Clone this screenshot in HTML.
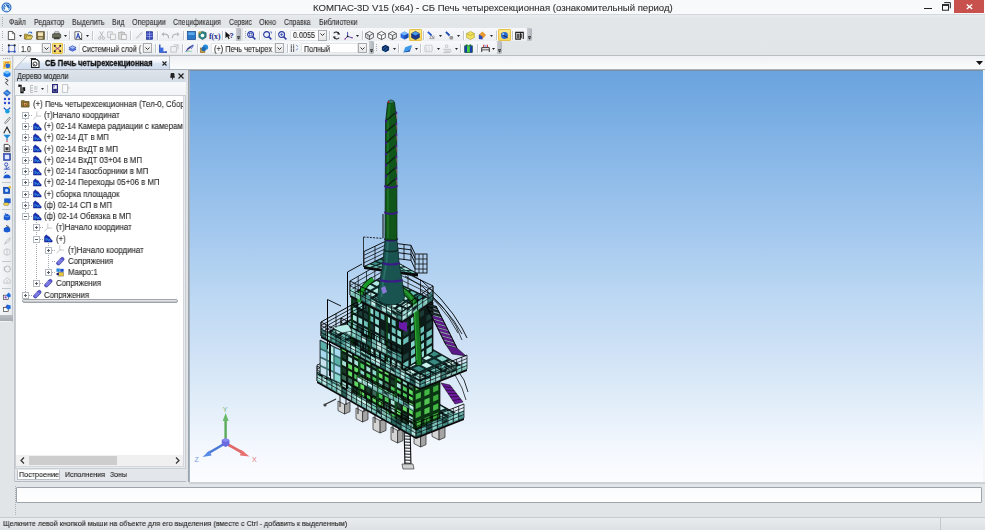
<!DOCTYPE html><html><head><meta charset="utf-8"><style>
*{margin:0;padding:0;box-sizing:border-box}
html,body{width:985px;height:530px;overflow:hidden;background:#e1e5e8;font-family:"Liberation Sans",sans-serif;position:relative}
.a{position:absolute}
.t{position:absolute;white-space:pre;line-height:1;transform-origin:0 0;will-change:transform;-webkit-text-stroke:0.12px currentColor}
svg{position:absolute;overflow:visible}
</style></head><body><div class="a" style="left:0px;top:0px;width:985px;height:15px;background:#f8f9fa"></div><svg style="left:1px;top:2px;" width="11" height="11" viewBox="0 0 11 11"><circle cx="5.5" cy="5.5" r="5" fill="#2d6bc0"/><circle cx="5.5" cy="5.5" r="3.6" fill="none" stroke="#bfe0ff" stroke-width="0.8"/><path d="M3 8.5 L5.5 4 L8 8.5 Z" fill="#fff"/><path d="M4 2.5 L7.5 9" stroke="#fff" stroke-width="1"/><path d="M3.2 5 L7.8 6.5" stroke="#dff" stroke-width="0.9"/></svg><div class="t" style="left:312.7px;top:3.83px;font-size:9.3px;font-weight:normal;color:#333;transform:scaleX(1.029);">КОМПАС-3D V15 (x64) - СБ Печь четырехсекционная (ознакомительный период)</div><div class="a" style="left:924px;top:8px;width:8px;height:1.3px;background:#222"></div><svg style="left:941.5px;top:1.5px;" width="9" height="9" viewBox="0 0 9 9"><rect x="0.5" y="2.6" width="6" height="5.6" fill="none" stroke="#222" stroke-width="1"/><rect x="0.5" y="2.6" width="6" height="1.3" fill="#222"/><path d="M2.2 0.6 H8.3 V6.3" fill="none" stroke="#222" stroke-width="1"/></svg><div class="a" style="left:954px;top:0px;width:30px;height:13px;background:#c8504d"></div><svg style="left:965.5px;top:3.5px;" width="7" height="5.5" viewBox="0 0 7 5.5"><path d="M0.8 0.5 L6.2 5 M6.2 0.5 L0.8 5" stroke="#fff" stroke-width="1.4"/></svg><div class="a" style="left:0px;top:14px;width:985px;height:1px;background:#d3d7db"></div><div class="a" style="left:0px;top:15px;width:985px;height:41px;background:linear-gradient(#e9ecef 0,#e3e6e9 4px,#e1e5e8 100%)"></div><div class="t" style="left:8.8px;top:18.10px;font-size:8.5px;font-weight:normal;color:#333;transform:scaleX(0.804);">Файл</div><div class="t" style="left:33.5px;top:18.10px;font-size:8.5px;font-weight:normal;color:#333;transform:scaleX(0.833);">Редактор</div><div class="t" style="left:71.7px;top:18.10px;font-size:8.5px;font-weight:normal;color:#333;transform:scaleX(0.829);">Выделить</div><div class="t" style="left:111.9px;top:18.10px;font-size:8.5px;font-weight:normal;color:#333;transform:scaleX(0.806);">Вид</div><div class="t" style="left:131.6px;top:18.10px;font-size:8.5px;font-weight:normal;color:#333;transform:scaleX(0.850);">Операции</div><div class="t" style="left:172.8px;top:18.10px;font-size:8.5px;font-weight:normal;color:#333;transform:scaleX(0.804);">Спецификация</div><div class="t" style="left:228.7px;top:18.10px;font-size:8.5px;font-weight:normal;color:#333;transform:scaleX(0.790);">Сервис</div><div class="t" style="left:259.1px;top:18.10px;font-size:8.5px;font-weight:normal;color:#333;transform:scaleX(0.865);">Окно</div><div class="t" style="left:283.7px;top:18.10px;font-size:8.5px;font-weight:normal;color:#333;transform:scaleX(0.797);">Справка</div><div class="t" style="left:318.8px;top:18.10px;font-size:8.5px;font-weight:normal;color:#333;transform:scaleX(0.834);">Библиотеки</div><svg style="left:2px;top:17px;" width="2" height="9" viewBox="0 0 2 9"><rect x="0" y="0" width="1" height="1" fill="#a9adb2"/><rect x="0" y="2" width="1" height="1" fill="#a9adb2"/><rect x="0" y="4" width="1" height="1" fill="#a9adb2"/><rect x="0" y="6" width="1" height="1" fill="#a9adb2"/><rect x="0" y="8" width="1" height="1" fill="#a9adb2"/></svg><div class="a" style="left:0px;top:28px;width:236px;height:13px;background:linear-gradient(#f7f8fa,#eceff2);border-radius:0 2px 2px 0"></div><svg style="left:1.5px;top:31px;" width="2" height="7" viewBox="0 0 2 7"><rect x="0" y="0" width="1" height="1" fill="#a6aab0"/><rect x="0" y="2" width="1" height="1" fill="#a6aab0"/><rect x="0" y="4" width="1" height="1" fill="#a6aab0"/><rect x="0" y="6" width="1" height="1" fill="#a6aab0"/></svg><div class="a" style="left:236px;top:28px;width:5px;height:13px;background:linear-gradient(90deg,#c9cdd2,#aeb3b9);border-radius:0 2px 2px 0"></div><svg style="left:236px;top:36px;" width="5" height="4" viewBox="0 0 5 4"><rect x="1" y="0" width="3" height="0.8" fill="#333"/><path d="M0.8 1.6 H4.2 L2.5 3.4Z" fill="#222"/></svg><div class="a" style="left:243px;top:28px;width:284px;height:13px;background:linear-gradient(#f7f8fa,#eceff2);border-radius:0 2px 2px 0"></div><svg style="left:244.5px;top:31px;" width="2" height="7" viewBox="0 0 2 7"><rect x="0" y="0" width="1" height="1" fill="#a6aab0"/><rect x="0" y="2" width="1" height="1" fill="#a6aab0"/><rect x="0" y="4" width="1" height="1" fill="#a6aab0"/><rect x="0" y="6" width="1" height="1" fill="#a6aab0"/></svg><div class="a" style="left:527px;top:28px;width:5px;height:13px;background:linear-gradient(90deg,#c9cdd2,#aeb3b9);border-radius:0 2px 2px 0"></div><svg style="left:527px;top:36px;" width="5" height="4" viewBox="0 0 5 4"><rect x="1" y="0" width="3" height="0.8" fill="#333"/><path d="M0.8 1.6 H4.2 L2.5 3.4Z" fill="#222"/></svg><div class="a" style="left:0px;top:41px;width:369px;height:13px;background:linear-gradient(#f7f8fa,#eceff2);border-radius:0 2px 2px 0"></div><svg style="left:1.5px;top:44px;" width="2" height="7" viewBox="0 0 2 7"><rect x="0" y="0" width="1" height="1" fill="#a6aab0"/><rect x="0" y="2" width="1" height="1" fill="#a6aab0"/><rect x="0" y="4" width="1" height="1" fill="#a6aab0"/><rect x="0" y="6" width="1" height="1" fill="#a6aab0"/></svg><div class="a" style="left:369px;top:41px;width:5px;height:13px;background:linear-gradient(90deg,#c9cdd2,#aeb3b9);border-radius:0 2px 2px 0"></div><svg style="left:369px;top:49px;" width="5" height="4" viewBox="0 0 5 4"><rect x="1" y="0" width="3" height="0.8" fill="#333"/><path d="M0.8 1.6 H4.2 L2.5 3.4Z" fill="#222"/></svg><div class="a" style="left:374px;top:41px;width:123px;height:13px;background:linear-gradient(#f7f8fa,#eceff2);border-radius:0 2px 2px 0"></div><svg style="left:375.5px;top:44px;" width="2" height="7" viewBox="0 0 2 7"><rect x="0" y="0" width="1" height="1" fill="#a6aab0"/><rect x="0" y="2" width="1" height="1" fill="#a6aab0"/><rect x="0" y="4" width="1" height="1" fill="#a6aab0"/><rect x="0" y="6" width="1" height="1" fill="#a6aab0"/></svg><div class="a" style="left:497px;top:41px;width:5px;height:13px;background:linear-gradient(90deg,#c9cdd2,#aeb3b9);border-radius:0 2px 2px 0"></div><svg style="left:497px;top:49px;" width="5" height="4" viewBox="0 0 5 4"><rect x="1" y="0" width="3" height="0.8" fill="#333"/><path d="M0.8 1.6 H4.2 L2.5 3.4Z" fill="#222"/></svg><div class="a" style="left:0px;top:55px;width:985px;height:1px;background:#b9bdc2"></div><svg style="left:7px;top:31px" width="9" height="9" viewBox="0 0 10 10"><path d="M1.5 0.5 H6 L8.5 3 V9.5 H1.5Z" fill="#fff" stroke="#333" stroke-width="0.9"/><path d="M6 0.5 V3 H8.5" fill="none" stroke="#333" stroke-width="0.7"/></svg><svg style="left:19px;top:35px" width="3" height="2" viewBox="0 0 3 2"><path d="M0 0 H3 L1.5 2Z" fill="#222"/></svg><svg style="left:23.5px;top:31px" width="9" height="9" viewBox="0 0 10 10"><path d="M0.5 3.5 H3.5 L4.5 4.5 H8 V9 H0.5Z" fill="#c9a83a" stroke="#6b5a18" stroke-width="0.7"/><path d="M1.5 9 L3 5.5 H9.8 L8 9Z" fill="#e8d46a" stroke="#6b5a18" stroke-width="0.6"/><path d="M4.5 2.5 Q6.5 0 8.5 1.8" fill="none" stroke="#1f5fd0" stroke-width="1.1"/><path d="M8.8 0.6 L9.2 2.8 L7.2 2.6Z" fill="#1f5fd0"/></svg><svg style="left:35.5px;top:31px" width="9" height="9" viewBox="0 0 10 10"><rect x="0.8" y="0.8" width="8.4" height="8.4" fill="#7a6a3a" stroke="#4a3f20" stroke-width="0.8"/><rect x="2.2" y="1.5" width="5.6" height="4" fill="#f2e2b8"/><rect x="2.5" y="6.5" width="5" height="2.5" fill="#c8b78a"/></svg><div class="a" style="left:47px;top:30.5px;width:1px;height:9px;background:#c2c7cc;box-shadow:1px 0 0 #fff"></div><svg style="left:51.5px;top:31px" width="9" height="9" viewBox="0 0 10 10"><path d="M2.5 3 L3.2 0.8 H7.5 L8 3Z" fill="#ddd" stroke="#555" stroke-width="0.6"/><path d="M0.5 4 Q0.5 3 2 3 H8.5 Q9.7 3 9.7 4.5 V7.5 H0.5Z" fill="#6a6d58" stroke="#333" stroke-width="0.7"/><rect x="2" y="7" width="6.5" height="2.2" fill="#3d3f30"/></svg><svg style="left:63.5px;top:35px" width="3" height="2" viewBox="0 0 3 2"><path d="M0 0 H3 L1.5 2Z" fill="#222"/></svg><div class="a" style="left:69px;top:30.5px;width:1px;height:9px;background:#c2c7cc;box-shadow:1px 0 0 #fff"></div><svg style="left:73.5px;top:31px" width="9" height="9" viewBox="0 0 10 10"><path d="M1 0.8 H6.5 L8.5 2.8 V9.2 H1Z" fill="#fff" stroke="#333" stroke-width="0.8"/><path d="M2.5 8.5 L4.6 2.5 L6.5 8.5 M3.3 6.5 H5.9" fill="none" stroke="#2040b0" stroke-width="1.1"/><path d="M6.2 7.8 L9 9.5" stroke="#222" stroke-width="1"/></svg><svg style="left:86px;top:35px" width="3" height="2" viewBox="0 0 3 2"><path d="M0 0 H3 L1.5 2Z" fill="#222"/></svg><div class="a" style="left:91.5px;top:30.5px;width:1px;height:9px;background:#c2c7cc;box-shadow:1px 0 0 #fff"></div><svg style="left:96.5px;top:31px" width="9" height="9" viewBox="0 0 10 10"><path d="M3 0.5 L6.5 6.5 M7 0.5 L3.5 6.5" stroke="#a8acb0" stroke-width="0.9"/><circle cx="3" cy="8" r="1.4" fill="none" stroke="#a8acb0" stroke-width="0.8"/><circle cx="7" cy="8" r="1.4" fill="none" stroke="#a8acb0" stroke-width="0.8"/></svg><svg style="left:106.5px;top:31px" width="9" height="9" viewBox="0 0 10 10"><rect x="0.8" y="1" width="5" height="6" fill="#f0f0f0" stroke="#b0b4b8" stroke-width="0.8"/><rect x="4" y="3.5" width="5.2" height="6" fill="#f4f4f4" stroke="#b0b4b8" stroke-width="0.8"/></svg><svg style="left:117.5px;top:31px" width="9" height="9" viewBox="0 0 10 10"><rect x="0.8" y="1.5" width="6.5" height="7.5" fill="#ddd" stroke="#aaa" stroke-width="0.8"/><rect x="4" y="4" width="5.2" height="5.5" fill="#f4f4f4" stroke="#aaa" stroke-width="0.8"/><rect x="2.5" y="0.5" width="3" height="2" fill="#bbb"/></svg><div class="a" style="left:129.5px;top:30.5px;width:1px;height:9px;background:#c2c7cc;box-shadow:1px 0 0 #fff"></div><svg style="left:133.5px;top:31px" width="9" height="9" viewBox="0 0 10 10"><path d="M1.5 8.5 L4.5 5 L6 6.5 L2.5 9Z" fill="#c8ccd0"/><path d="M5 5 L9 0.8 M6 6 L9.5 2" stroke="#b8bcc0" stroke-width="0.9"/></svg><svg style="left:145px;top:31px" width="9" height="9" viewBox="0 0 10 10"><rect x="1.5" y="0.8" width="7" height="8.4" fill="#3a4ab8" stroke="#1a2a80" stroke-width="0.7"/><path d="M1.5 3.5 H8.5 M1.5 6.2 H8.5 M5 0.8 V9.2" stroke="#aab8ff" stroke-width="0.7"/></svg><div class="a" style="left:156.5px;top:30.5px;width:1px;height:9px;background:#c2c7cc;box-shadow:1px 0 0 #fff"></div><svg style="left:160.5px;top:31px" width="9" height="9" viewBox="0 0 10 10"><path d="M8.5 8 Q8.5 3.5 4 3.5 H2" fill="none" stroke="#b0b4b8" stroke-width="1.3"/><path d="M0.5 3.5 L3.2 1 V6Z" fill="#b0b4b8"/></svg><svg style="left:171px;top:31px" width="9" height="9" viewBox="0 0 10 10"><path d="M1.5 8 Q1.5 3.5 6 3.5 H8" fill="none" stroke="#b8bcc0" stroke-width="1.3"/><path d="M9.5 3.5 L6.8 1 V6Z" fill="#b8bcc0"/></svg><div class="a" style="left:183px;top:30.5px;width:1px;height:9px;background:#c2c7cc;box-shadow:1px 0 0 #fff"></div><svg style="left:186.5px;top:31px" width="9" height="9" viewBox="0 0 10 10"><rect x="0.5" y="0.5" width="9" height="9" fill="#2a78c8" stroke="#164a90" stroke-width="0.8"/><rect x="1.5" y="1.5" width="7" height="3" fill="#5aa8e8"/></svg><svg style="left:197.5px;top:31px" width="9" height="9" viewBox="0 0 10 10"><path d="M1 2 L5 0.5 L9 2 V7 L5 9.5 L1 7Z" fill="#2a8a8a" stroke="#1a4a4a" stroke-width="0.7"/><circle cx="5" cy="5" r="2" fill="#fff"/><circle cx="2" cy="1.5" r="1.3" fill="#c8a030"/></svg><svg style="left:208.5px;top:31px" width="9" height="9" viewBox="0 0 10 10"><text x="0" y="8.5" font-family="Liberation Serif" font-size="8.5" font-weight="bold" fill="#1a2a8a">f(x)</text></svg><div class="a" style="left:222px;top:30.5px;width:1px;height:9px;background:#c2c7cc;box-shadow:1px 0 0 #fff"></div><svg style="left:224.5px;top:31px" width="9" height="9" viewBox="0 0 10 10"><path d="M0.5 0.5 L0.5 8 L2.5 6.2 L4 9.3 L5.2 8.7 L3.8 5.7 L6.2 5.7Z" fill="#111"/><text x="4.6" y="7.5" font-family="Liberation Sans" font-size="8" font-weight="bold" fill="#1a2a8a">?</text></svg><svg style="left:247px;top:31px" width="9" height="9" viewBox="0 0 10 10"><circle cx="4" cy="4" r="3.3" fill="#e8f0ff" stroke="#2a3aa0" stroke-width="1.2"/><path d="M6.3 6.3 L9.3 9.3" stroke="#2a3aa0" stroke-width="1.6"/><rect x="2.5" y="2.5" width="3" height="3" fill="none" stroke="#2a3aa0" stroke-width="0.7"/></svg><div class="a" style="left:259px;top:30.5px;width:1px;height:9px;background:#c2c7cc;box-shadow:1px 0 0 #fff"></div><svg style="left:262.5px;top:31px" width="9" height="9" viewBox="0 0 10 10"><circle cx="4" cy="4" r="3.3" fill="#e8f0ff" stroke="#2a3aa0" stroke-width="1.2"/><path d="M6.3 6.3 L9.3 9.3" stroke="#2a3aa0" stroke-width="1.6"/><path d="M7.5 1 H9.5 V3" fill="none" stroke="#2a3aa0" stroke-width="0.6"/></svg><div class="a" style="left:275px;top:30.5px;width:1px;height:9px;background:#c2c7cc;box-shadow:1px 0 0 #fff"></div><svg style="left:278px;top:31px" width="9" height="9" viewBox="0 0 10 10"><circle cx="4" cy="4" r="3.3" fill="#e8f0ff" stroke="#2a3aa0" stroke-width="1.2"/><path d="M6.3 6.3 L9.3 9.3" stroke="#2a3aa0" stroke-width="1.6"/><path d="M2.3 4 H5.7 M4 2.3 V5.7" stroke="#2a3aa0" stroke-width="0.8"/></svg><div class="a" style="left:290px;top:29.5px;width:36px;height:11px;background:#fff;border:1px solid #e4e6e8"></div><div class="a" style="left:318px;top:29.5px;width:8.5px;height:11px;background:linear-gradient(#f6f6f6,#e6e6e6);border:1px solid #a8acb0"></div><svg style="left:319.8px;top:33.0px;" width="5" height="3" viewBox="0 0 5 3"><path d="M0.5 0.5 L2.5 2.5 L4.5 0.5" fill="none" stroke="#333" stroke-width="1"/></svg><div class="t" style="left:293.3px;top:31.07px;font-size:8.3px;font-weight:normal;color:#222;transform:scaleX(0.866);">0.0055</div><div class="a" style="left:329px;top:30.5px;width:1px;height:9px;background:#c2c7cc;box-shadow:1px 0 0 #fff"></div><svg style="left:332px;top:31px" width="9" height="9" viewBox="0 0 10 10"><path d="M2 2.5 A3.5 3.5 0 0 1 8 3.5 M8 7.5 A3.5 3.5 0 0 1 2 6.5" fill="none" stroke="#222" stroke-width="1.2"/><path d="M7 1 L9 4 L5.8 4Z M3 9 L1 6 L4.2 6Z" fill="#222"/></svg><svg style="left:344px;top:31px" width="9" height="9" viewBox="0 0 10 10"><path d="M4 1 V6 L1 9 M4 6 L9 7.5" fill="none" stroke="#2a2aa0" stroke-width="0.9"/><circle cx="4" cy="6" r="1" fill="#222"/><circle cx="1.2" cy="8.8" r="0.8" fill="#a020a0"/><circle cx="9" cy="7.5" r="0.8" fill="#a020a0"/></svg><svg style="left:356px;top:35px" width="3" height="2" viewBox="0 0 3 2"><path d="M0 0 H3 L1.5 2Z" fill="#222"/></svg><div class="a" style="left:362px;top:30.5px;width:1px;height:9px;background:#c2c7cc;box-shadow:1px 0 0 #fff"></div><svg style="left:365px;top:31px" width="9" height="9" viewBox="0 0 10 10"><path d="M5 0.5 L9.3 2.8 V7.3 L5 9.5 L0.7 7.3 V2.8Z M0.7 2.8 L5 5 L9.3 2.8 M5 5 V9.5" fill="none" stroke="#333" stroke-width="0.8"/><path d="M3 4 V7 L6.5 5.5" fill="none" stroke="#555" stroke-width="0.5"/></svg><svg style="left:376.5px;top:31px" width="9" height="9" viewBox="0 0 10 10"><path d="M5 0.5 L9.3 2.8 V7.3 L5 9.5 L0.7 7.3 V2.8Z M0.7 2.8 L5 5 L9.3 2.8 M5 5 V9.5" fill="#fff" stroke="#333" stroke-width="0.8"/></svg><svg style="left:388px;top:31px" width="9" height="9" viewBox="0 0 10 10"><path d="M5 0.5 L9.3 2.8 V7.3 L5 9.5 L0.7 7.3 V2.8Z M0.7 2.8 L5 5 L9.3 2.8 M5 5 V9.5" fill="#f4f4f4" stroke="#333" stroke-width="0.8"/><path d="M6.5 4.5 V8" stroke="#888" stroke-width="0.5"/></svg><svg style="left:399.5px;top:31px" width="9" height="9" viewBox="0 0 10 10"><path d="M5 0.5 L9.3 2.8 V7.3 L5 9.5 L0.7 7.3 V2.8Z" fill="#2a6ae0"/><path d="M0.7 2.8 L5 5 L9.3 2.8 L5 0.5Z" fill="#7ab8ff"/><path d="M5 5 V9.5 L9.3 7.3 V2.8Z" fill="#1a4ab0"/></svg><div class="a" style="left:409px;top:29px;width:12.5px;height:12px;background:linear-gradient(#fbe98e,#f5d860);border:1px solid #e6c24a;border-radius:1px"></div><svg style="left:410.8px;top:31px" width="9" height="9" viewBox="0 0 10 10"><path d="M5 0.5 L9.3 2.8 V7.3 L5 9.5 L0.7 7.3 V2.8Z" fill="#1a3a90" stroke="#0a1a50" stroke-width="0.7"/><path d="M0.7 2.8 L5 5 L9.3 2.8 L5 0.5Z" fill="#4a9ae8"/></svg><div class="a" style="left:423px;top:30.5px;width:1px;height:9px;background:#c2c7cc;box-shadow:1px 0 0 #fff"></div><svg style="left:427px;top:31px" width="9" height="9" viewBox="0 0 10 10"><path d="M1 1 L5 5" stroke="#2a5ad0" stroke-width="2"/><path d="M5 5 L8 8.5 H3Z" fill="none" stroke="#666" stroke-width="0.6"/><circle cx="7" cy="6.5" r="1.2" fill="none" stroke="#888" stroke-width="0.6"/></svg><svg style="left:439px;top:35px" width="3" height="2" viewBox="0 0 3 2"><path d="M0 0 H3 L1.5 2Z" fill="#222"/></svg><svg style="left:445px;top:31px" width="9" height="9" viewBox="0 0 10 10"><path d="M1 1 L5 5" stroke="#1a4ab0" stroke-width="2"/><rect x="5" y="5.5" width="4" height="4" rx="1" fill="#999"/></svg><svg style="left:457px;top:35px" width="3" height="2" viewBox="0 0 3 2"><path d="M0 0 H3 L1.5 2Z" fill="#222"/></svg><div class="a" style="left:462.5px;top:30.5px;width:1px;height:9px;background:#c2c7cc;box-shadow:1px 0 0 #fff"></div><svg style="left:466px;top:31px" width="9" height="9" viewBox="0 0 10 10"><path d="M5 0.5 L9.3 2.8 V7.3 L5 9.5 L0.7 7.3 V2.8Z" fill="#f0e060" stroke="#a09020" stroke-width="0.6"/><path d="M0.7 2.8 L5 5 L9.3 2.8" fill="none" stroke="#a09020" stroke-width="0.6"/></svg><svg style="left:478px;top:31px" width="9" height="9" viewBox="0 0 10 10"><path d="M1 9 V4 L5 0.5 L9 4.5 L5 9Z" fill="#e89a30"/><path d="M1 9 V4 L5 6 V9.5Z" fill="#2a4ac0"/></svg><svg style="left:490px;top:35px" width="3" height="2" viewBox="0 0 3 2"><path d="M0 0 H3 L1.5 2Z" fill="#222"/></svg><div class="a" style="left:496px;top:30.5px;width:1px;height:9px;background:#c2c7cc;box-shadow:1px 0 0 #fff"></div><div class="a" style="left:498px;top:29px;width:12.5px;height:12px;background:linear-gradient(#fbe98e,#f5d860);border:1px solid #e6c24a;border-radius:1px"></div><svg style="left:500px;top:31px" width="9" height="9" viewBox="0 0 10 10"><circle cx="5" cy="5" r="3.8" fill="#2a6ad0"/><path d="M1.5 3 Q5 6 8.5 7.5" stroke="#1a1a40" stroke-width="1"/><circle cx="3.5" cy="3.5" r="1.2" fill="#8ac8ff"/></svg><div class="a" style="left:512px;top:30.5px;width:1px;height:9px;background:#c2c7cc;box-shadow:1px 0 0 #fff"></div><svg style="left:515px;top:31px" width="9" height="9" viewBox="0 0 10 10"><path d="M0.8 1.5 H6 V9 H0.8Z M6 1.5 H9.2 V9" fill="none" stroke="#222" stroke-width="1.2"/><rect x="2" y="3" width="3" height="5" fill="#555"/><path d="M7 3 V8" stroke="#222" stroke-width="1"/></svg><svg style="left:6.5px;top:44px" width="9" height="9" viewBox="0 0 10 10"><path d="M2 1.5 V8.5 H8.5 M8.5 8.5 V1.5 M2 1.5 H8.5" fill="none" stroke="#2a4ab0" stroke-width="0.9"/><circle cx="2" cy="1.5" r="1.2" fill="#222"/><circle cx="8.5" cy="1.5" r="1.2" fill="#222"/><circle cx="2" cy="8.5" r="1.2" fill="#2a4ab0"/><circle cx="8.5" cy="8.5" r="1.2" fill="#2a4ab0"/></svg><div class="a" style="left:17.5px;top:43px;width:24.5px;height:10px;background:#fff;border:1px solid #e4e6e8"></div><div class="a" style="left:42.2px;top:43px;width:8.5px;height:10px;background:linear-gradient(#f6f6f6,#e6e6e6);border:1px solid #a8acb0"></div><svg style="left:44.0px;top:46.5px;" width="5" height="3" viewBox="0 0 5 3"><path d="M0.5 0.5 L2.5 2.5 L4.5 0.5" fill="none" stroke="#333" stroke-width="1"/></svg><div class="t" style="left:20.8px;top:44.57px;font-size:8.3px;font-weight:normal;color:#222;transform:scaleX(0.857);">1.0</div><div class="a" style="left:51.5px;top:42.8px;width:11px;height:11px;background:linear-gradient(#fbe98e,#f5d860);border:1px solid #e6c24a;border-radius:1px"></div><svg style="left:52.5px;top:44px" width="9" height="9" viewBox="0 0 10 10"><path d="M1 2 L9 8 M1 8 L9 2" stroke="#8a20a0" stroke-width="0.9"/><circle cx="2" cy="2" r="1.1" fill="#222"/><circle cx="8" cy="8" r="1.1" fill="#222"/><circle cx="8" cy="2" r="1.1" fill="#222"/><circle cx="2" cy="8" r="1.1" fill="#222"/></svg><div class="a" style="left:64px;top:43.5px;width:1px;height:9px;background:#c2c7cc;box-shadow:1px 0 0 #fff"></div><svg style="left:67.5px;top:44px" width="9" height="9" viewBox="0 0 10 10"><path d="M1 6 L5 4 L9 6 L5 8Z" fill="#6a8ae8" stroke="#1a3ab0" stroke-width="0.7"/><path d="M1 4 L5 2 L9 4 L5 6Z" fill="#aac0ff" stroke="#1a3ab0" stroke-width="0.7"/></svg><div class="a" style="left:79px;top:43px;width:64px;height:10px;background:#fff;border:1px solid #e4e6e8"></div><div class="a" style="left:143px;top:43px;width:8.5px;height:10px;background:linear-gradient(#f6f6f6,#e6e6e6);border:1px solid #a8acb0"></div><svg style="left:144.8px;top:46.5px;" width="5" height="3" viewBox="0 0 5 3"><path d="M0.5 0.5 L2.5 2.5 L4.5 0.5" fill="none" stroke="#333" stroke-width="1"/></svg><div class="t" style="left:82.3px;top:44.57px;font-size:8.3px;font-weight:normal;color:#222;transform:scaleX(0.847);">Системный слой (</div><div class="a" style="left:155px;top:43.5px;width:1px;height:9px;background:#c2c7cc;box-shadow:1px 0 0 #fff"></div><svg style="left:157.5px;top:44px" width="9" height="9" viewBox="0 0 10 10"><path d="M2 0.5 V9 H9.5" fill="none" stroke="#1a3ab0" stroke-width="1.4"/><rect x="2" y="4" width="4" height="5" fill="#3a6ae0"/><circle cx="9" cy="9" r="0.9" fill="#1a3ab0"/></svg><svg style="left:169.5px;top:44px" width="9" height="9" viewBox="0 0 10 10"><rect x="1" y="3" width="6" height="6" fill="none" stroke="#b0b4b8" stroke-width="0.8"/><path d="M4 1 H9 V6" fill="none" stroke="#b0b4b8" stroke-width="0.8"/><circle cx="8.5" cy="1.5" r="1" fill="#c8ccd0"/></svg><div class="a" style="left:181.5px;top:43.5px;width:1px;height:9px;background:#c2c7cc;box-shadow:1px 0 0 #fff"></div><svg style="left:184.5px;top:44px" width="9" height="9" viewBox="0 0 10 10"><path d="M1 9 L3 5 L9 1" stroke="#2a3ab0" stroke-width="1"/><path d="M1 9 L5 7 L4 5Z" fill="#c8a0e0"/><path d="M5 3 L7 5 L9.5 1.5" fill="none" stroke="#1a3ab0" stroke-width="0.9"/><rect x="1" y="7.5" width="7" height="1.5" fill="#8ad0a0" opacity="0.7"/></svg><div class="a" style="left:197px;top:43.5px;width:1px;height:9px;background:#c2c7cc;box-shadow:1px 0 0 #fff"></div><svg style="left:199.5px;top:44px" width="9" height="9" viewBox="0 0 10 10"><rect x="0.5" y="4.5" width="5" height="5" fill="#c89a40" stroke="#805a10" stroke-width="0.6"/><circle cx="6" cy="3.5" r="3" fill="#2a8ad8"/><circle cx="4" cy="5.5" r="2.5" fill="#1a6ab8"/></svg><div class="a" style="left:211px;top:43px;width:64px;height:10px;background:#fff;border:1px solid #e4e6e8"></div><div class="a" style="left:275px;top:43px;width:8.5px;height:10px;background:linear-gradient(#f6f6f6,#e6e6e6);border:1px solid #a8acb0"></div><svg style="left:276.8px;top:46.5px;" width="5" height="3" viewBox="0 0 5 3"><path d="M0.5 0.5 L2.5 2.5 L4.5 0.5" fill="none" stroke="#333" stroke-width="1"/></svg><div class="t" style="left:214.3px;top:44.57px;font-size:8.3px;font-weight:normal;color:#222;transform:scaleX(0.885);">(+) Печь четырех</div><div class="a" style="left:287px;top:43.5px;width:1px;height:9px;background:#c2c7cc;box-shadow:1px 0 0 #fff"></div><svg style="left:289.5px;top:44px" width="9" height="9" viewBox="0 0 10 10"><path d="M1.5 0.5 V9.5 M4 0.5 V9.5" stroke="#333" stroke-width="1.2" stroke-dasharray="1 0.5"/><path d="M7 1 L8.5 3 M8.5 5 L7 7" stroke="#2a5ab0" stroke-width="0.8"/></svg><div class="a" style="left:301px;top:43px;width:57px;height:10px;background:#fff;border:1px solid #e4e6e8"></div><div class="a" style="left:358px;top:43px;width:8.5px;height:10px;background:linear-gradient(#f6f6f6,#e6e6e6);border:1px solid #a8acb0"></div><svg style="left:359.8px;top:46.5px;" width="5" height="3" viewBox="0 0 5 3"><path d="M0.5 0.5 L2.5 2.5 L4.5 0.5" fill="none" stroke="#333" stroke-width="1"/></svg><div class="t" style="left:304.3px;top:44.57px;font-size:8.3px;font-weight:normal;color:#222;transform:scaleX(0.855);">Полный</div><svg style="left:380.5px;top:44px" width="9" height="9" viewBox="0 0 10 10"><path d="M1 3 L5 0.8 L9 3 V7 L5 9.2 L1 7Z" fill="#0a2a60"/><path d="M2 6 L6 2.5 M3.5 8 L7.5 4.5" stroke="#3a8ad0" stroke-width="0.8"/></svg><svg style="left:393px;top:48px" width="3" height="2" viewBox="0 0 3 2"><path d="M0 0 H3 L1.5 2Z" fill="#222"/></svg><div class="a" style="left:398px;top:43.5px;width:1px;height:9px;background:#c2c7cc;box-shadow:1px 0 0 #fff"></div><svg style="left:403px;top:44px" width="9" height="9" viewBox="0 0 10 10"><path d="M0.5 9 L2.5 3.5 L9.5 1 L7.5 6.5Z" fill="#3a9ae8"/><path d="M0.5 9 L7.5 6.5 L9.5 1 V3 L7.5 8.5 L0.5 9.5Z" fill="#1a5ab8"/></svg><svg style="left:415px;top:48px" width="3" height="2" viewBox="0 0 3 2"><path d="M0 0 H3 L1.5 2Z" fill="#222"/></svg><div class="a" style="left:420px;top:43.5px;width:1px;height:9px;background:#c2c7cc;box-shadow:1px 0 0 #fff"></div><svg style="left:424px;top:44px" width="9" height="9" viewBox="0 0 10 10"><path d="M1 2 Q3 0 5 2 Q7 0 9 2 V8 Q7 10 5 8 Q3 10 1 8Z" fill="none" stroke="#b8bcc0" stroke-width="0.8"/><path d="M3 3 V8 M6 3 V8" stroke="#c0c4c8" stroke-width="0.6"/></svg><svg style="left:437px;top:48px" width="3" height="2" viewBox="0 0 3 2"><path d="M0 0 H3 L1.5 2Z" fill="#222"/></svg><svg style="left:443px;top:44px" width="9" height="9" viewBox="0 0 10 10"><circle cx="4" cy="2.5" r="1.5" fill="none" stroke="#a8acb0" stroke-width="0.7"/><path d="M0.5 6 H9 M1.5 8 H9.5 M0.5 9.5 H8" stroke="#a8acb0" stroke-width="0.7"/></svg><svg style="left:455px;top:48px" width="3" height="2" viewBox="0 0 3 2"><path d="M0 0 H3 L1.5 2Z" fill="#222"/></svg><div class="a" style="left:460px;top:43.5px;width:1px;height:9px;background:#c2c7cc;box-shadow:1px 0 0 #fff"></div><svg style="left:464px;top:44px" width="9" height="9" viewBox="0 0 10 10"><rect x="0.8" y="2" width="8.4" height="7.5" fill="#40d040" stroke="#104a10" stroke-width="0.7"/><rect x="0.8" y="2" width="2.5" height="7.5" fill="#1a3ab0"/><rect x="6.5" y="2" width="2.7" height="7.5" fill="#1a3ab0"/><rect x="2" y="0.5" width="2" height="2" fill="#1a7a30"/><rect x="6" y="0.5" width="2" height="2" fill="#1a7a30"/></svg><div class="a" style="left:477px;top:43.5px;width:1px;height:9px;background:#c2c7cc;box-shadow:1px 0 0 #fff"></div><svg style="left:480.5px;top:44px" width="9" height="9" viewBox="0 0 10 10"><path d="M0.8 9 V4 H9.2 V9" fill="none" stroke="#222" stroke-width="1"/><path d="M0.8 6.5 H9.2" stroke="#222" stroke-width="0.8"/><path d="M3 0.8 V3.5 M7 0.8 V3.5" stroke="#d02020" stroke-width="1.1"/><path d="M4 1.5 L6 3" stroke="#2a4ad0" stroke-width="0.8"/></svg><svg style="left:492px;top:48px" width="3" height="2" viewBox="0 0 3 2"><path d="M0 0 H3 L1.5 2Z" fill="#222"/></svg><div class="a" style="left:14px;top:56px;width:971px;height:14px;background:linear-gradient(#eef1f4,#fbfcfd);border-bottom:1px solid #a9b0b7"></div><svg style="left:14px;top:55px" width="160" height="15" viewBox="0 0 160 15"><defs><linearGradient id="tg" x1="0" y1="0" x2="0" y2="1"><stop offset="0" stop-color="#ffffff"/><stop offset="0.45" stop-color="#eef3f9"/><stop offset="0.55" stop-color="#d9e4f2"/><stop offset="1" stop-color="#d0dcee"/></linearGradient></defs><path d="M0 14.5 L13 1 H155.5 V14.5 Z" fill="url(#tg)" stroke="#a9b0b7" stroke-width="0.8"/></svg><div class="t" style="left:45.0px;top:58.75px;font-size:8.8px;font-weight:bold;color:#111;transform:scaleX(0.849);-webkit-text-stroke:0.35px #111">СБ Печь четырехсекционная</div><svg style="left:162px;top:60.5px;" width="5" height="5" viewBox="0 0 5 5"><path d="M0.5 0.5 L4.5 4.5 M4.5 0.5 L0.5 4.5" stroke="#222" stroke-width="1.1"/></svg><svg style="left:976px;top:61px;" width="7" height="4" viewBox="0 0 7 4"><path d="M0 0 H7 L3.5 4Z" fill="#111"/></svg><div class="a" style="left:0px;top:56px;width:13px;height:266px;background:linear-gradient(90deg,#f4f5f7,#e9ecef);border-right:1px solid #c4c9ce"></div><div class="a" style="left:0px;top:315px;width:13px;height:6px;background:linear-gradient(#b9bec4,#a5abb1)"></div><svg style="left:3px;top:57.5px;" width="8" height="1" viewBox="0 0 8 1"><rect x="0" y="0" width="1" height="1" fill="#a6aab0"/><rect x="2" y="0" width="1" height="1" fill="#a6aab0"/><rect x="4" y="0" width="1" height="1" fill="#a6aab0"/><rect x="6" y="0" width="1" height="1" fill="#a6aab0"/></svg><div class="a" style="left:13px;top:70px;width:176px;height:413px;background:#e3e7eb"></div><div class="a" style="left:14px;top:70px;width:173px;height:12px;background:linear-gradient(#dde4ec,#d3dbe4)"></div><div class="t" style="left:17.0px;top:72.19px;font-size:8.4px;font-weight:normal;color:#222;transform:scaleX(0.857);">Дерево модели</div><svg style="left:170px;top:73px;" width="5" height="7" viewBox="0 0 5 7"><path d="M1 0.5 H4 V4 H1Z M2.5 4 V6.5 M0 4.2 H5" fill="#222" stroke="#222" stroke-width="0.9"/></svg><svg style="left:178px;top:73px;" width="6" height="6" viewBox="0 0 6 6"><path d="M0.5 0.5 L5.5 5.5 M5.5 0.5 L0.5 5.5" stroke="#222" stroke-width="1.2"/></svg><div class="a" style="left:14px;top:81.5px;width:173px;height:13px;background:linear-gradient(#f8f9fa,#f1f3f5)"></div><div class="a" style="left:15px;top:95px;width:171px;height:374px;background:#fff;border:1px solid #c9ced3;box-shadow:inset -1px -1px 0 #e9ecee,inset -2px -2px 0 #d3d7db"></div><svg style="left:18px;top:84px;" width="7" height="9" viewBox="0 0 7 9"><path d="M1 0.5 V3 M1 1.5 H3 V8.5 H5 V4 H6.5 V7" fill="none" stroke="#111" stroke-width="1.3"/></svg><svg style="left:30px;top:85px;" width="8" height="8" viewBox="0 0 8 8"><path d="M0.5 0.5 H3 M0.5 3 H3 M0.5 5.5 H3 M0.5 7.5 H3 M4 2 H7.5 M4 4 H7.5 M4 6.5 H7.5" stroke="#b0b4b8" stroke-width="0.9"/><path d="M0.5 0.5 V7.5" stroke="#b8bcc0" stroke-width="0.8"/></svg><svg style="left:40.5px;top:88px;" width="3" height="2" viewBox="0 0 3 2"><path d="M0 0 H3 L1.5 2Z" fill="#333"/></svg><div class="a" style="left:47px;top:85px;width:1px;height:8px;background:#c8ccd0"></div><svg style="left:51.5px;top:84px;" width="6" height="9" viewBox="0 0 6 9"><rect x="0.6" y="0.6" width="4.8" height="7.8" fill="#fff" stroke="#2a2a7a" stroke-width="1.2"/><rect x="1.2" y="4.8" width="3.6" height="3" fill="#2a2a7a"/><path d="M2 1.5 V3.5" stroke="#2a2a7a" stroke-width="0.8"/></svg><svg style="left:62px;top:84px;" width="8" height="9" viewBox="0 0 8 9"><rect x="0.6" y="0.6" width="5" height="7.8" fill="#fafafa" stroke="#c0c4c8" stroke-width="0.9"/><path d="M5 2 L7.5 4 L5 6" fill="none" stroke="#c0c4c8" stroke-width="0.8"/></svg><div class="a" style="left:14px;top:469px;width:172px;height:13px;background:#e3e7eb"></div><div class="a" style="left:14px;top:481px;width:174px;height:1px;background:#b4bac0"></div><div class="a" style="left:13.5px;top:70px;width:1px;height:412px;background:#c2c7cc"></div><div class="a" style="left:17px;top:469.5px;width:43px;height:10px;background:#fff;border:1px solid #b9bfc5;border-top:none"></div><div class="t" style="left:18.5px;top:471.03px;font-size:8.0px;font-weight:normal;color:#222;transform:scaleX(0.898);">Построение</div><div class="t" style="left:64.5px;top:471.03px;font-size:8.0px;font-weight:normal;color:#222;transform:scaleX(0.887);">Исполнения</div><div class="t" style="left:109.5px;top:471.03px;font-size:8.0px;font-weight:normal;color:#222;transform:scaleX(0.874);">Зоны</div><div class="a" style="left:186px;top:70px;width:3px;height:412px;background:#dfe3e7;border-right:1px solid #9ea3a8"></div><div class="a" style="left:189px;top:70px;width:794px;height:412px;background:linear-gradient(#6aa3de 0%,#78ade3 10%,#a5c9ee 40%,#bcd8f3 55%,#cfe1f5 68%,#e0edf9 80%,#e8f1fb 85%,#f4f8fe 92%,#fbfcff 100%);border-top:1px solid #7d8fa2;border-left:1px solid #a4b4c4"></div><div class="a" style="left:983px;top:70px;width:2px;height:412px;background:#f3f5f7"></div><div class="a" style="left:189px;top:70px;width:794px;height:412px;overflow:hidden"><div class="a" style="left:-189px;top:-70px;width:985px;height:530px"><svg style="left:0;top:0;filter:none" width="985" height="530" viewBox="0 0 985 530"><polygon points="338.0,401.0 344.6,404.4 344.6,414.0 338.0,410.6" fill="#d4d4d4" stroke="#222" stroke-width="0.7" /><polygon points="344.6,404.4 350.0,402.2 350.0,411.6 344.6,414.0" fill="#a4a4a4" stroke="#222" stroke-width="0.7" /><line x1="340.0" y1="393.0" x2="340.0" y2="407.0" stroke="#111" stroke-width="0.9" /><line x1="346.0" y1="393.0" x2="346.0" y2="405.0" stroke="#111" stroke-width="0.9" /><polygon points="356.0,408.0 362.6,411.4 362.6,422.0 356.0,418.6" fill="#d4d4d4" stroke="#222" stroke-width="0.7" /><polygon points="362.6,411.4 368.0,409.2 368.0,419.6 362.6,422.0" fill="#a4a4a4" stroke="#222" stroke-width="0.7" /><line x1="358.0" y1="400.0" x2="358.0" y2="414.0" stroke="#111" stroke-width="0.9" /><line x1="364.0" y1="400.0" x2="364.0" y2="412.0" stroke="#111" stroke-width="0.9" /><polygon points="373.0,417.0 380.1,420.6 380.1,433.0 373.0,429.4" fill="#d4d4d4" stroke="#222" stroke-width="0.7" /><polygon points="380.1,420.6 386.0,418.3 386.0,430.4 380.1,433.0" fill="#a4a4a4" stroke="#222" stroke-width="0.7" /><line x1="375.0" y1="409.0" x2="375.0" y2="423.0" stroke="#111" stroke-width="0.9" /><line x1="382.0" y1="409.0" x2="382.0" y2="421.0" stroke="#111" stroke-width="0.9" /><polygon points="391.0,427.0 397.6,430.4 397.6,443.0 391.0,439.6" fill="#d4d4d4" stroke="#222" stroke-width="0.7" /><polygon points="397.6,430.4 403.0,428.2 403.0,440.6 397.6,443.0" fill="#a4a4a4" stroke="#222" stroke-width="0.7" /><line x1="393.0" y1="419.0" x2="393.0" y2="433.0" stroke="#111" stroke-width="0.9" /><line x1="399.0" y1="419.0" x2="399.0" y2="431.0" stroke="#111" stroke-width="0.9" /><polygon points="414.0,432.0 420.6,435.4 420.6,447.0 414.0,443.6" fill="#d4d4d4" stroke="#222" stroke-width="0.7" /><polygon points="420.6,435.4 426.0,433.2 426.0,444.6 420.6,447.0" fill="#a4a4a4" stroke="#222" stroke-width="0.7" /><line x1="416.0" y1="424.0" x2="416.0" y2="438.0" stroke="#111" stroke-width="0.9" /><line x1="422.0" y1="424.0" x2="422.0" y2="436.0" stroke="#111" stroke-width="0.9" /><polygon points="432.0,423.0 439.1,426.6 439.1,440.0 432.0,436.4" fill="#d4d4d4" stroke="#222" stroke-width="0.7" /><polygon points="439.1,426.6 445.0,424.3 445.0,437.4 439.1,440.0" fill="#a4a4a4" stroke="#222" stroke-width="0.7" /><line x1="434.0" y1="415.0" x2="434.0" y2="429.0" stroke="#111" stroke-width="0.9" /><line x1="441.0" y1="415.0" x2="441.0" y2="427.0" stroke="#111" stroke-width="0.9" /><line x1="324.0" y1="405.0" x2="336.0" y2="399.0" stroke="#333" stroke-width="1.3" /><circle cx="325" cy="405" r="1.6" fill="#444"/><line x1="404.0" y1="423.0" x2="405.0" y2="467.0" stroke="#111" stroke-width="1.1" /><line x1="410.0" y1="424.0" x2="411.0" y2="467.0" stroke="#111" stroke-width="1.1" /><line x1="404.5" y1="427.0" x2="410.5" y2="427.3" stroke="#000" stroke-width="0.9" /><line x1="404.5" y1="430.0" x2="410.5" y2="430.3" stroke="#000" stroke-width="0.9" /><line x1="404.5" y1="433.0" x2="410.5" y2="433.3" stroke="#000" stroke-width="0.9" /><line x1="404.5" y1="436.0" x2="410.5" y2="436.3" stroke="#000" stroke-width="0.9" /><line x1="404.5" y1="439.0" x2="410.5" y2="439.3" stroke="#000" stroke-width="0.9" /><line x1="404.5" y1="442.0" x2="410.5" y2="442.3" stroke="#000" stroke-width="0.9" /><line x1="404.5" y1="445.0" x2="410.5" y2="445.3" stroke="#000" stroke-width="0.9" /><line x1="404.5" y1="448.0" x2="410.5" y2="448.3" stroke="#000" stroke-width="0.9" /><line x1="404.5" y1="451.0" x2="410.5" y2="451.3" stroke="#000" stroke-width="0.9" /><line x1="404.5" y1="454.0" x2="410.5" y2="454.3" stroke="#000" stroke-width="0.9" /><line x1="404.5" y1="457.0" x2="410.5" y2="457.3" stroke="#000" stroke-width="0.9" /><line x1="404.5" y1="460.0" x2="410.5" y2="460.3" stroke="#000" stroke-width="0.9" /><line x1="404.5" y1="463.0" x2="410.5" y2="463.3" stroke="#000" stroke-width="0.9" /><polygon points="402.0,464.0 413.0,464.0 414.0,469.0 403.0,469.0" fill="#d0d0d0" stroke="#222" stroke-width="0.6" /><polygon points="317.0,381.0 416.0,437.0 464.0,418.0 365.0,362.0" fill="#0f2a28" stroke="#000" stroke-width="0.8" /><polygon points="319.6,381.2 325.2,384.4 330.6,382.3 325.0,379.1" fill="#c8f2ee" stroke="none" stroke-width="0.8" /><polygon points="327.6,378.1 333.2,381.2 338.6,379.1 333.0,375.9" fill="#3a8a84" stroke="none" stroke-width="0.8" /><polygon points="335.6,374.9 341.2,378.1 346.6,375.9 341.0,372.8" fill="#c8f2ee" stroke="none" stroke-width="0.8" /><polygon points="343.6,371.7 349.2,374.9 354.6,372.8 349.0,369.6" fill="#c8f2ee" stroke="none" stroke-width="0.8" /><polygon points="351.6,368.6 357.2,371.7 362.6,369.6 357.0,366.4" fill="#3a8a84" stroke="none" stroke-width="0.8" /><polygon points="359.6,365.4 365.2,368.6 370.6,366.4 365.0,363.3" fill="#3a8a84" stroke="none" stroke-width="0.8" /><polygon points="327.8,385.9 333.5,389.1 338.9,386.9 333.3,383.8" fill="#b0e8e2" stroke="none" stroke-width="0.8" /><polygon points="335.8,382.7 341.5,385.9 346.9,383.8 341.3,380.6" fill="#b0e8e2" stroke="none" stroke-width="0.8" /><polygon points="343.9,379.6 349.5,382.7 354.9,380.6 349.3,377.4" fill="#3a8a84" stroke="none" stroke-width="0.8" /><polygon points="351.9,376.4 357.5,379.6 362.9,377.4 357.3,374.3" fill="#c8f2ee" stroke="none" stroke-width="0.8" /><polygon points="359.9,373.2 365.5,376.4 370.9,374.3 365.3,371.1" fill="#3a8a84" stroke="none" stroke-width="0.8" /><polygon points="367.9,370.1 373.5,373.2 378.9,371.1 373.3,367.9" fill="#b0e8e2" stroke="none" stroke-width="0.8" /><polygon points="336.1,390.6 341.7,393.7 347.1,391.6 341.5,388.4" fill="#8ad4cc" stroke="none" stroke-width="0.8" /><polygon points="344.1,387.4 349.7,390.6 355.1,388.4 349.5,385.3" fill="#c8f2ee" stroke="none" stroke-width="0.8" /><polygon points="352.1,384.2 357.7,387.4 363.1,385.3 357.5,382.1" fill="#6abcb4" stroke="none" stroke-width="0.8" /><polygon points="360.1,381.1 365.7,384.2 371.1,382.1 365.5,378.9" fill="#b0e8e2" stroke="none" stroke-width="0.8" /><polygon points="368.1,377.9 373.7,381.1 379.1,378.9 373.5,375.8" fill="#8ad4cc" stroke="none" stroke-width="0.8" /><polygon points="376.1,374.7 381.7,377.9 387.1,375.8 381.5,372.6" fill="#3a8a84" stroke="none" stroke-width="0.8" /><polygon points="344.3,395.2 350.0,398.4 355.4,396.3 349.8,393.1" fill="#8ad4cc" stroke="none" stroke-width="0.8" /><polygon points="352.3,392.1 358.0,395.2 363.4,393.1 357.8,389.9" fill="#3a8a84" stroke="none" stroke-width="0.8" /><polygon points="360.4,388.9 366.0,392.1 371.4,389.9 365.8,386.8" fill="#c8f2ee" stroke="none" stroke-width="0.8" /><polygon points="368.4,385.7 374.0,388.9 379.4,386.8 373.8,383.6" fill="#c8f2ee" stroke="none" stroke-width="0.8" /><polygon points="376.4,382.6 382.0,385.7 387.4,383.6 381.8,380.4" fill="#3a8a84" stroke="none" stroke-width="0.8" /><polygon points="384.4,379.4 390.0,382.6 395.4,380.4 389.8,377.3" fill="#b0e8e2" stroke="none" stroke-width="0.8" /><polygon points="352.6,399.9 358.2,403.1 363.6,400.9 358.0,397.8" fill="#3a8a84" stroke="none" stroke-width="0.8" /><polygon points="360.6,396.7 366.2,399.9 371.6,397.8 366.0,394.6" fill="#8ad4cc" stroke="none" stroke-width="0.8" /><polygon points="368.6,393.6 374.2,396.7 379.6,394.6 374.0,391.4" fill="#3a8a84" stroke="none" stroke-width="0.8" /><polygon points="376.6,390.4 382.2,393.6 387.6,391.4 382.0,388.3" fill="#8ad4cc" stroke="none" stroke-width="0.8" /><polygon points="384.6,387.2 390.2,390.4 395.6,388.3 390.0,385.1" fill="#8ad4cc" stroke="none" stroke-width="0.8" /><polygon points="392.6,384.1 398.2,387.2 403.6,385.1 398.0,381.9" fill="#8ad4cc" stroke="none" stroke-width="0.8" /><polygon points="360.8,404.6 366.5,407.7 371.9,405.6 366.3,402.4" fill="#b0e8e2" stroke="none" stroke-width="0.8" /><polygon points="368.8,401.4 374.5,404.6 379.9,402.4 374.3,399.3" fill="#b0e8e2" stroke="none" stroke-width="0.8" /><polygon points="376.9,398.2 382.5,401.4 387.9,399.3 382.3,396.1" fill="#3a8a84" stroke="none" stroke-width="0.8" /><polygon points="384.9,395.1 390.5,398.2 395.9,396.1 390.3,392.9" fill="#8ad4cc" stroke="none" stroke-width="0.8" /><polygon points="392.9,391.9 398.5,395.1 403.9,392.9 398.3,389.8" fill="#c8f2ee" stroke="none" stroke-width="0.8" /><polygon points="400.9,388.7 406.5,391.9 411.9,389.8 406.3,386.6" fill="#6abcb4" stroke="none" stroke-width="0.8" /><polygon points="369.1,409.2 374.7,412.4 380.1,410.3 374.5,407.1" fill="#c8f2ee" stroke="none" stroke-width="0.8" /><polygon points="377.1,406.1 382.7,409.2 388.1,407.1 382.5,403.9" fill="#3a8a84" stroke="none" stroke-width="0.8" /><polygon points="385.1,402.9 390.7,406.1 396.1,403.9 390.5,400.8" fill="#b0e8e2" stroke="none" stroke-width="0.8" /><polygon points="393.1,399.7 398.7,402.9 404.1,400.8 398.5,397.6" fill="#3a8a84" stroke="none" stroke-width="0.8" /><polygon points="401.1,396.6 406.7,399.7 412.1,397.6 406.5,394.4" fill="#b0e8e2" stroke="none" stroke-width="0.8" /><polygon points="409.1,393.4 414.7,396.6 420.1,394.4 414.5,391.3" fill="#6abcb4" stroke="none" stroke-width="0.8" /><polygon points="377.3,413.9 383.0,417.1 388.4,414.9 382.8,411.8" fill="#c8f2ee" stroke="none" stroke-width="0.8" /><polygon points="385.3,410.7 391.0,413.9 396.4,411.8 390.8,408.6" fill="#8ad4cc" stroke="none" stroke-width="0.8" /><polygon points="393.4,407.6 399.0,410.7 404.4,408.6 398.8,405.4" fill="#8ad4cc" stroke="none" stroke-width="0.8" /><polygon points="401.4,404.4 407.0,407.6 412.4,405.4 406.8,402.3" fill="#c8f2ee" stroke="none" stroke-width="0.8" /><polygon points="409.4,401.2 415.0,404.4 420.4,402.3 414.8,399.1" fill="#6abcb4" stroke="none" stroke-width="0.8" /><polygon points="417.4,398.1 423.0,401.2 428.4,399.1 422.8,395.9" fill="#c8f2ee" stroke="none" stroke-width="0.8" /><polygon points="385.6,418.6 391.2,421.7 396.6,419.6 391.0,416.4" fill="#3a8a84" stroke="none" stroke-width="0.8" /><polygon points="393.6,415.4 399.2,418.6 404.6,416.4 399.0,413.3" fill="#8ad4cc" stroke="none" stroke-width="0.8" /><polygon points="401.6,412.2 407.2,415.4 412.6,413.3 407.0,410.1" fill="#6abcb4" stroke="none" stroke-width="0.8" /><polygon points="409.6,409.1 415.2,412.2 420.6,410.1 415.0,406.9" fill="#6abcb4" stroke="none" stroke-width="0.8" /><polygon points="417.6,405.9 423.2,409.1 428.6,406.9 423.0,403.8" fill="#b0e8e2" stroke="none" stroke-width="0.8" /><polygon points="425.6,402.7 431.2,405.9 436.6,403.8 431.0,400.6" fill="#3a8a84" stroke="none" stroke-width="0.8" /><polygon points="393.8,423.2 399.5,426.4 404.9,424.3 399.3,421.1" fill="#6abcb4" stroke="none" stroke-width="0.8" /><polygon points="401.8,420.1 407.5,423.2 412.9,421.1 407.3,417.9" fill="#8ad4cc" stroke="none" stroke-width="0.8" /><polygon points="409.9,416.9 415.5,420.1 420.9,417.9 415.3,414.8" fill="#8ad4cc" stroke="none" stroke-width="0.8" /><polygon points="417.9,413.7 423.5,416.9 428.9,414.8 423.3,411.6" fill="#3a8a84" stroke="none" stroke-width="0.8" /><polygon points="425.9,410.6 431.5,413.7 436.9,411.6 431.3,408.4" fill="#8ad4cc" stroke="none" stroke-width="0.8" /><polygon points="433.9,407.4 439.5,410.6 444.9,408.4 439.3,405.3" fill="#c8f2ee" stroke="none" stroke-width="0.8" /><polygon points="402.1,427.9 407.7,431.1 413.1,428.9 407.5,425.8" fill="#8ad4cc" stroke="none" stroke-width="0.8" /><polygon points="410.1,424.7 415.7,427.9 421.1,425.8 415.5,422.6" fill="#6abcb4" stroke="none" stroke-width="0.8" /><polygon points="418.1,421.6 423.7,424.7 429.1,422.6 423.5,419.4" fill="#c8f2ee" stroke="none" stroke-width="0.8" /><polygon points="426.1,418.4 431.7,421.6 437.1,419.4 431.5,416.3" fill="#8ad4cc" stroke="none" stroke-width="0.8" /><polygon points="434.1,415.2 439.7,418.4 445.1,416.3 439.5,413.1" fill="#8ad4cc" stroke="none" stroke-width="0.8" /><polygon points="442.1,412.1 447.7,415.2 453.1,413.1 447.5,409.9" fill="#8ad4cc" stroke="none" stroke-width="0.8" /><polygon points="410.3,432.6 416.0,435.7 421.4,433.6 415.8,430.4" fill="#b0e8e2" stroke="none" stroke-width="0.8" /><polygon points="418.3,429.4 424.0,432.6 429.4,430.4 423.8,427.3" fill="#b0e8e2" stroke="none" stroke-width="0.8" /><polygon points="426.4,426.2 432.0,429.4 437.4,427.3 431.8,424.1" fill="#8ad4cc" stroke="none" stroke-width="0.8" /><polygon points="434.4,423.1 440.0,426.2 445.4,424.1 439.8,420.9" fill="#c8f2ee" stroke="none" stroke-width="0.8" /><polygon points="442.4,419.9 448.0,423.1 453.4,420.9 447.8,417.8" fill="#c8f2ee" stroke="none" stroke-width="0.8" /><polygon points="450.4,416.7 456.0,419.9 461.4,417.8 455.8,414.6" fill="#c8f2ee" stroke="none" stroke-width="0.8" /><polygon points="317.0,381.0 416.0,437.0 416.0,439.0 317.0,383.0" fill="#0a0a0a" stroke="none" stroke-width="0.8" /><polygon points="416.0,437.0 464.0,418.0 464.0,420.0 416.0,439.0" fill="#0a0a0a" stroke="none" stroke-width="0.8" /><polygon points="317.0,372.2 322.3,370.1 322.3,378.9 317.0,381.0" fill="#7ad0c8" stroke="none" stroke-width="0" opacity="0.8"/><polygon points="317.6,374.0 321.7,371.8 321.7,376.2 317.6,378.4" fill="#1a3a36" stroke="none" stroke-width="0.8" /><polygon points="322.3,369.0 327.7,366.9 327.7,376.8 322.3,378.9" fill="#9ae0d8" stroke="none" stroke-width="0" opacity="0.8"/><polygon points="322.9,371.0 327.1,368.8 327.1,373.8 322.9,375.9" fill="#d0f6f2" stroke="none" stroke-width="0.8" /><polygon points="327.7,369.6 333.0,367.5 333.0,374.7 327.7,376.8" fill="#2a6a64" stroke="none" stroke-width="0" opacity="0.8"/><polygon points="333.0,367.5 338.3,365.4 338.3,372.6 333.0,374.7" fill="#9ae0d8" stroke="none" stroke-width="0" opacity="0.8"/><polygon points="338.3,362.6 343.7,360.5 343.7,370.4 338.3,372.6" fill="#7ad0c8" stroke="none" stroke-width="0" opacity="0.8"/><polygon points="338.9,364.6 343.1,362.5 343.1,367.5 338.9,369.6" fill="#d0f6f2" stroke="none" stroke-width="0.8" /><polygon points="343.7,360.5 349.0,358.4 349.0,368.3 343.7,370.4" fill="#2a6a64" stroke="none" stroke-width="0" opacity="0.8"/><polygon points="349.0,361.1 354.3,359.0 354.3,366.2 349.0,368.3" fill="#b8eee8" stroke="none" stroke-width="0" opacity="0.8"/><polygon points="354.3,359.0 359.7,356.9 359.7,364.1 354.3,366.2" fill="#7ad0c8" stroke="none" stroke-width="0" opacity="0.8"/><polygon points="354.9,360.5 359.1,358.4 359.1,362.0 354.9,364.1" fill="#1a3a36" stroke="none" stroke-width="0.8" /><polygon points="359.7,356.9 365.0,354.8 365.0,362.0 359.7,364.1" fill="#4aa098" stroke="none" stroke-width="0" opacity="0.8"/><polygon points="360.3,358.4 364.4,356.2 364.4,359.8 360.3,362.0" fill="#1a3a36" stroke="none" stroke-width="0.8" /><line x1="317.0" y1="377.0" x2="365.0" y2="358.0" stroke="#000" stroke-width="0.68" /><line x1="317.0" y1="373.0" x2="365.0" y2="354.0" stroke="#000" stroke-width="0.68" /><line x1="317.0" y1="369.0" x2="365.0" y2="350.0" stroke="#000" stroke-width="0.68" /><line x1="317.0" y1="365.0" x2="365.0" y2="346.0" stroke="#000" stroke-width="0.85" /><line x1="317.0" y1="381.0" x2="317.0" y2="365.0" stroke="#000" stroke-width="0.68" /><line x1="322.3" y1="378.9" x2="322.3" y2="362.9" stroke="#000" stroke-width="0.68" /><line x1="327.7" y1="376.8" x2="327.7" y2="360.8" stroke="#000" stroke-width="0.68" /><line x1="333.0" y1="374.7" x2="333.0" y2="358.7" stroke="#000" stroke-width="0.68" /><line x1="338.3" y1="372.6" x2="338.3" y2="356.6" stroke="#000" stroke-width="0.68" /><line x1="343.7" y1="370.4" x2="343.7" y2="354.4" stroke="#000" stroke-width="0.68" /><line x1="349.0" y1="368.3" x2="349.0" y2="352.3" stroke="#000" stroke-width="0.68" /><line x1="354.3" y1="366.2" x2="354.3" y2="350.2" stroke="#000" stroke-width="0.68" /><line x1="359.7" y1="364.1" x2="359.7" y2="348.1" stroke="#000" stroke-width="0.68" /><line x1="365.0" y1="362.0" x2="365.0" y2="346.0" stroke="#000" stroke-width="0.68" /><polygon points="341.0,344.0 414.0,384.0 414.0,430.0 341.0,394.0" fill="#0c1a12" stroke="#0a0a0a" stroke-width="0.7" /><polygon points="342.1,345.9 346.0,348.0 346.0,352.6 342.1,350.5" fill="#62dc62" stroke="none" stroke-width="0.8" /><polygon points="342.1,353.0 346.0,355.1 346.0,359.7 342.1,357.6" fill="#1a3a2a" stroke="none" stroke-width="0.8" /><polygon points="342.1,360.2 346.0,362.2 346.0,366.8 342.1,364.7" fill="#a8e0d8" stroke="none" stroke-width="0.8" /><polygon points="342.1,367.3 346.0,369.3 346.0,373.9 342.1,371.9" fill="#1a3a2a" stroke="none" stroke-width="0.8" /><polygon points="342.1,374.4 346.0,376.4 346.0,381.0 342.1,379.0" fill="#3a6a5a" stroke="none" stroke-width="0.8" /><polygon points="342.1,381.6 346.0,383.5 346.0,388.1 342.1,386.1" fill="#a8e0d8" stroke="none" stroke-width="0.8" /><polygon points="342.1,388.7 346.0,390.6 346.0,395.2 342.1,393.3" fill="#3a6a5a" stroke="none" stroke-width="0.8" /><polygon points="348.2,349.2 352.1,351.3 352.1,355.9 348.2,353.7" fill="#a8e0d8" stroke="none" stroke-width="0.8" /><polygon points="348.2,356.3 352.1,358.4 352.1,362.9 348.2,360.8" fill="#a8e0d8" stroke="none" stroke-width="0.8" /><polygon points="348.2,363.4 352.1,365.4 352.1,370.0 348.2,367.9" fill="#62dc62" stroke="none" stroke-width="0.8" /><polygon points="348.2,370.5 352.1,372.5 352.1,377.0 348.2,375.0" fill="#62dc62" stroke="none" stroke-width="0.8" /><polygon points="348.2,377.6 352.1,379.6 352.1,384.1 348.2,382.1" fill="#3a6a5a" stroke="none" stroke-width="0.8" /><polygon points="348.2,384.6 352.1,386.6 352.1,391.1 348.2,389.2" fill="#8ad8c8" stroke="none" stroke-width="0.8" /><polygon points="348.2,391.7 352.1,393.7 352.1,398.2 348.2,396.3" fill="#3a6a5a" stroke="none" stroke-width="0.8" /><polygon points="354.3,352.5 358.2,354.7 358.2,359.1 354.3,357.0" fill="#4ac85a" stroke="none" stroke-width="0.8" /><polygon points="354.3,359.6 358.2,361.7 358.2,366.2 354.3,364.1" fill="#a8e0d8" stroke="none" stroke-width="0.8" /><polygon points="354.3,366.6 358.2,368.7 358.2,373.2 354.3,371.1" fill="#62dc62" stroke="none" stroke-width="0.8" /><polygon points="354.3,373.7 358.2,375.7 358.2,380.2 354.3,378.2" fill="#4ac85a" stroke="none" stroke-width="0.8" /><polygon points="354.3,380.7 358.2,382.7 358.2,387.2 354.3,385.2" fill="#62dc62" stroke="none" stroke-width="0.8" /><polygon points="354.3,387.7 358.2,389.7 358.2,394.2 354.3,392.2" fill="#1a3a2a" stroke="none" stroke-width="0.8" /><polygon points="354.3,394.8 358.2,396.7 358.2,401.2 354.3,399.3" fill="#8ad8c8" stroke="none" stroke-width="0.8" /><polygon points="360.3,355.9 364.2,358.0 364.2,362.4 360.3,360.3" fill="#3a6a5a" stroke="none" stroke-width="0.8" /><polygon points="360.3,362.8 364.2,364.9 364.2,369.4 360.3,367.3" fill="#4ac85a" stroke="none" stroke-width="0.8" /><polygon points="360.3,369.8 364.2,371.9 364.2,376.4 360.3,374.3" fill="#8ad8c8" stroke="none" stroke-width="0.8" /><polygon points="360.3,376.8 364.2,378.9 364.2,383.3 360.3,381.3" fill="#62dc62" stroke="none" stroke-width="0.8" /><polygon points="360.3,383.8 364.2,385.8 364.2,390.3 360.3,388.3" fill="#62dc62" stroke="none" stroke-width="0.8" /><polygon points="360.3,390.8 364.2,392.8 364.2,397.2 360.3,395.3" fill="#62dc62" stroke="none" stroke-width="0.8" /><polygon points="360.3,397.8 364.2,399.8 364.2,404.2 360.3,402.3" fill="#4ac85a" stroke="none" stroke-width="0.8" /><polygon points="366.4,359.2 370.3,361.3 370.3,365.7 366.4,363.6" fill="#62dc62" stroke="none" stroke-width="0.8" /><polygon points="366.4,366.1 370.3,368.2 370.3,372.6 366.4,370.6" fill="#a8e0d8" stroke="none" stroke-width="0.8" /><polygon points="366.4,373.1 370.3,375.1 370.3,379.6 366.4,377.5" fill="#4ac85a" stroke="none" stroke-width="0.8" /><polygon points="366.4,380.0 370.3,382.1 370.3,386.5 366.4,384.5" fill="#8ad8c8" stroke="none" stroke-width="0.8" /><polygon points="366.4,387.0 370.3,389.0 370.3,393.4 366.4,391.4" fill="#1a3a2a" stroke="none" stroke-width="0.8" /><polygon points="366.4,393.9 370.3,395.9 370.3,400.3 366.4,398.3" fill="#4ac85a" stroke="none" stroke-width="0.8" /><polygon points="366.4,400.8 370.3,402.8 370.3,407.2 366.4,405.3" fill="#3a6a5a" stroke="none" stroke-width="0.8" /><polygon points="372.5,362.5 376.4,364.6 376.4,369.0 372.5,366.9" fill="#3a6a5a" stroke="none" stroke-width="0.8" /><polygon points="372.5,369.4 376.4,371.5 376.4,375.9 372.5,373.8" fill="#8ad8c8" stroke="none" stroke-width="0.8" /><polygon points="372.5,376.3 376.4,378.4 376.4,382.8 372.5,380.7" fill="#4ac85a" stroke="none" stroke-width="0.8" /><polygon points="372.5,383.2 376.4,385.2 376.4,389.6 372.5,387.6" fill="#3a6a5a" stroke="none" stroke-width="0.8" /><polygon points="372.5,390.1 376.4,392.1 376.4,396.5 372.5,394.5" fill="#3a6a5a" stroke="none" stroke-width="0.8" /><polygon points="372.5,397.0 376.4,399.0 376.4,403.4 372.5,401.4" fill="#62dc62" stroke="none" stroke-width="0.8" /><polygon points="372.5,403.9 376.4,405.8 376.4,410.2 372.5,408.3" fill="#4ac85a" stroke="none" stroke-width="0.8" /><polygon points="378.6,365.8 382.5,368.0 382.5,372.3 378.6,370.2" fill="#62dc62" stroke="none" stroke-width="0.8" /><polygon points="378.6,372.7 382.5,374.8 382.5,379.1 378.6,377.1" fill="#62dc62" stroke="none" stroke-width="0.8" /><polygon points="378.6,379.5 382.5,381.6 382.5,386.0 378.6,383.9" fill="#8ad8c8" stroke="none" stroke-width="0.8" /><polygon points="378.6,386.4 382.5,388.4 382.5,392.8 378.6,390.8" fill="#4ac85a" stroke="none" stroke-width="0.8" /><polygon points="378.6,393.2 382.5,395.2 382.5,399.6 378.6,397.6" fill="#4ac85a" stroke="none" stroke-width="0.8" /><polygon points="378.6,400.1 382.5,402.1 382.5,406.4 378.6,404.5" fill="#62dc62" stroke="none" stroke-width="0.8" /><polygon points="378.6,406.9 382.5,408.9 382.5,413.2 378.6,411.3" fill="#3a6a5a" stroke="none" stroke-width="0.8" /><polygon points="384.7,369.2 388.6,371.3 388.6,375.6 384.7,373.5" fill="#62dc62" stroke="none" stroke-width="0.8" /><polygon points="384.7,376.0 388.6,378.1 388.6,382.4 384.7,380.3" fill="#4ac85a" stroke="none" stroke-width="0.8" /><polygon points="384.7,382.8 388.6,384.8 388.6,389.2 384.7,387.1" fill="#3a6a5a" stroke="none" stroke-width="0.8" /><polygon points="384.7,389.6 388.6,391.6 388.6,395.9 384.7,393.9" fill="#4ac85a" stroke="none" stroke-width="0.8" /><polygon points="384.7,396.4 388.6,398.4 388.6,402.7 384.7,400.7" fill="#4ac85a" stroke="none" stroke-width="0.8" /><polygon points="384.7,403.2 388.6,405.1 388.6,409.5 384.7,407.5" fill="#3a6a5a" stroke="none" stroke-width="0.8" /><polygon points="384.7,410.0 388.6,411.9 388.6,416.2 384.7,414.3" fill="#4ac85a" stroke="none" stroke-width="0.8" /><polygon points="390.8,372.5 394.7,374.6 394.7,378.9 390.8,376.8" fill="#1a3a2a" stroke="none" stroke-width="0.8" /><polygon points="390.8,379.2 394.7,381.3 394.7,385.6 390.8,383.6" fill="#1a3a2a" stroke="none" stroke-width="0.8" /><polygon points="390.8,386.0 394.7,388.1 394.7,392.4 390.8,390.3" fill="#4ac85a" stroke="none" stroke-width="0.8" /><polygon points="390.8,392.7 394.7,394.8 394.7,399.1 390.8,397.1" fill="#62dc62" stroke="none" stroke-width="0.8" /><polygon points="390.8,399.5 394.7,401.5 394.7,405.8 390.8,403.8" fill="#a8e0d8" stroke="none" stroke-width="0.8" /><polygon points="390.8,406.2 394.7,408.2 394.7,412.5 390.8,410.6" fill="#a8e0d8" stroke="none" stroke-width="0.8" /><polygon points="390.8,413.0 394.7,414.9 394.7,419.2 390.8,417.3" fill="#4ac85a" stroke="none" stroke-width="0.8" /><polygon points="396.8,375.8 400.7,377.9 400.7,382.2 396.8,380.1" fill="#4ac85a" stroke="none" stroke-width="0.8" /><polygon points="396.8,382.5 400.7,384.6 400.7,388.9 396.8,386.8" fill="#a8e0d8" stroke="none" stroke-width="0.8" /><polygon points="396.8,389.2 400.7,391.3 400.7,395.6 396.8,393.5" fill="#4ac85a" stroke="none" stroke-width="0.8" /><polygon points="396.8,395.9 400.7,398.0 400.7,402.2 396.8,400.2" fill="#8ad8c8" stroke="none" stroke-width="0.8" /><polygon points="396.8,402.6 400.7,404.6 400.7,408.9 396.8,406.9" fill="#1a3a2a" stroke="none" stroke-width="0.8" /><polygon points="396.8,409.3 400.7,411.3 400.7,415.6 396.8,413.6" fill="#62dc62" stroke="none" stroke-width="0.8" /><polygon points="396.8,416.0 400.7,418.0 400.7,422.3 396.8,420.3" fill="#1a3a2a" stroke="none" stroke-width="0.8" /><polygon points="402.9,379.1 406.8,381.3 406.8,385.5 402.9,383.4" fill="#8ad8c8" stroke="none" stroke-width="0.8" /><polygon points="402.9,385.8 406.8,387.9 406.8,392.1 402.9,390.1" fill="#4ac85a" stroke="none" stroke-width="0.8" /><polygon points="402.9,392.4 406.8,394.5 406.8,398.8 402.9,396.7" fill="#4ac85a" stroke="none" stroke-width="0.8" /><polygon points="402.9,399.1 406.8,401.1 406.8,405.4 402.9,403.4" fill="#1a3a2a" stroke="none" stroke-width="0.8" /><polygon points="402.9,405.8 406.8,407.8 406.8,412.0 402.9,410.0" fill="#62dc62" stroke="none" stroke-width="0.8" /><polygon points="402.9,412.4 406.8,414.4 406.8,418.6 402.9,416.7" fill="#1a3a2a" stroke="none" stroke-width="0.8" /><polygon points="402.9,419.1 406.8,421.0 406.8,425.3 402.9,423.3" fill="#1a3a2a" stroke="none" stroke-width="0.8" /><polygon points="409.0,382.5 412.9,384.6 412.9,388.8 409.0,386.7" fill="#3a6a5a" stroke="none" stroke-width="0.8" /><polygon points="409.0,389.1 412.9,391.2 412.9,395.4 409.0,393.3" fill="#62dc62" stroke="none" stroke-width="0.8" /><polygon points="409.0,395.7 412.9,397.7 412.9,402.0 409.0,399.9" fill="#62dc62" stroke="none" stroke-width="0.8" /><polygon points="409.0,402.3 412.9,404.3 412.9,408.5 409.0,406.5" fill="#62dc62" stroke="none" stroke-width="0.8" /><polygon points="409.0,408.9 412.9,410.9 412.9,415.1 409.0,413.1" fill="#62dc62" stroke="none" stroke-width="0.8" /><polygon points="409.0,415.5 412.9,417.5 412.9,421.7 409.0,419.7" fill="#a8e0d8" stroke="none" stroke-width="0.8" /><polygon points="409.0,422.1 412.9,424.1 412.9,428.3 409.0,426.4" fill="#a8e0d8" stroke="none" stroke-width="0.8" /><line x1="341.0" y1="344.0" x2="341.0" y2="394.0" stroke="#0f4a1a" stroke-width="2.2" /><line x1="359.2" y1="354.0" x2="359.2" y2="403.0" stroke="#0f4a1a" stroke-width="2" /><line x1="377.5" y1="364.0" x2="377.5" y2="412.0" stroke="#0f4a1a" stroke-width="2" /><line x1="395.8" y1="374.0" x2="395.8" y2="421.0" stroke="#0f4a1a" stroke-width="2" /><line x1="414.0" y1="384.0" x2="414.0" y2="430.0" stroke="#0f5a1f" stroke-width="2.4" /><polygon points="414.0,384.0 440.0,373.0 440.0,419.0 414.0,430.0" fill="#0b3414" stroke="#0a0a0a" stroke-width="0.7" /><polygon points="415.7,385.1 420.9,382.9 420.9,388.4 415.7,390.6" fill="#52c452" stroke="none" stroke-width="0.8" /><polygon points="415.7,394.3 420.9,392.1 420.9,397.6 415.7,399.8" fill="#44b844" stroke="none" stroke-width="0.8" /><polygon points="415.7,403.5 420.9,401.3 420.9,406.8 415.7,409.0" fill="#3aa83a" stroke="none" stroke-width="0.8" /><polygon points="415.7,412.7 420.9,410.5 420.9,416.0 415.7,418.2" fill="#3aa83a" stroke="none" stroke-width="0.8" /><polygon points="415.7,421.9 420.9,419.7 420.9,425.2 415.7,427.4" fill="#44b844" stroke="none" stroke-width="0.8" /><polygon points="424.4,381.4 429.6,379.2 429.6,384.8 424.4,387.0" fill="#44b844" stroke="none" stroke-width="0.8" /><polygon points="424.4,390.6 429.6,388.4 429.6,394.0 424.4,396.2" fill="#44b844" stroke="none" stroke-width="0.8" /><polygon points="424.4,399.8 429.6,397.6 429.6,403.2 424.4,405.4" fill="#52c452" stroke="none" stroke-width="0.8" /><polygon points="424.4,409.0 429.6,406.8 429.6,412.4 424.4,414.6" fill="#52c452" stroke="none" stroke-width="0.8" /><polygon points="424.4,418.2 429.6,416.0 429.6,421.6 424.4,423.8" fill="#3aa83a" stroke="none" stroke-width="0.8" /><polygon points="433.1,377.8 438.3,375.6 438.3,381.1 433.1,383.3" fill="#52c452" stroke="none" stroke-width="0.8" /><polygon points="433.1,387.0 438.3,384.8 438.3,390.3 433.1,392.5" fill="#3aa83a" stroke="none" stroke-width="0.8" /><polygon points="433.1,396.2 438.3,394.0 438.3,399.5 433.1,401.7" fill="#3aa83a" stroke="none" stroke-width="0.8" /><polygon points="433.1,405.4 438.3,403.2 438.3,408.7 433.1,410.9" fill="#44b844" stroke="none" stroke-width="0.8" /><polygon points="433.1,414.6 438.3,412.4 438.3,417.9 433.1,420.1" fill="#3aa83a" stroke="none" stroke-width="0.8" /><polygon points="357.0,376.1 362.2,378.8 362.2,383.7 357.0,381.0" fill="#b8eee8" stroke="none" stroke-width="0" opacity="0.8"/><polygon points="357.6,377.0 361.6,379.8 361.6,382.2 357.6,379.5" fill="#d0f6f2" stroke="none" stroke-width="0.8" /><polygon points="362.2,378.1 367.4,380.9 367.4,386.5 362.2,383.7" fill="#b8eee8" stroke="none" stroke-width="0" opacity="0.8"/><polygon points="367.4,380.9 372.5,383.6 372.5,389.2 367.4,386.5" fill="#4aa098" stroke="none" stroke-width="0" opacity="0.8"/><polygon points="368.0,382.0 371.9,384.7 371.9,387.5 368.0,384.8" fill="#d0f6f2" stroke="none" stroke-width="0.8" /><polygon points="372.5,383.6 377.7,386.3 377.7,391.9 372.5,389.2" fill="#9ae0d8" stroke="none" stroke-width="0" opacity="0.8"/><polygon points="377.7,387.0 382.9,389.7 382.9,394.6 377.7,391.9" fill="#7ad0c8" stroke="none" stroke-width="0" opacity="0.8"/><polygon points="382.9,389.1 388.1,391.8 388.1,397.4 382.9,394.6" fill="#9ae0d8" stroke="none" stroke-width="0" opacity="0.8"/><polygon points="383.5,390.2 387.5,392.9 387.5,395.7 383.5,393.0" fill="#1a3a36" stroke="none" stroke-width="0.8" /><polygon points="388.1,391.8 393.3,394.5 393.3,400.1 388.1,397.4" fill="#8ad8d0" stroke="none" stroke-width="0" opacity="0.8"/><polygon points="393.3,396.0 398.5,398.8 398.5,402.8 393.3,400.1" fill="#7ad0c8" stroke="none" stroke-width="0" opacity="0.8"/><polygon points="398.5,397.9 403.6,400.6 403.6,405.5 398.5,402.8" fill="#7ad0c8" stroke="none" stroke-width="0" opacity="0.8"/><polygon points="403.6,401.5 408.8,404.2 408.8,408.3 403.6,405.5" fill="#8ad8d0" stroke="none" stroke-width="0" opacity="0.8"/><polygon points="404.2,402.3 408.2,405.0 408.2,407.1 404.2,404.3" fill="#1a3a36" stroke="none" stroke-width="0.8" /><polygon points="408.8,403.3 414.0,406.1 414.0,411.0 408.8,408.3" fill="#8ad8d0" stroke="none" stroke-width="0" opacity="0.8"/><polygon points="409.4,404.3 413.4,407.0 413.4,409.5 409.4,406.8" fill="#d0f6f2" stroke="none" stroke-width="0.8" /><line x1="357.0" y1="376.5" x2="414.0" y2="406.5" stroke="#000" stroke-width="0.68" /><line x1="357.0" y1="372.0" x2="414.0" y2="402.0" stroke="#000" stroke-width="0.85" /><line x1="357.0" y1="381.0" x2="357.0" y2="372.0" stroke="#000" stroke-width="0.68" /><line x1="362.2" y1="383.7" x2="362.2" y2="374.7" stroke="#000" stroke-width="0.68" /><line x1="367.4" y1="386.5" x2="367.4" y2="377.5" stroke="#000" stroke-width="0.68" /><line x1="372.5" y1="389.2" x2="372.5" y2="380.2" stroke="#000" stroke-width="0.68" /><line x1="377.7" y1="391.9" x2="377.7" y2="382.9" stroke="#000" stroke-width="0.68" /><line x1="382.9" y1="394.6" x2="382.9" y2="385.6" stroke="#000" stroke-width="0.68" /><line x1="388.1" y1="397.4" x2="388.1" y2="388.4" stroke="#000" stroke-width="0.68" /><line x1="393.3" y1="400.1" x2="393.3" y2="391.1" stroke="#000" stroke-width="0.68" /><line x1="398.5" y1="402.8" x2="398.5" y2="393.8" stroke="#000" stroke-width="0.68" /><line x1="403.6" y1="405.5" x2="403.6" y2="396.5" stroke="#000" stroke-width="0.68" /><line x1="408.8" y1="408.3" x2="408.8" y2="399.3" stroke="#000" stroke-width="0.68" /><line x1="414.0" y1="411.0" x2="414.0" y2="402.0" stroke="#000" stroke-width="0.68" /><polygon points="317.0,374.2 321.9,377.1 321.9,383.8 317.0,381.0" fill="#7ad0c8" stroke="none" stroke-width="0" opacity="0.8"/><polygon points="317.6,375.6 321.3,378.4 321.3,381.8 317.6,379.0" fill="#d0f6f2" stroke="none" stroke-width="0.8" /><polygon points="321.9,377.1 326.9,379.9 326.9,386.6 321.9,383.8" fill="#b8eee8" stroke="none" stroke-width="0" opacity="0.8"/><polygon points="326.9,378.4 331.9,381.1 331.9,389.4 326.9,386.6" fill="#7ad0c8" stroke="none" stroke-width="0" opacity="0.8"/><polygon points="331.9,380.1 336.8,382.9 336.8,392.2 331.9,389.4" fill="#7ad0c8" stroke="none" stroke-width="0" opacity="0.8"/><polygon points="336.8,383.9 341.8,386.8 341.8,395.0 336.8,392.2" fill="#b8eee8" stroke="none" stroke-width="0" opacity="0.8"/><polygon points="341.8,388.2 346.7,391.1 346.7,397.8 341.8,395.0" fill="#2a6a64" stroke="none" stroke-width="0" opacity="0.8"/><polygon points="346.7,388.5 351.6,391.3 351.6,400.6 346.7,397.8" fill="#b8eee8" stroke="none" stroke-width="0" opacity="0.8"/><polygon points="351.6,392.4 356.6,395.1 356.6,403.4 351.6,400.6" fill="#9ae0d8" stroke="none" stroke-width="0" opacity="0.8"/><polygon points="356.6,395.1 361.6,397.9 361.6,406.2 356.6,403.4" fill="#9ae0d8" stroke="none" stroke-width="0" opacity="0.8"/><polygon points="357.2,396.8 360.9,399.6 360.9,403.7 357.2,400.9" fill="#d0f6f2" stroke="none" stroke-width="0.8" /><polygon points="361.6,396.9 366.5,399.7 366.5,409.0 361.6,406.2" fill="#7ad0c8" stroke="none" stroke-width="0" opacity="0.8"/><polygon points="362.2,398.8 365.9,401.6 365.9,406.2 362.2,403.4" fill="#d0f6f2" stroke="none" stroke-width="0.8" /><polygon points="366.5,402.2 371.4,405.1 371.4,411.8 366.5,409.0" fill="#b8eee8" stroke="none" stroke-width="0" opacity="0.8"/><polygon points="371.4,402.5 376.4,405.3 376.4,414.6 371.4,411.8" fill="#7ad0c8" stroke="none" stroke-width="0" opacity="0.8"/><polygon points="376.4,406.4 381.4,409.1 381.4,417.4 376.4,414.6" fill="#9ae0d8" stroke="none" stroke-width="0" opacity="0.8"/><polygon points="377.0,408.0 380.8,410.8 380.8,414.9 377.0,412.1" fill="#1a3a36" stroke="none" stroke-width="0.8" /><polygon points="381.4,408.1 386.3,410.9 386.3,420.2 381.4,417.4" fill="#9ae0d8" stroke="none" stroke-width="0" opacity="0.8"/><polygon points="386.3,411.9 391.2,414.8 391.2,423.0 386.3,420.2" fill="#8ad8d0" stroke="none" stroke-width="0" opacity="0.8"/><polygon points="391.2,416.2 396.2,419.1 396.2,425.8 391.2,423.0" fill="#2a6a64" stroke="none" stroke-width="0" opacity="0.8"/><polygon points="396.2,417.6 401.1,420.4 401.1,428.6 396.2,425.8" fill="#2a6a64" stroke="none" stroke-width="0" opacity="0.8"/><polygon points="396.8,419.2 400.5,422.0 400.5,426.1 396.8,423.3" fill="#1a3a36" stroke="none" stroke-width="0.8" /><polygon points="401.1,421.9 406.1,424.6 406.1,431.4 401.1,428.6" fill="#7ad0c8" stroke="none" stroke-width="0" opacity="0.8"/><polygon points="406.1,423.1 411.1,425.9 411.1,434.2 406.1,431.4" fill="#4aa098" stroke="none" stroke-width="0" opacity="0.8"/><polygon points="411.1,427.4 416.0,430.2 416.0,437.0 411.1,434.2" fill="#b8eee8" stroke="none" stroke-width="0" opacity="0.8"/><line x1="317.0" y1="377.2" x2="416.0" y2="433.2" stroke="#000" stroke-width="0.68" /><line x1="317.0" y1="373.5" x2="416.0" y2="429.5" stroke="#000" stroke-width="0.68" /><line x1="317.0" y1="369.8" x2="416.0" y2="425.8" stroke="#000" stroke-width="0.68" /><line x1="317.0" y1="366.0" x2="416.0" y2="422.0" stroke="#000" stroke-width="0.85" /><line x1="317.0" y1="381.0" x2="317.0" y2="366.0" stroke="#000" stroke-width="0.68" /><line x1="321.9" y1="383.8" x2="321.9" y2="368.8" stroke="#000" stroke-width="0.68" /><line x1="326.9" y1="386.6" x2="326.9" y2="371.6" stroke="#000" stroke-width="0.68" /><line x1="331.9" y1="389.4" x2="331.9" y2="374.4" stroke="#000" stroke-width="0.68" /><line x1="336.8" y1="392.2" x2="336.8" y2="377.2" stroke="#000" stroke-width="0.68" /><line x1="341.8" y1="395.0" x2="341.8" y2="380.0" stroke="#000" stroke-width="0.68" /><line x1="346.7" y1="397.8" x2="346.7" y2="382.8" stroke="#000" stroke-width="0.68" /><line x1="351.6" y1="400.6" x2="351.6" y2="385.6" stroke="#000" stroke-width="0.68" /><line x1="356.6" y1="403.4" x2="356.6" y2="388.4" stroke="#000" stroke-width="0.68" /><line x1="361.6" y1="406.2" x2="361.6" y2="391.2" stroke="#000" stroke-width="0.68" /><line x1="366.5" y1="409.0" x2="366.5" y2="394.0" stroke="#000" stroke-width="0.68" /><line x1="371.4" y1="411.8" x2="371.4" y2="396.8" stroke="#000" stroke-width="0.68" /><line x1="376.4" y1="414.6" x2="376.4" y2="399.6" stroke="#000" stroke-width="0.68" /><line x1="381.4" y1="417.4" x2="381.4" y2="402.4" stroke="#000" stroke-width="0.68" /><line x1="386.3" y1="420.2" x2="386.3" y2="405.2" stroke="#000" stroke-width="0.68" /><line x1="391.2" y1="423.0" x2="391.2" y2="408.0" stroke="#000" stroke-width="0.68" /><line x1="396.2" y1="425.8" x2="396.2" y2="410.8" stroke="#000" stroke-width="0.68" /><line x1="401.1" y1="428.6" x2="401.1" y2="413.6" stroke="#000" stroke-width="0.68" /><line x1="406.1" y1="431.4" x2="406.1" y2="416.4" stroke="#000" stroke-width="0.68" /><line x1="411.1" y1="434.2" x2="411.1" y2="419.2" stroke="#000" stroke-width="0.68" /><line x1="416.0" y1="437.0" x2="416.0" y2="422.0" stroke="#000" stroke-width="0.68" /><polygon points="416.0,430.7 421.3,428.6 421.3,434.9 416.0,437.0" fill="#2a6a64" stroke="none" stroke-width="0" opacity="0.8"/><polygon points="421.3,427.2 426.7,425.1 426.7,432.8 421.3,434.9" fill="#4aa098" stroke="none" stroke-width="0" opacity="0.8"/><polygon points="426.7,424.1 432.0,422.0 432.0,430.7 426.7,432.8" fill="#2a6a64" stroke="none" stroke-width="0" opacity="0.8"/><polygon points="427.3,425.8 431.4,423.7 431.4,428.1 427.3,430.2" fill="#1a3a36" stroke="none" stroke-width="0.8" /><polygon points="432.0,422.0 437.3,419.9 437.3,428.6 432.0,430.7" fill="#8ad8d0" stroke="none" stroke-width="0" opacity="0.8"/><polygon points="437.3,419.9 442.7,417.8 442.7,426.4 437.3,428.6" fill="#4aa098" stroke="none" stroke-width="0" opacity="0.8"/><polygon points="442.7,418.7 448.0,416.6 448.0,424.3 442.7,426.4" fill="#4aa098" stroke="none" stroke-width="0" opacity="0.8"/><polygon points="443.3,420.3 447.4,418.2 447.4,422.0 443.3,424.1" fill="#1a3a36" stroke="none" stroke-width="0.8" /><polygon points="448.0,415.7 453.3,413.5 453.3,422.2 448.0,424.3" fill="#7ad0c8" stroke="none" stroke-width="0" opacity="0.8"/><polygon points="453.3,413.5 458.7,411.4 458.7,420.1 453.3,422.2" fill="#8ad8d0" stroke="none" stroke-width="0" opacity="0.8"/><polygon points="458.7,412.4 464.0,410.3 464.0,418.0 458.7,420.1" fill="#4aa098" stroke="none" stroke-width="0" opacity="0.8"/><line x1="416.0" y1="433.5" x2="464.0" y2="414.5" stroke="#000" stroke-width="0.68" /><line x1="416.0" y1="430.0" x2="464.0" y2="411.0" stroke="#000" stroke-width="0.68" /><line x1="416.0" y1="426.5" x2="464.0" y2="407.5" stroke="#000" stroke-width="0.68" /><line x1="416.0" y1="423.0" x2="464.0" y2="404.0" stroke="#000" stroke-width="0.85" /><line x1="416.0" y1="437.0" x2="416.0" y2="423.0" stroke="#000" stroke-width="0.68" /><line x1="421.3" y1="434.9" x2="421.3" y2="420.9" stroke="#000" stroke-width="0.68" /><line x1="426.7" y1="432.8" x2="426.7" y2="418.8" stroke="#000" stroke-width="0.68" /><line x1="432.0" y1="430.7" x2="432.0" y2="416.7" stroke="#000" stroke-width="0.68" /><line x1="437.3" y1="428.6" x2="437.3" y2="414.6" stroke="#000" stroke-width="0.68" /><line x1="442.7" y1="426.4" x2="442.7" y2="412.4" stroke="#000" stroke-width="0.68" /><line x1="448.0" y1="424.3" x2="448.0" y2="410.3" stroke="#000" stroke-width="0.68" /><line x1="453.3" y1="422.2" x2="453.3" y2="408.2" stroke="#000" stroke-width="0.68" /><line x1="458.7" y1="420.1" x2="458.7" y2="406.1" stroke="#000" stroke-width="0.68" /><line x1="464.0" y1="418.0" x2="464.0" y2="404.0" stroke="#000" stroke-width="0.68" /><polygon points="320.0,340.0 341.0,350.0 341.0,384.0 320.0,374.0" fill="#3a6a6a" stroke="#0a0a0a" stroke-width="0.7" /><polygon points="320.7,341.2 326.3,343.9 326.3,350.6 320.7,348.0" fill="#5ab0a8" stroke="none" stroke-width="0.8" /><polygon points="320.7,349.7 326.3,352.4 326.3,359.1 320.7,356.5" fill="#a8d8f0" stroke="none" stroke-width="0.8" /><polygon points="320.7,358.2 326.3,360.9 326.3,367.6 320.7,365.0" fill="#c8e0f0" stroke="none" stroke-width="0.8" /><polygon points="320.7,366.7 326.3,369.4 326.3,376.1 320.7,373.5" fill="#c8e0f0" stroke="none" stroke-width="0.8" /><polygon points="327.7,344.5 333.3,347.2 333.3,354.0 327.7,351.3" fill="#b8ece6" stroke="none" stroke-width="0.8" /><polygon points="327.7,353.0 333.3,355.7 333.3,362.5 327.7,359.8" fill="#b8ece6" stroke="none" stroke-width="0.8" /><polygon points="327.7,361.5 333.3,364.2 333.3,371.0 327.7,368.3" fill="#8ad8d0" stroke="none" stroke-width="0.8" /><polygon points="327.7,370.0 333.3,372.7 333.3,379.5 327.7,376.8" fill="#c8e0f0" stroke="none" stroke-width="0.8" /><polygon points="334.7,347.9 340.3,350.5 340.3,357.3 334.7,354.6" fill="#a8d8f0" stroke="none" stroke-width="0.8" /><polygon points="334.7,356.4 340.3,359.0 340.3,365.8 334.7,363.1" fill="#5ab0a8" stroke="none" stroke-width="0.8" /><polygon points="334.7,364.9 340.3,367.5 340.3,374.3 334.7,371.6" fill="#a8d8f0" stroke="none" stroke-width="0.8" /><polygon points="334.7,373.4 340.3,376.0 340.3,382.8 334.7,380.1" fill="#8ad8d0" stroke="none" stroke-width="0.8" /><line x1="330.5" y1="344.0" x2="330.5" y2="380.0" stroke="#000" stroke-width="0.9" /><polygon points="321.0,336.0 420.0,388.0 467.0,369.0 366.0,311.0" fill="#0f2a28" stroke="#000" stroke-width="0.8" /><polygon points="323.5,336.0 329.1,339.0 334.2,336.2 328.6,333.2" fill="#c8f2ee" stroke="none" stroke-width="0.8" /><polygon points="331.0,331.9 336.7,334.9 341.8,332.1 336.1,329.1" fill="#6abcb4" stroke="none" stroke-width="0.8" /><polygon points="338.5,327.7 344.2,330.8 349.3,328.0 343.6,324.9" fill="#3a8a84" stroke="none" stroke-width="0.8" /><polygon points="346.0,323.6 351.7,326.7 356.8,323.9 351.1,320.7" fill="#6abcb4" stroke="none" stroke-width="0.8" /><polygon points="353.5,319.4 359.2,322.6 364.3,319.8 358.6,316.6" fill="#b0e8e2" stroke="none" stroke-width="0.8" /><polygon points="361.0,315.3 366.8,318.5 371.9,315.7 366.1,312.4" fill="#c8f2ee" stroke="none" stroke-width="0.8" /><polygon points="331.8,340.4 337.4,343.3 342.5,340.6 336.9,337.6" fill="#8ad4cc" stroke="none" stroke-width="0.8" /><polygon points="339.3,336.3 344.9,339.3 350.1,336.6 344.4,333.5" fill="#6abcb4" stroke="none" stroke-width="0.8" /><polygon points="346.8,332.2 352.5,335.3 357.6,332.6 352.0,329.5" fill="#c8f2ee" stroke="none" stroke-width="0.8" /><polygon points="354.4,328.2 360.0,331.3 365.2,328.6 359.5,325.4" fill="#6abcb4" stroke="none" stroke-width="0.8" /><polygon points="361.9,324.1 367.6,327.3 372.7,324.5 367.0,321.3" fill="#c8f2ee" stroke="none" stroke-width="0.8" /><polygon points="369.4,320.0 375.1,323.3 380.3,320.5 374.6,317.3" fill="#3a8a84" stroke="none" stroke-width="0.8" /><polygon points="340.0,344.7 345.6,347.7 350.8,345.0 345.2,342.0" fill="#b0e8e2" stroke="none" stroke-width="0.8" /><polygon points="347.6,340.7 353.2,343.7 358.4,341.1 352.7,338.0" fill="#3a8a84" stroke="none" stroke-width="0.8" /><polygon points="355.1,336.7 360.8,339.8 366.0,337.1 360.3,334.0" fill="#8ad4cc" stroke="none" stroke-width="0.8" /><polygon points="362.7,332.8 368.4,335.9 373.5,333.2 367.9,330.1" fill="#3a8a84" stroke="none" stroke-width="0.8" /><polygon points="370.3,328.8 376.0,332.0 381.1,329.3 375.4,326.1" fill="#b0e8e2" stroke="none" stroke-width="0.8" /><polygon points="377.8,324.8 383.5,328.0 388.7,325.4 383.0,322.1" fill="#c8f2ee" stroke="none" stroke-width="0.8" /><polygon points="348.3,349.1 353.9,352.0 359.1,349.4 353.4,346.4" fill="#6abcb4" stroke="none" stroke-width="0.8" /><polygon points="355.9,345.2 361.5,348.2 366.7,345.6 361.0,342.5" fill="#b0e8e2" stroke="none" stroke-width="0.8" /><polygon points="363.5,341.3 369.1,344.3 374.3,341.7 368.6,338.6" fill="#6abcb4" stroke="none" stroke-width="0.8" /><polygon points="371.0,337.4 376.7,340.5 381.9,337.9 376.2,334.7" fill="#b0e8e2" stroke="none" stroke-width="0.8" /><polygon points="378.6,333.5 384.3,336.6 389.5,334.0 383.8,330.8" fill="#8ad4cc" stroke="none" stroke-width="0.8" /><polygon points="386.2,329.6 391.9,332.8 397.1,330.2 391.4,326.9" fill="#3a8a84" stroke="none" stroke-width="0.8" /><polygon points="356.5,353.4 362.2,356.4 367.3,353.8 361.7,350.8" fill="#b0e8e2" stroke="none" stroke-width="0.8" /><polygon points="364.2,349.6 369.8,352.6 375.0,350.0 369.3,347.0" fill="#8ad4cc" stroke="none" stroke-width="0.8" /><polygon points="371.8,345.8 377.4,348.8 382.6,346.3 376.9,343.2" fill="#3a8a84" stroke="none" stroke-width="0.8" /><polygon points="379.4,342.0 385.1,345.1 390.2,342.5 384.6,339.4" fill="#6abcb4" stroke="none" stroke-width="0.8" /><polygon points="387.0,338.1 392.7,341.3 397.9,338.8 392.2,335.5" fill="#c8f2ee" stroke="none" stroke-width="0.8" /><polygon points="394.6,334.3 400.3,337.6 405.5,335.0 399.8,331.7" fill="#8ad4cc" stroke="none" stroke-width="0.8" /><polygon points="364.8,357.8 370.4,360.7 375.6,358.2 370.0,355.2" fill="#8ad4cc" stroke="none" stroke-width="0.8" /><polygon points="372.4,354.0 378.1,357.0 383.3,354.5 377.6,351.5" fill="#8ad4cc" stroke="none" stroke-width="0.8" /><polygon points="380.1,350.3 385.7,353.4 390.9,350.9 385.3,347.7" fill="#3a8a84" stroke="none" stroke-width="0.8" /><polygon points="387.7,346.6 393.4,349.7 398.6,347.2 392.9,344.0" fill="#b0e8e2" stroke="none" stroke-width="0.8" /><polygon points="395.4,342.8 401.1,346.0 406.3,343.5 400.6,340.3" fill="#8ad4cc" stroke="none" stroke-width="0.8" /><polygon points="403.0,339.1 408.7,342.3 413.9,339.8 408.2,336.5" fill="#c8f2ee" stroke="none" stroke-width="0.8" /><polygon points="373.0,362.1 378.7,365.1 383.9,362.6 378.3,359.6" fill="#c8f2ee" stroke="none" stroke-width="0.8" /><polygon points="380.7,358.5 386.4,361.5 391.6,359.0 385.9,356.0" fill="#8ad4cc" stroke="none" stroke-width="0.8" /><polygon points="388.4,354.8 394.0,357.9 399.3,355.4 393.6,352.3" fill="#c8f2ee" stroke="none" stroke-width="0.8" /><polygon points="396.1,351.1 401.7,354.3 407.0,351.8 401.3,348.7" fill="#b0e8e2" stroke="none" stroke-width="0.8" /><polygon points="403.7,347.5 409.4,350.7 414.6,348.2 408.9,345.0" fill="#3a8a84" stroke="none" stroke-width="0.8" /><polygon points="411.4,343.8 417.1,347.1 422.3,344.6 416.6,341.4" fill="#6abcb4" stroke="none" stroke-width="0.8" /><polygon points="381.3,366.5 386.9,369.4 392.2,367.0 386.5,364.0" fill="#3a8a84" stroke="none" stroke-width="0.8" /><polygon points="389.0,362.9 394.6,365.9 399.9,363.5 394.2,360.5" fill="#3a8a84" stroke="none" stroke-width="0.8" /><polygon points="396.7,359.3 402.4,362.4 407.6,360.0 401.9,356.9" fill="#b0e8e2" stroke="none" stroke-width="0.8" /><polygon points="404.4,355.7 410.1,358.9 415.3,356.5 409.6,353.3" fill="#8ad4cc" stroke="none" stroke-width="0.8" /><polygon points="412.1,352.2 417.8,355.4 423.0,353.0 417.3,349.7" fill="#3a8a84" stroke="none" stroke-width="0.8" /><polygon points="419.8,348.6 425.5,351.8 430.8,349.5 425.0,346.2" fill="#b0e8e2" stroke="none" stroke-width="0.8" /><polygon points="389.6,370.8 395.2,373.8 400.4,371.4 394.8,368.4" fill="#3a8a84" stroke="none" stroke-width="0.8" /><polygon points="397.3,367.3 402.9,370.3 408.2,368.0 402.5,364.9" fill="#8ad4cc" stroke="none" stroke-width="0.8" /><polygon points="405.0,363.8 410.7,366.9 415.9,364.6 410.3,361.5" fill="#c8f2ee" stroke="none" stroke-width="0.8" /><polygon points="412.7,360.3 418.4,363.5 423.7,361.1 418.0,358.0" fill="#3a8a84" stroke="none" stroke-width="0.8" /><polygon points="420.5,356.9 426.2,360.0 431.4,357.7 425.7,354.5" fill="#c8f2ee" stroke="none" stroke-width="0.8" /><polygon points="428.2,353.4 433.9,356.6 439.2,354.3 433.4,351.0" fill="#3a8a84" stroke="none" stroke-width="0.8" /><polygon points="397.8,375.1 403.4,378.1 408.7,375.8 403.1,372.8" fill="#c8f2ee" stroke="none" stroke-width="0.8" /><polygon points="405.6,371.7 411.2,374.8 416.5,372.5 410.8,369.4" fill="#c8f2ee" stroke="none" stroke-width="0.8" /><polygon points="413.3,368.3 419.0,371.4 424.3,369.1 418.6,366.0" fill="#3a8a84" stroke="none" stroke-width="0.8" /><polygon points="421.1,364.9 426.7,368.1 432.0,365.8 426.3,362.6" fill="#c8f2ee" stroke="none" stroke-width="0.8" /><polygon points="428.8,361.5 434.5,364.7 439.8,362.4 434.1,359.2" fill="#3a8a84" stroke="none" stroke-width="0.8" /><polygon points="436.6,358.1 442.3,361.4 447.6,359.1 441.9,355.8" fill="#8ad4cc" stroke="none" stroke-width="0.8" /><polygon points="406.1,379.5 411.7,382.5 417.0,380.2 411.4,377.2" fill="#8ad4cc" stroke="none" stroke-width="0.8" /><polygon points="413.8,376.2 419.5,379.2 424.8,377.0 419.1,373.9" fill="#b0e8e2" stroke="none" stroke-width="0.8" /><polygon points="421.6,372.9 427.3,375.9 432.6,373.7 426.9,370.6" fill="#6abcb4" stroke="none" stroke-width="0.8" /><polygon points="429.4,369.5 435.1,372.7 440.4,370.4 434.7,367.3" fill="#6abcb4" stroke="none" stroke-width="0.8" /><polygon points="437.2,366.2 442.9,369.4 448.2,367.2 442.5,364.0" fill="#6abcb4" stroke="none" stroke-width="0.8" /><polygon points="445.0,362.9 450.7,366.1 456.0,363.9 450.3,360.6" fill="#c8f2ee" stroke="none" stroke-width="0.8" /><polygon points="414.3,383.8 419.9,386.8 425.3,384.6 419.6,381.6" fill="#6abcb4" stroke="none" stroke-width="0.8" /><polygon points="422.1,380.6 427.8,383.6 433.1,381.5 427.4,378.4" fill="#8ad4cc" stroke="none" stroke-width="0.8" /><polygon points="429.9,377.4 435.6,380.4 440.9,378.3 435.3,375.2" fill="#6abcb4" stroke="none" stroke-width="0.8" /><polygon points="437.7,374.1 443.4,377.3 448.7,375.1 443.1,371.9" fill="#b0e8e2" stroke="none" stroke-width="0.8" /><polygon points="445.6,370.9 451.2,374.1 456.6,371.9 450.9,368.7" fill="#6abcb4" stroke="none" stroke-width="0.8" /><polygon points="453.4,367.7 459.1,370.9 464.4,368.7 458.7,365.5" fill="#6abcb4" stroke="none" stroke-width="0.8" /><polygon points="321.0,336.0 420.0,388.0 420.0,390.0 321.0,338.0" fill="#0a0a0a" stroke="none" stroke-width="0.8" /><polygon points="420.0,388.0 467.0,369.0 467.0,371.0 420.0,390.0" fill="#0a0a0a" stroke="none" stroke-width="0.8" /><polygon points="441.0,383.0 450.0,385.0 463.0,402.0 455.0,404.0" fill="#6a1a9a" stroke="#000" stroke-width="0.5" /><line x1="443.3" y1="386.5" x2="452.2" y2="387.8" stroke="#000" stroke-width="0.5" /><line x1="445.7" y1="390.0" x2="454.3" y2="390.7" stroke="#000" stroke-width="0.5" /><line x1="448.0" y1="393.5" x2="456.5" y2="393.5" stroke="#000" stroke-width="0.5" /><line x1="450.3" y1="397.0" x2="458.7" y2="396.3" stroke="#000" stroke-width="0.5" /><line x1="452.7" y1="400.5" x2="460.8" y2="399.2" stroke="#000" stroke-width="0.5" /><polyline points="446.0,360.0 456.0,368.0 464.0,380.0 468.0,392.0" fill="none" stroke="#000" stroke-width="0.8" /><polyline points="444.0,366.0 455.0,375.0 462.0,388.0 466.0,400.0" fill="none" stroke="#000" stroke-width="0.7" /><polygon points="352.0,297.0 402.0,323.0 402.0,371.0 352.0,344.0" fill="#0c1a18" stroke="#0a0a0a" stroke-width="0.7" /><polygon points="352.9,298.7 356.7,300.7 356.7,306.0 352.9,304.0" fill="#1a3a36" stroke="none" stroke-width="0.8" /><polygon points="352.9,306.6 356.7,308.5 356.7,313.9 352.9,311.9" fill="#8ad8d0" stroke="none" stroke-width="0.8" /><polygon points="352.9,314.4 356.7,316.4 356.7,321.7 352.9,319.7" fill="#a8e4de" stroke="none" stroke-width="0.8" /><polygon points="352.9,322.2 356.7,324.2 356.7,329.6 352.9,327.6" fill="#8ad8d0" stroke="none" stroke-width="0.8" /><polygon points="352.9,330.1 356.7,332.1 356.7,337.4 352.9,335.4" fill="#a8e4de" stroke="none" stroke-width="0.8" /><polygon points="352.9,337.9 356.7,339.9 356.7,345.3 352.9,343.2" fill="#0c1a18" stroke="none" stroke-width="0.8" /><polygon points="358.4,301.6 362.2,303.6 362.2,308.9 358.4,306.9" fill="#8ad8d0" stroke="none" stroke-width="0.8" /><polygon points="358.4,309.5 362.2,311.4 362.2,316.8 358.4,314.8" fill="#1a3a36" stroke="none" stroke-width="0.8" /><polygon points="358.4,317.3 362.2,319.3 362.2,324.7 358.4,322.7" fill="#8ad8d0" stroke="none" stroke-width="0.8" /><polygon points="358.4,325.2 362.2,327.2 362.2,332.5 358.4,330.5" fill="#2a5a54" stroke="none" stroke-width="0.8" /><polygon points="358.4,333.0 362.2,335.0 362.2,340.4 358.4,338.4" fill="#1a3a36" stroke="none" stroke-width="0.8" /><polygon points="358.4,340.9 362.2,342.9 362.2,348.3 358.4,346.2" fill="#2a5a54" stroke="none" stroke-width="0.8" /><polygon points="364.0,304.5 367.8,306.5 367.8,311.8 364.0,309.9" fill="#2a5a54" stroke="none" stroke-width="0.8" /><polygon points="364.0,312.4 367.8,314.4 367.8,319.7 364.0,317.7" fill="#1a3a36" stroke="none" stroke-width="0.8" /><polygon points="364.0,320.2 367.8,322.2 367.8,327.6 364.0,325.6" fill="#6ac0b8" stroke="none" stroke-width="0.8" /><polygon points="364.0,328.1 367.8,330.1 367.8,335.5 364.0,333.5" fill="#6ac0b8" stroke="none" stroke-width="0.8" /><polygon points="364.0,336.0 367.8,338.0 367.8,343.4 364.0,341.3" fill="#0c1a18" stroke="none" stroke-width="0.8" /><polygon points="364.0,343.9 367.8,345.9 367.8,351.3 364.0,349.2" fill="#2a5a54" stroke="none" stroke-width="0.8" /><polygon points="369.6,307.4 373.3,309.4 373.3,314.7 369.6,312.8" fill="#8ad8d0" stroke="none" stroke-width="0.8" /><polygon points="369.6,315.3 373.3,317.3 373.3,322.6 369.6,320.6" fill="#6ac0b8" stroke="none" stroke-width="0.8" /><polygon points="369.6,323.2 373.3,325.2 373.3,330.5 369.6,328.5" fill="#1a3a36" stroke="none" stroke-width="0.8" /><polygon points="369.6,331.1 373.3,333.1 373.3,338.4 369.6,336.4" fill="#1a3a36" stroke="none" stroke-width="0.8" /><polygon points="369.6,339.0 373.3,341.0 373.3,346.4 369.6,344.3" fill="#1a3a36" stroke="none" stroke-width="0.8" /><polygon points="369.6,346.9 373.3,348.9 373.3,354.3 369.6,352.2" fill="#a8e4de" stroke="none" stroke-width="0.8" /><polygon points="375.1,310.3 378.9,312.2 378.9,317.6 375.1,315.7" fill="#6ac0b8" stroke="none" stroke-width="0.8" /><polygon points="375.1,318.2 378.9,320.2 378.9,325.6 375.1,323.6" fill="#8ad8d0" stroke="none" stroke-width="0.8" /><polygon points="375.1,326.1 378.9,328.1 378.9,333.5 375.1,331.5" fill="#a8e4de" stroke="none" stroke-width="0.8" /><polygon points="375.1,334.0 378.9,336.0 378.9,341.4 375.1,339.4" fill="#8ad8d0" stroke="none" stroke-width="0.8" /><polygon points="375.1,341.9 378.9,343.9 378.9,349.3 375.1,347.3" fill="#2a5a54" stroke="none" stroke-width="0.8" /><polygon points="375.1,349.8 378.9,351.9 378.9,357.3 375.1,355.2" fill="#8ad8d0" stroke="none" stroke-width="0.8" /><polygon points="380.7,313.2 384.4,315.1 384.4,320.5 380.7,318.6" fill="#6ac0b8" stroke="none" stroke-width="0.8" /><polygon points="380.7,321.1 384.4,323.1 384.4,328.5 380.7,326.5" fill="#0c1a18" stroke="none" stroke-width="0.8" /><polygon points="380.7,329.0 384.4,331.0 384.4,336.4 380.7,334.4" fill="#2a5a54" stroke="none" stroke-width="0.8" /><polygon points="380.7,337.0 384.4,339.0 384.4,344.4 380.7,342.4" fill="#8ad8d0" stroke="none" stroke-width="0.8" /><polygon points="380.7,344.9 384.4,346.9 384.4,352.3 380.7,350.3" fill="#a8e4de" stroke="none" stroke-width="0.8" /><polygon points="380.7,352.8 384.4,354.8 384.4,360.2 380.7,358.2" fill="#6ac0b8" stroke="none" stroke-width="0.8" /><polygon points="386.2,316.1 390.0,318.0 390.0,323.4 386.2,321.5" fill="#a8e4de" stroke="none" stroke-width="0.8" /><polygon points="386.2,324.0 390.0,326.0 390.0,331.4 386.2,329.4" fill="#0c1a18" stroke="none" stroke-width="0.8" /><polygon points="386.2,332.0 390.0,334.0 390.0,339.4 386.2,337.4" fill="#6ac0b8" stroke="none" stroke-width="0.8" /><polygon points="386.2,339.9 390.0,341.9 390.0,347.3 386.2,345.3" fill="#1a3a36" stroke="none" stroke-width="0.8" /><polygon points="386.2,347.9 390.0,349.9 390.0,355.3 386.2,353.3" fill="#a8e4de" stroke="none" stroke-width="0.8" /><polygon points="386.2,355.8 390.0,357.8 390.0,363.2 386.2,361.2" fill="#6ac0b8" stroke="none" stroke-width="0.8" /><polygon points="391.8,319.0 395.6,320.9 395.6,326.4 391.8,324.4" fill="#6ac0b8" stroke="none" stroke-width="0.8" /><polygon points="391.8,326.9 395.6,328.9 395.6,334.3 391.8,332.3" fill="#6ac0b8" stroke="none" stroke-width="0.8" /><polygon points="391.8,334.9 395.6,336.9 395.6,342.3 391.8,340.3" fill="#8ad8d0" stroke="none" stroke-width="0.8" /><polygon points="391.8,342.9 395.6,344.9 395.6,350.3 391.8,348.3" fill="#1a3a36" stroke="none" stroke-width="0.8" /><polygon points="391.8,350.8 395.6,352.8 395.6,358.3 391.8,356.2" fill="#2a5a54" stroke="none" stroke-width="0.8" /><polygon points="391.8,358.8 395.6,360.8 395.6,366.2 391.8,364.2" fill="#a8e4de" stroke="none" stroke-width="0.8" /><polygon points="397.3,321.9 401.1,323.8 401.1,329.3 397.3,327.3" fill="#0c1a18" stroke="none" stroke-width="0.8" /><polygon points="397.3,329.8 401.1,331.8 401.1,337.3 397.3,335.3" fill="#8ad8d0" stroke="none" stroke-width="0.8" /><polygon points="397.3,337.8 401.1,339.8 401.1,345.2 397.3,343.2" fill="#8ad8d0" stroke="none" stroke-width="0.8" /><polygon points="397.3,345.8 401.1,347.8 401.1,353.2 397.3,351.2" fill="#1a3a36" stroke="none" stroke-width="0.8" /><polygon points="397.3,353.8 401.1,355.8 401.1,361.2 397.3,359.2" fill="#1a3a36" stroke="none" stroke-width="0.8" /><polygon points="397.3,361.8 401.1,363.8 401.1,369.2 397.3,367.2" fill="#a8e4de" stroke="none" stroke-width="0.8" /><line x1="352.0" y1="297.0" x2="352.0" y2="344.0" stroke="#0a3a12" stroke-width="1.8" /><line x1="369.5" y1="306.1" x2="369.5" y2="353.4" stroke="#0a3a12" stroke-width="1.8" /><line x1="387.0" y1="315.2" x2="387.0" y2="362.9" stroke="#0a3a12" stroke-width="1.8" /><line x1="402.0" y1="323.0" x2="402.0" y2="371.0" stroke="#0a3a12" stroke-width="1.8" /><polygon points="402.0,323.0 433.0,302.0 433.0,352.0 402.0,371.0" fill="#0c1a18" stroke="#0a0a0a" stroke-width="0.7" /><polygon points="403.2,323.4 408.5,319.9 408.5,325.4 403.2,328.9" fill="#1a3a36" stroke="none" stroke-width="0.8" /><polygon points="403.2,331.5 408.5,328.0 408.5,333.4 403.2,336.9" fill="#1a3a36" stroke="none" stroke-width="0.8" /><polygon points="403.2,339.5 408.5,336.0 408.5,341.5 403.2,344.9" fill="#6ac0b8" stroke="none" stroke-width="0.8" /><polygon points="403.2,347.5 408.5,344.1 408.5,349.6 403.2,352.9" fill="#0c1a18" stroke="none" stroke-width="0.8" /><polygon points="403.2,355.5 408.5,352.2 408.5,357.6 403.2,360.9" fill="#1a3a36" stroke="none" stroke-width="0.8" /><polygon points="403.2,363.5 408.5,360.2 408.5,365.7 403.2,369.0" fill="#6ac0b8" stroke="none" stroke-width="0.8" /><polygon points="411.0,318.2 416.3,314.6 416.3,320.2 411.0,323.7" fill="#8ad8d0" stroke="none" stroke-width="0.8" /><polygon points="411.0,326.3 416.3,322.8 416.3,328.3 411.0,331.8" fill="#6ac0b8" stroke="none" stroke-width="0.8" /><polygon points="411.0,334.4 416.3,331.0 416.3,336.5 411.0,339.9" fill="#1a3a36" stroke="none" stroke-width="0.8" /><polygon points="411.0,342.5 416.3,339.1 416.3,344.6 411.0,348.0" fill="#8ad8d0" stroke="none" stroke-width="0.8" /><polygon points="411.0,350.6 416.3,347.3 416.3,352.8 411.0,356.1" fill="#6ac0b8" stroke="none" stroke-width="0.8" /><polygon points="411.0,358.7 416.3,355.4 416.3,361.0 411.0,364.2" fill="#8ad8d0" stroke="none" stroke-width="0.8" /><polygon points="418.7,313.0 424.0,309.4 424.0,315.0 418.7,318.5" fill="#1a3a36" stroke="none" stroke-width="0.8" /><polygon points="418.7,321.1 424.0,317.6 424.0,323.2 418.7,326.7" fill="#0c1a18" stroke="none" stroke-width="0.8" /><polygon points="418.7,329.3 424.0,325.9 424.0,331.5 418.7,334.9" fill="#6ac0b8" stroke="none" stroke-width="0.8" /><polygon points="418.7,337.5 424.0,334.1 424.0,339.7 418.7,343.1" fill="#6ac0b8" stroke="none" stroke-width="0.8" /><polygon points="418.7,345.7 424.0,342.4 424.0,348.0 418.7,351.3" fill="#8ad8d0" stroke="none" stroke-width="0.8" /><polygon points="418.7,353.9 424.0,350.6 424.0,356.2 418.7,359.4" fill="#8ad8d0" stroke="none" stroke-width="0.8" /><polygon points="426.5,307.7 431.8,304.2 431.8,309.8 426.5,313.4" fill="#0c1a18" stroke="none" stroke-width="0.8" /><polygon points="426.5,316.0 431.8,312.5 431.8,318.1 426.5,321.6" fill="#1a3a36" stroke="none" stroke-width="0.8" /><polygon points="426.5,324.3 431.8,320.8 431.8,326.5 426.5,329.9" fill="#1a3a36" stroke="none" stroke-width="0.8" /><polygon points="426.5,332.5 431.8,329.1 431.8,334.8 426.5,338.1" fill="#6ac0b8" stroke="none" stroke-width="0.8" /><polygon points="426.5,340.8 431.8,337.5 431.8,343.1 426.5,346.4" fill="#6ac0b8" stroke="none" stroke-width="0.8" /><polygon points="426.5,349.0 431.8,345.8 431.8,351.4 426.5,354.7" fill="#8ad8d0" stroke="none" stroke-width="0.8" /><polygon points="341.0,325.1 346.1,327.7 346.1,333.6 341.0,331.0" fill="#8ad8d0" stroke="none" stroke-width="0" opacity="0.8"/><polygon points="341.6,326.3 345.5,328.9 345.5,331.8 341.6,329.2" fill="#1a3a36" stroke="none" stroke-width="0.8" /><polygon points="346.1,327.7 351.2,330.3 351.2,336.2 346.1,333.6" fill="#9ae0d8" stroke="none" stroke-width="0" opacity="0.8"/><polygon points="346.7,328.9 350.6,331.5 350.6,334.4 346.7,331.8" fill="#d0f6f2" stroke="none" stroke-width="0.8" /><polygon points="351.2,328.1 356.2,330.7 356.2,338.8 351.2,336.2" fill="#8ad8d0" stroke="none" stroke-width="0" opacity="0.8"/><polygon points="356.2,330.7 361.3,333.3 361.3,341.3 356.2,338.8" fill="#7ad0c8" stroke="none" stroke-width="0" opacity="0.8"/><polygon points="361.3,335.5 366.4,338.1 366.4,343.9 361.3,341.3" fill="#7ad0c8" stroke="none" stroke-width="0" opacity="0.8"/><polygon points="361.9,336.7 365.8,339.2 365.8,342.2 361.9,339.6" fill="#d0f6f2" stroke="none" stroke-width="0.8" /><polygon points="366.4,338.1 371.5,340.6 371.5,346.5 366.4,343.9" fill="#2a6a64" stroke="none" stroke-width="0" opacity="0.8"/><polygon points="371.5,338.4 376.6,341.0 376.6,349.1 371.5,346.5" fill="#8ad8d0" stroke="none" stroke-width="0" opacity="0.8"/><polygon points="376.6,341.0 381.7,343.6 381.7,351.7 376.6,349.1" fill="#b8eee8" stroke="none" stroke-width="0" opacity="0.8"/><polygon points="377.2,342.6 381.1,345.2 381.1,349.2 377.2,346.7" fill="#d0f6f2" stroke="none" stroke-width="0.8" /><polygon points="381.7,343.6 386.8,346.2 386.8,354.2 381.7,351.7" fill="#9ae0d8" stroke="none" stroke-width="0" opacity="0.8"/><polygon points="386.8,348.4 391.8,351.0 391.8,356.8 386.8,354.2" fill="#4aa098" stroke="none" stroke-width="0" opacity="0.8"/><polygon points="387.4,349.6 391.2,352.2 391.2,355.1 387.4,352.5" fill="#1a3a36" stroke="none" stroke-width="0.8" /><polygon points="391.8,351.0 396.9,353.6 396.9,359.4 391.8,356.8" fill="#7ad0c8" stroke="none" stroke-width="0" opacity="0.8"/><polygon points="396.9,352.3 402.0,354.9 402.0,362.0 396.9,359.4" fill="#4aa098" stroke="none" stroke-width="0" opacity="0.8"/><line x1="341.0" y1="326.7" x2="402.0" y2="357.7" stroke="#000" stroke-width="0.68" /><line x1="341.0" y1="322.3" x2="402.0" y2="353.3" stroke="#000" stroke-width="0.68" /><line x1="341.0" y1="318.0" x2="402.0" y2="349.0" stroke="#000" stroke-width="0.85" /><line x1="341.0" y1="331.0" x2="341.0" y2="318.0" stroke="#000" stroke-width="0.68" /><line x1="346.1" y1="333.6" x2="346.1" y2="320.6" stroke="#000" stroke-width="0.68" /><line x1="351.2" y1="336.2" x2="351.2" y2="323.2" stroke="#000" stroke-width="0.68" /><line x1="356.2" y1="338.8" x2="356.2" y2="325.8" stroke="#000" stroke-width="0.68" /><line x1="361.3" y1="341.3" x2="361.3" y2="328.3" stroke="#000" stroke-width="0.68" /><line x1="366.4" y1="343.9" x2="366.4" y2="330.9" stroke="#000" stroke-width="0.68" /><line x1="371.5" y1="346.5" x2="371.5" y2="333.5" stroke="#000" stroke-width="0.68" /><line x1="376.6" y1="349.1" x2="376.6" y2="336.1" stroke="#000" stroke-width="0.68" /><line x1="381.7" y1="351.7" x2="381.7" y2="338.7" stroke="#000" stroke-width="0.68" /><line x1="386.8" y1="354.2" x2="386.8" y2="341.2" stroke="#000" stroke-width="0.68" /><line x1="391.8" y1="356.8" x2="391.8" y2="343.8" stroke="#000" stroke-width="0.68" /><line x1="396.9" y1="359.4" x2="396.9" y2="346.4" stroke="#000" stroke-width="0.68" /><line x1="402.0" y1="362.0" x2="402.0" y2="349.0" stroke="#000" stroke-width="0.68" /><line x1="341.0" y1="331.0" x2="341.0" y2="318.0" stroke="#000" stroke-width="0.9" /><polygon points="399.0,319.0 407.0,323.0 407.0,332.0 399.0,328.0" fill="#6a1aa8" stroke="none" stroke-width="0.8" /><polygon points="425.0,303.0 436.0,306.0 437.5,308.9 426.5,305.9" fill="#1a2a28" stroke="#000" stroke-width="0.4" /><polygon points="427.1,307.2 438.1,310.2 439.6,313.1 428.6,310.1" fill="#1a2a28" stroke="#000" stroke-width="0.4" /><polygon points="429.2,311.4 440.2,314.4 441.7,317.3 430.7,314.3" fill="#1a2a28" stroke="#000" stroke-width="0.4" /><polygon points="431.3,315.6 442.3,318.6 443.8,321.5 432.8,318.5" fill="#6a1a9a" stroke="#000" stroke-width="0.4" /><polygon points="433.4,319.8 444.4,322.8 445.9,325.7 434.9,322.7" fill="#6a1a9a" stroke="#000" stroke-width="0.4" /><polygon points="435.5,324.0 446.5,327.0 448.0,329.9 437.0,326.9" fill="#6a1a9a" stroke="#000" stroke-width="0.4" /><polygon points="437.6,328.2 448.6,331.2 450.1,334.1 439.1,331.1" fill="#6a1a9a" stroke="#000" stroke-width="0.4" /><polygon points="439.7,332.4 450.7,335.4 452.2,338.3 441.2,335.3" fill="#6a1a9a" stroke="#000" stroke-width="0.4" /><polygon points="441.8,336.6 452.8,339.6 454.3,342.5 443.3,339.5" fill="#6a1a9a" stroke="#000" stroke-width="0.4" /><polygon points="443.9,340.8 454.9,343.8 456.4,346.7 445.4,343.7" fill="#6a1a9a" stroke="#000" stroke-width="0.4" /><line x1="425.0" y1="303.0" x2="446.0" y2="345.0" stroke="#000" stroke-width="1.0" /><line x1="436.0" y1="306.0" x2="457.0" y2="348.0" stroke="#000" stroke-width="1.0" /><polyline points="404.0,270.0 422.0,281.0 440.0,298.0 453.0,314.0 462.0,328.0 467.0,338.0" fill="none" stroke="#000" stroke-width="0.9" /><polyline points="405.0,276.0 423.0,287.0 441.0,305.0 454.0,321.0 462.0,334.0" fill="none" stroke="#000" stroke-width="0.8" /><polyline points="420.0,290.0 436.0,302.0 449.0,318.0 458.0,333.0" fill="none" stroke="#000" stroke-width="0.7" /><polyline points="432.0,297.0 446.0,311.0 456.0,326.0 462.0,340.0" fill="none" stroke="#000" stroke-width="0.7" /><polygon points="446.0,345.0 457.0,348.0 466.0,356.0 452.0,354.0" fill="#5a1a8a" stroke="#000" stroke-width="0.5" /><polygon points="333.0,327.0 348.0,324.0 352.0,331.0 337.0,334.0" fill="#b8ece8" stroke="#000" stroke-width="0.5" /><line x1="321.0" y1="332.5" x2="366.0" y2="307.5" stroke="#000" stroke-width="0.8" /><line x1="321.0" y1="329.0" x2="366.0" y2="304.0" stroke="#000" stroke-width="0.8" /><line x1="321.0" y1="325.5" x2="366.0" y2="300.5" stroke="#000" stroke-width="0.8" /><line x1="321.0" y1="322.0" x2="366.0" y2="297.0" stroke="#000" stroke-width="1.0" /><line x1="321.0" y1="336.0" x2="321.0" y2="322.0" stroke="#000" stroke-width="0.8" /><line x1="336.0" y1="327.7" x2="336.0" y2="313.7" stroke="#000" stroke-width="0.8" /><line x1="351.0" y1="319.3" x2="351.0" y2="305.3" stroke="#000" stroke-width="0.8" /><line x1="366.0" y1="311.0" x2="366.0" y2="297.0" stroke="#000" stroke-width="0.8" /><polygon points="321.0,328.3 325.9,330.9 325.9,338.6 321.0,336.0" fill="#2a6a64" stroke="none" stroke-width="0" opacity="0.8"/><polygon points="325.9,330.9 330.9,333.5 330.9,341.2 325.9,338.6" fill="#8ad8d0" stroke="none" stroke-width="0" opacity="0.8"/><polygon points="330.9,333.5 335.9,336.1 335.9,343.8 330.9,341.2" fill="#4aa098" stroke="none" stroke-width="0" opacity="0.8"/><polygon points="335.9,337.5 340.8,340.1 340.8,346.4 335.9,343.8" fill="#2a6a64" stroke="none" stroke-width="0" opacity="0.8"/><polygon points="340.8,337.7 345.8,340.3 345.8,349.0 340.8,346.4" fill="#4aa098" stroke="none" stroke-width="0" opacity="0.8"/><polygon points="345.8,340.3 350.7,342.9 350.7,351.6 345.8,349.0" fill="#8ad8d0" stroke="none" stroke-width="0" opacity="0.8"/><polygon points="350.7,343.9 355.6,346.5 355.6,354.2 350.7,351.6" fill="#7ad0c8" stroke="none" stroke-width="0" opacity="0.8"/><polygon points="351.3,345.4 355.0,348.0 355.0,351.9 351.3,349.3" fill="#d0f6f2" stroke="none" stroke-width="0.8" /><polygon points="355.6,345.5 360.6,348.1 360.6,356.8 355.6,354.2" fill="#7ad0c8" stroke="none" stroke-width="0" opacity="0.8"/><polygon points="360.6,350.5 365.6,353.1 365.6,359.4 360.6,356.8" fill="#8ad8d0" stroke="none" stroke-width="0" opacity="0.8"/><polygon points="361.2,351.8 364.9,354.4 364.9,357.5 361.2,354.9" fill="#1a3a36" stroke="none" stroke-width="0.8" /><polygon points="365.6,353.1 370.5,355.7 370.5,362.0 365.6,359.4" fill="#7ad0c8" stroke="none" stroke-width="0" opacity="0.8"/><polygon points="366.2,354.4 369.9,357.0 369.9,360.1 366.2,357.5" fill="#1a3a36" stroke="none" stroke-width="0.8" /><polygon points="370.5,355.7 375.4,358.3 375.4,364.6 370.5,362.0" fill="#7ad0c8" stroke="none" stroke-width="0" opacity="0.8"/><polygon points="371.1,357.0 374.8,359.6 374.8,362.7 371.1,360.1" fill="#d0f6f2" stroke="none" stroke-width="0.8" /><polygon points="375.4,356.9 380.4,359.5 380.4,367.2 375.4,364.6" fill="#b8eee8" stroke="none" stroke-width="0" opacity="0.8"/><polygon points="376.1,358.4 379.8,361.0 379.8,364.9 376.1,362.3" fill="#d0f6f2" stroke="none" stroke-width="0.8" /><polygon points="380.4,360.9 385.4,363.5 385.4,369.8 380.4,367.2" fill="#2a6a64" stroke="none" stroke-width="0" opacity="0.8"/><polygon points="385.4,361.1 390.3,363.7 390.3,372.4 385.4,369.8" fill="#9ae0d8" stroke="none" stroke-width="0" opacity="0.8"/><polygon points="390.3,364.7 395.2,367.3 395.2,375.0 390.3,372.4" fill="#b8eee8" stroke="none" stroke-width="0" opacity="0.8"/><polygon points="390.9,366.2 394.6,368.8 394.6,372.7 390.9,370.1" fill="#1a3a36" stroke="none" stroke-width="0.8" /><polygon points="395.2,367.3 400.2,369.9 400.2,377.6 395.2,375.0" fill="#7ad0c8" stroke="none" stroke-width="0" opacity="0.8"/><polygon points="400.2,368.9 405.1,371.5 405.1,380.2 400.2,377.6" fill="#b8eee8" stroke="none" stroke-width="0" opacity="0.8"/><polygon points="405.1,373.9 410.1,376.5 410.1,382.8 405.1,380.2" fill="#7ad0c8" stroke="none" stroke-width="0" opacity="0.8"/><polygon points="410.1,375.1 415.1,377.7 415.1,385.4 410.1,382.8" fill="#2a6a64" stroke="none" stroke-width="0" opacity="0.8"/><polygon points="410.7,376.6 414.4,379.2 414.4,383.1 410.7,380.5" fill="#1a3a36" stroke="none" stroke-width="0.8" /><polygon points="415.1,379.1 420.0,381.7 420.0,388.0 415.1,385.4" fill="#b8eee8" stroke="none" stroke-width="0" opacity="0.8"/><line x1="321.0" y1="332.5" x2="420.0" y2="384.5" stroke="#000" stroke-width="0.68" /><line x1="321.0" y1="329.0" x2="420.0" y2="381.0" stroke="#000" stroke-width="0.68" /><line x1="321.0" y1="325.5" x2="420.0" y2="377.5" stroke="#000" stroke-width="0.68" /><line x1="321.0" y1="322.0" x2="420.0" y2="374.0" stroke="#000" stroke-width="0.85" /><line x1="321.0" y1="336.0" x2="321.0" y2="322.0" stroke="#000" stroke-width="0.68" /><line x1="325.9" y1="338.6" x2="325.9" y2="324.6" stroke="#000" stroke-width="0.68" /><line x1="330.9" y1="341.2" x2="330.9" y2="327.2" stroke="#000" stroke-width="0.68" /><line x1="335.9" y1="343.8" x2="335.9" y2="329.8" stroke="#000" stroke-width="0.68" /><line x1="340.8" y1="346.4" x2="340.8" y2="332.4" stroke="#000" stroke-width="0.68" /><line x1="345.8" y1="349.0" x2="345.8" y2="335.0" stroke="#000" stroke-width="0.68" /><line x1="350.7" y1="351.6" x2="350.7" y2="337.6" stroke="#000" stroke-width="0.68" /><line x1="355.6" y1="354.2" x2="355.6" y2="340.2" stroke="#000" stroke-width="0.68" /><line x1="360.6" y1="356.8" x2="360.6" y2="342.8" stroke="#000" stroke-width="0.68" /><line x1="365.6" y1="359.4" x2="365.6" y2="345.4" stroke="#000" stroke-width="0.68" /><line x1="370.5" y1="362.0" x2="370.5" y2="348.0" stroke="#000" stroke-width="0.68" /><line x1="375.4" y1="364.6" x2="375.4" y2="350.6" stroke="#000" stroke-width="0.68" /><line x1="380.4" y1="367.2" x2="380.4" y2="353.2" stroke="#000" stroke-width="0.68" /><line x1="385.4" y1="369.8" x2="385.4" y2="355.8" stroke="#000" stroke-width="0.68" /><line x1="390.3" y1="372.4" x2="390.3" y2="358.4" stroke="#000" stroke-width="0.68" /><line x1="395.2" y1="375.0" x2="395.2" y2="361.0" stroke="#000" stroke-width="0.68" /><line x1="400.2" y1="377.6" x2="400.2" y2="363.6" stroke="#000" stroke-width="0.68" /><line x1="405.1" y1="380.2" x2="405.1" y2="366.2" stroke="#000" stroke-width="0.68" /><line x1="410.1" y1="382.8" x2="410.1" y2="368.8" stroke="#000" stroke-width="0.68" /><line x1="415.1" y1="385.4" x2="415.1" y2="371.4" stroke="#000" stroke-width="0.68" /><line x1="420.0" y1="388.0" x2="420.0" y2="374.0" stroke="#000" stroke-width="0.68" /><polygon points="420.0,381.7 425.2,379.6 425.2,385.9 420.0,388.0" fill="#4aa098" stroke="none" stroke-width="0" opacity="0.8"/><polygon points="425.2,379.6 430.4,377.5 430.4,383.8 425.2,385.9" fill="#4aa098" stroke="none" stroke-width="0" opacity="0.8"/><polygon points="425.8,380.8 429.8,378.7 429.8,381.9 425.8,384.0" fill="#d0f6f2" stroke="none" stroke-width="0.8" /><polygon points="430.4,376.1 435.7,374.0 435.7,381.7 430.4,383.8" fill="#9ae0d8" stroke="none" stroke-width="0" opacity="0.8"/><polygon points="435.7,374.0 440.9,371.9 440.9,379.6 435.7,381.7" fill="#b8eee8" stroke="none" stroke-width="0" opacity="0.8"/><polygon points="440.9,373.3 446.1,371.1 446.1,377.4 440.9,379.6" fill="#2a6a64" stroke="none" stroke-width="0" opacity="0.8"/><polygon points="446.1,369.7 451.3,367.6 451.3,375.3 446.1,377.4" fill="#b8eee8" stroke="none" stroke-width="0" opacity="0.8"/><polygon points="446.7,371.3 450.7,369.2 450.7,373.0 446.7,375.1" fill="#1a3a36" stroke="none" stroke-width="0.8" /><polygon points="451.3,367.6 456.6,365.5 456.6,373.2 451.3,375.3" fill="#9ae0d8" stroke="none" stroke-width="0" opacity="0.8"/><polygon points="451.9,369.2 456.0,367.1 456.0,370.9 451.9,373.0" fill="#1a3a36" stroke="none" stroke-width="0.8" /><polygon points="456.6,366.9 461.8,364.8 461.8,371.1 456.6,373.2" fill="#8ad8d0" stroke="none" stroke-width="0" opacity="0.8"/><polygon points="461.8,363.4 467.0,361.3 467.0,369.0 461.8,371.1" fill="#9ae0d8" stroke="none" stroke-width="0" opacity="0.8"/><line x1="420.0" y1="384.5" x2="467.0" y2="365.5" stroke="#000" stroke-width="0.68" /><line x1="420.0" y1="381.0" x2="467.0" y2="362.0" stroke="#000" stroke-width="0.68" /><line x1="420.0" y1="377.5" x2="467.0" y2="358.5" stroke="#000" stroke-width="0.68" /><line x1="420.0" y1="374.0" x2="467.0" y2="355.0" stroke="#000" stroke-width="0.85" /><line x1="420.0" y1="388.0" x2="420.0" y2="374.0" stroke="#000" stroke-width="0.68" /><line x1="425.2" y1="385.9" x2="425.2" y2="371.9" stroke="#000" stroke-width="0.68" /><line x1="430.4" y1="383.8" x2="430.4" y2="369.8" stroke="#000" stroke-width="0.68" /><line x1="435.7" y1="381.7" x2="435.7" y2="367.7" stroke="#000" stroke-width="0.68" /><line x1="440.9" y1="379.6" x2="440.9" y2="365.6" stroke="#000" stroke-width="0.68" /><line x1="446.1" y1="377.4" x2="446.1" y2="363.4" stroke="#000" stroke-width="0.68" /><line x1="451.3" y1="375.3" x2="451.3" y2="361.3" stroke="#000" stroke-width="0.68" /><line x1="456.6" y1="373.2" x2="456.6" y2="359.2" stroke="#000" stroke-width="0.68" /><line x1="461.8" y1="371.1" x2="461.8" y2="357.1" stroke="#000" stroke-width="0.68" /><line x1="467.0" y1="369.0" x2="467.0" y2="355.0" stroke="#000" stroke-width="0.68" /><polygon points="350.0,295.0 402.0,321.0 433.0,300.0 383.0,276.0" fill="#0f2a28" stroke="#000" stroke-width="0.8" /><polygon points="352.2,295.0 357.3,297.5 361.7,294.9 356.7,292.4" fill="#6abcb4" stroke="none" stroke-width="0.8" /><polygon points="358.8,291.2 363.8,293.7 368.3,291.0 363.3,288.6" fill="#6abcb4" stroke="none" stroke-width="0.8" /><polygon points="365.4,287.4 370.4,289.8 374.8,287.2 369.9,284.8" fill="#b0e8e2" stroke="none" stroke-width="0.8" /><polygon points="372.0,283.6 376.9,286.0 381.4,283.3 376.5,281.0" fill="#b0e8e2" stroke="none" stroke-width="0.8" /><polygon points="378.6,279.7 383.5,282.1 388.0,279.5 383.1,277.2" fill="#b0e8e2" stroke="none" stroke-width="0.8" /><polygon points="359.7,298.7 364.7,301.2 369.1,298.6 364.1,296.1" fill="#b0e8e2" stroke="none" stroke-width="0.8" /><polygon points="366.2,294.8 371.2,297.3 375.6,294.6 370.6,292.2" fill="#b0e8e2" stroke="none" stroke-width="0.8" /><polygon points="372.7,291.0 377.7,293.4 382.1,290.7 377.2,288.3" fill="#b0e8e2" stroke="none" stroke-width="0.8" /><polygon points="379.3,287.1 384.2,289.5 388.6,286.8 383.7,284.5" fill="#8ad4cc" stroke="none" stroke-width="0.8" /><polygon points="385.8,283.2 390.7,285.6 395.1,282.9 390.2,280.6" fill="#3a8a84" stroke="none" stroke-width="0.8" /><polygon points="367.1,302.4 372.1,304.9 376.5,302.2 371.5,299.7" fill="#b0e8e2" stroke="none" stroke-width="0.8" /><polygon points="373.6,298.5 378.6,301.0 382.9,298.3 378.0,295.8" fill="#6abcb4" stroke="none" stroke-width="0.8" /><polygon points="380.0,294.5 385.0,297.0 389.4,294.3 384.4,291.9" fill="#8ad4cc" stroke="none" stroke-width="0.8" /><polygon points="386.5,290.6 391.4,293.0 395.8,290.3 390.9,288.0" fill="#c8f2ee" stroke="none" stroke-width="0.8" /><polygon points="393.0,286.7 397.9,289.1 402.3,286.4 397.4,284.0" fill="#b0e8e2" stroke="none" stroke-width="0.8" /><polygon points="374.5,306.1 379.5,308.6 383.9,305.9 378.9,303.4" fill="#3a8a84" stroke="none" stroke-width="0.8" /><polygon points="380.9,302.1 385.9,304.6 390.3,301.9 385.3,299.4" fill="#8ad4cc" stroke="none" stroke-width="0.8" /><polygon points="387.3,298.1 392.3,300.6 396.6,297.8 391.7,295.4" fill="#6abcb4" stroke="none" stroke-width="0.8" /><polygon points="393.8,294.2 398.7,296.6 403.0,293.8 398.1,291.5" fill="#b0e8e2" stroke="none" stroke-width="0.8" /><polygon points="400.2,290.2 405.1,292.5 409.4,289.8 404.5,287.5" fill="#8ad4cc" stroke="none" stroke-width="0.8" /><polygon points="381.9,309.8 387.0,312.3 391.3,309.6 386.2,307.1" fill="#6abcb4" stroke="none" stroke-width="0.8" /><polygon points="388.3,305.8 393.3,308.2 397.6,305.5 392.6,303.0" fill="#c8f2ee" stroke="none" stroke-width="0.8" /><polygon points="394.6,301.7 399.6,304.2 403.9,301.4 399.0,299.0" fill="#c8f2ee" stroke="none" stroke-width="0.8" /><polygon points="401.0,297.7 405.9,300.1 410.2,297.3 405.3,294.9" fill="#b0e8e2" stroke="none" stroke-width="0.8" /><polygon points="407.4,293.7 412.3,296.0 416.6,293.2 411.7,290.9" fill="#6abcb4" stroke="none" stroke-width="0.8" /><polygon points="389.3,313.5 394.4,316.0 398.6,313.2 393.6,310.7" fill="#6abcb4" stroke="none" stroke-width="0.8" /><polygon points="395.6,309.4 400.7,311.9 404.9,309.1 399.9,306.6" fill="#b0e8e2" stroke="none" stroke-width="0.8" /><polygon points="402.0,305.3 406.9,307.8 411.2,305.0 406.2,302.5" fill="#c8f2ee" stroke="none" stroke-width="0.8" /><polygon points="408.3,301.2 413.2,303.6 417.4,300.8 412.5,298.4" fill="#3a8a84" stroke="none" stroke-width="0.8" /><polygon points="414.6,297.1 419.5,299.5 423.7,296.7 418.8,294.3" fill="#3a8a84" stroke="none" stroke-width="0.8" /><polygon points="396.8,317.2 401.8,319.7 406.0,316.9 401.0,314.4" fill="#c8f2ee" stroke="none" stroke-width="0.8" /><polygon points="403.0,313.1 408.0,315.5 412.2,312.7 407.3,310.2" fill="#6abcb4" stroke="none" stroke-width="0.8" /><polygon points="409.3,308.9 414.2,311.4 418.4,308.5 413.5,306.1" fill="#c8f2ee" stroke="none" stroke-width="0.8" /><polygon points="415.5,304.8 420.4,307.2 424.7,304.3 419.8,301.9" fill="#6abcb4" stroke="none" stroke-width="0.8" /><polygon points="421.8,300.6 426.6,303.0 430.9,300.1 426.0,297.8" fill="#8ad4cc" stroke="none" stroke-width="0.8" /><polygon points="350.0,295.0 402.0,321.0 402.0,323.0 350.0,297.0" fill="#0a0a0a" stroke="none" stroke-width="0.8" /><polygon points="402.0,321.0 433.0,300.0 433.0,302.0 402.0,323.0" fill="#0a0a0a" stroke="none" stroke-width="0.8" /><line x1="350.0" y1="290.3" x2="383.0" y2="271.3" stroke="#000" stroke-width="0.68" /><line x1="350.0" y1="285.7" x2="383.0" y2="266.7" stroke="#000" stroke-width="0.68" /><line x1="350.0" y1="281.0" x2="383.0" y2="262.0" stroke="#000" stroke-width="0.85" /><line x1="350.0" y1="295.0" x2="350.0" y2="281.0" stroke="#000" stroke-width="0.68" /><line x1="358.2" y1="290.2" x2="358.2" y2="276.2" stroke="#000" stroke-width="0.68" /><line x1="366.5" y1="285.5" x2="366.5" y2="271.5" stroke="#000" stroke-width="0.68" /><line x1="374.8" y1="280.8" x2="374.8" y2="266.8" stroke="#000" stroke-width="0.68" /><line x1="383.0" y1="276.0" x2="383.0" y2="262.0" stroke="#000" stroke-width="0.68" /><line x1="383.0" y1="271.3" x2="433.0" y2="295.3" stroke="#000" stroke-width="0.68" /><line x1="383.0" y1="266.7" x2="433.0" y2="290.7" stroke="#000" stroke-width="0.68" /><line x1="383.0" y1="262.0" x2="433.0" y2="286.0" stroke="#000" stroke-width="0.85" /><line x1="383.0" y1="276.0" x2="383.0" y2="262.0" stroke="#000" stroke-width="0.68" /><line x1="395.5" y1="282.0" x2="395.5" y2="268.0" stroke="#000" stroke-width="0.68" /><line x1="408.0" y1="288.0" x2="408.0" y2="274.0" stroke="#000" stroke-width="0.68" /><line x1="420.5" y1="294.0" x2="420.5" y2="280.0" stroke="#000" stroke-width="0.68" /><line x1="433.0" y1="300.0" x2="433.0" y2="286.0" stroke="#000" stroke-width="0.68" /><path d="M385 283 Q410 290 416 306 L419 365" fill="none" stroke="#0a2a0a" stroke-width="6.5"/><path d="M385 283 Q410 290 416 306 L419 365" fill="none" stroke="#177a22" stroke-width="4.6"/><path d="M386 282 Q408 288 414 303 L417 360" fill="none" stroke="#2eaa36" stroke-width="1.2"/><path d="M359 302 Q360 287 373 279" fill="none" stroke="#0a2a0a" stroke-width="5.5"/><path d="M359 302 Q360 287 373 279" fill="none" stroke="#1a9a2a" stroke-width="3.8"/><polygon points="350.0,287.3 355.2,289.9 355.2,297.6 350.0,295.0" fill="#9ae0d8" stroke="none" stroke-width="0" opacity="0.8"/><polygon points="355.2,291.3 360.4,293.9 360.4,300.2 355.2,297.6" fill="#9ae0d8" stroke="none" stroke-width="0" opacity="0.8"/><polygon points="360.4,293.9 365.6,296.5 365.6,302.8 360.4,300.2" fill="#2a6a64" stroke="none" stroke-width="0" opacity="0.8"/><polygon points="365.6,294.1 370.8,296.7 370.8,305.4 365.6,302.8" fill="#4aa098" stroke="none" stroke-width="0" opacity="0.8"/><polygon points="370.8,299.1 376.0,301.7 376.0,308.0 370.8,305.4" fill="#9ae0d8" stroke="none" stroke-width="0" opacity="0.8"/><polygon points="371.4,300.4 375.4,303.0 375.4,306.1 371.4,303.5" fill="#d0f6f2" stroke="none" stroke-width="0.8" /><polygon points="376.0,301.7 381.2,304.3 381.2,310.6 376.0,308.0" fill="#4aa098" stroke="none" stroke-width="0" opacity="0.8"/><polygon points="376.6,303.0 380.6,305.6 380.6,308.7 376.6,306.1" fill="#1a3a36" stroke="none" stroke-width="0.8" /><polygon points="381.2,304.3 386.4,306.9 386.4,313.2 381.2,310.6" fill="#b8eee8" stroke="none" stroke-width="0" opacity="0.8"/><polygon points="386.4,304.5 391.6,307.1 391.6,315.8 386.4,313.2" fill="#2a6a64" stroke="none" stroke-width="0" opacity="0.8"/><polygon points="387.0,306.3 391.0,308.9 391.0,313.2 387.0,310.6" fill="#d0f6f2" stroke="none" stroke-width="0.8" /><polygon points="391.6,308.1 396.8,310.7 396.8,318.4 391.6,315.8" fill="#b8eee8" stroke="none" stroke-width="0" opacity="0.8"/><polygon points="392.2,309.6 396.2,312.2 396.2,316.1 392.2,313.5" fill="#1a3a36" stroke="none" stroke-width="0.8" /><polygon points="396.8,312.1 402.0,314.7 402.0,321.0 396.8,318.4" fill="#2a6a64" stroke="none" stroke-width="0" opacity="0.8"/><line x1="350.0" y1="290.3" x2="402.0" y2="316.3" stroke="#000" stroke-width="0.68" /><line x1="350.0" y1="285.7" x2="402.0" y2="311.7" stroke="#000" stroke-width="0.68" /><line x1="350.0" y1="281.0" x2="402.0" y2="307.0" stroke="#000" stroke-width="0.85" /><line x1="350.0" y1="295.0" x2="350.0" y2="281.0" stroke="#000" stroke-width="0.68" /><line x1="355.2" y1="297.6" x2="355.2" y2="283.6" stroke="#000" stroke-width="0.68" /><line x1="360.4" y1="300.2" x2="360.4" y2="286.2" stroke="#000" stroke-width="0.68" /><line x1="365.6" y1="302.8" x2="365.6" y2="288.8" stroke="#000" stroke-width="0.68" /><line x1="370.8" y1="305.4" x2="370.8" y2="291.4" stroke="#000" stroke-width="0.68" /><line x1="376.0" y1="308.0" x2="376.0" y2="294.0" stroke="#000" stroke-width="0.68" /><line x1="381.2" y1="310.6" x2="381.2" y2="296.6" stroke="#000" stroke-width="0.68" /><line x1="386.4" y1="313.2" x2="386.4" y2="299.2" stroke="#000" stroke-width="0.68" /><line x1="391.6" y1="315.8" x2="391.6" y2="301.8" stroke="#000" stroke-width="0.68" /><line x1="396.8" y1="318.4" x2="396.8" y2="304.4" stroke="#000" stroke-width="0.68" /><line x1="402.0" y1="321.0" x2="402.0" y2="307.0" stroke="#000" stroke-width="0.68" /><polygon points="402.0,312.3 407.2,308.8 407.2,317.5 402.0,321.0" fill="#b8eee8" stroke="none" stroke-width="0" opacity="0.8"/><polygon points="407.2,311.2 412.3,307.7 412.3,314.0 407.2,317.5" fill="#7ad0c8" stroke="none" stroke-width="0" opacity="0.8"/><polygon points="407.8,312.5 411.7,309.0 411.7,312.1 407.8,315.6" fill="#d0f6f2" stroke="none" stroke-width="0.8" /><polygon points="412.3,306.3 417.5,302.8 417.5,310.5 412.3,314.0" fill="#9ae0d8" stroke="none" stroke-width="0" opacity="0.8"/><polygon points="412.9,307.8 416.9,304.3 416.9,308.2 412.9,311.7" fill="#1a3a36" stroke="none" stroke-width="0.8" /><polygon points="417.5,301.8 422.7,298.3 422.7,307.0 417.5,310.5" fill="#7ad0c8" stroke="none" stroke-width="0" opacity="0.8"/><polygon points="422.7,300.7 427.8,297.2 427.8,303.5 422.7,307.0" fill="#9ae0d8" stroke="none" stroke-width="0" opacity="0.8"/><polygon points="427.8,294.8 433.0,291.3 433.0,300.0 427.8,303.5" fill="#2a6a64" stroke="none" stroke-width="0" opacity="0.8"/><line x1="402.0" y1="316.3" x2="433.0" y2="295.3" stroke="#000" stroke-width="0.68" /><line x1="402.0" y1="311.7" x2="433.0" y2="290.7" stroke="#000" stroke-width="0.68" /><line x1="402.0" y1="307.0" x2="433.0" y2="286.0" stroke="#000" stroke-width="0.85" /><line x1="402.0" y1="321.0" x2="402.0" y2="307.0" stroke="#000" stroke-width="0.68" /><line x1="407.2" y1="317.5" x2="407.2" y2="303.5" stroke="#000" stroke-width="0.68" /><line x1="412.3" y1="314.0" x2="412.3" y2="300.0" stroke="#000" stroke-width="0.68" /><line x1="417.5" y1="310.5" x2="417.5" y2="296.5" stroke="#000" stroke-width="0.68" /><line x1="422.7" y1="307.0" x2="422.7" y2="293.0" stroke="#000" stroke-width="0.68" /><line x1="427.8" y1="303.5" x2="427.8" y2="289.5" stroke="#000" stroke-width="0.68" /><line x1="433.0" y1="300.0" x2="433.0" y2="286.0" stroke="#000" stroke-width="0.68" /><polygon points="364.0,266.5 395.0,271.0 418.0,274.0 386.0,256.0" fill="#0f2a28" stroke="#000" stroke-width="0.8" /><polygon points="365.9,266.2 370.1,266.9 373.9,265.5 369.6,264.5" fill="#8ad4cc" stroke="none" stroke-width="0.8" /><polygon points="371.4,263.7 375.6,264.9 379.4,263.5 375.1,262.0" fill="#3a8a84" stroke="none" stroke-width="0.8" /><polygon points="376.9,261.2 381.2,262.8 384.9,261.4 380.6,259.5" fill="#3a8a84" stroke="none" stroke-width="0.8" /><polygon points="382.4,258.7 386.7,260.8 390.5,259.4 386.1,257.0" fill="#b0e8e2" stroke="none" stroke-width="0.8" /><polygon points="372.1,267.2 376.3,267.9 380.1,267.0 375.9,266.0" fill="#6abcb4" stroke="none" stroke-width="0.8" /><polygon points="377.6,265.4 381.9,266.6 385.7,265.6 381.4,264.2" fill="#6abcb4" stroke="none" stroke-width="0.8" /><polygon points="383.2,263.6 387.5,265.2 391.3,264.2 387.0,262.3" fill="#6abcb4" stroke="none" stroke-width="0.8" /><polygon points="388.8,261.7 393.1,263.8 396.9,262.8 392.5,260.5" fill="#8ad4cc" stroke="none" stroke-width="0.8" /><polygon points="378.3,268.3 382.5,268.9 386.3,268.5 382.1,267.5" fill="#c8f2ee" stroke="none" stroke-width="0.8" /><polygon points="383.9,267.1 388.2,268.2 392.0,267.8 387.7,266.3" fill="#6abcb4" stroke="none" stroke-width="0.8" /><polygon points="389.5,265.9 393.8,267.5 397.6,267.0 393.3,265.1" fill="#c8f2ee" stroke="none" stroke-width="0.8" /><polygon points="395.1,264.8 399.4,266.8 403.3,266.3 398.9,264.0" fill="#c8f2ee" stroke="none" stroke-width="0.8" /><polygon points="384.5,269.3 388.7,270.0 392.6,269.9 388.3,268.9" fill="#c8f2ee" stroke="none" stroke-width="0.8" /><polygon points="390.2,268.8 394.4,269.9 398.3,269.9 394.0,268.4" fill="#8ad4cc" stroke="none" stroke-width="0.8" /><polygon points="395.8,268.3 400.1,269.9 404.0,269.9 399.7,267.9" fill="#6abcb4" stroke="none" stroke-width="0.8" /><polygon points="401.5,267.8 405.8,269.9 409.7,269.8 405.3,267.5" fill="#b0e8e2" stroke="none" stroke-width="0.8" /><polygon points="390.7,270.3 394.9,271.0 398.8,271.4 394.6,270.4" fill="#6abcb4" stroke="none" stroke-width="0.8" /><polygon points="396.4,270.5 400.7,271.6 404.6,272.0 400.3,270.6" fill="#6abcb4" stroke="none" stroke-width="0.8" /><polygon points="402.1,270.6 406.4,272.2 410.3,272.7 406.0,270.8" fill="#6abcb4" stroke="none" stroke-width="0.8" /><polygon points="407.8,270.8 412.2,272.9 416.1,273.3 411.7,270.9" fill="#6abcb4" stroke="none" stroke-width="0.8" /><polygon points="364.0,266.5 395.0,271.0 395.0,273.5 364.0,269.0" fill="#0a0a0a" stroke="none" stroke-width="0.8" /><polygon points="395.0,271.0 418.0,274.0 418.0,276.5 395.0,273.5" fill="#0a0a0a" stroke="none" stroke-width="0.8" /><line x1="364.0" y1="262.8" x2="386.0" y2="252.2" stroke="#000" stroke-width="0.7200000000000001" /><line x1="364.0" y1="259.0" x2="386.0" y2="248.5" stroke="#000" stroke-width="0.7200000000000001" /><line x1="364.0" y1="255.2" x2="386.0" y2="244.8" stroke="#000" stroke-width="0.7200000000000001" /><line x1="364.0" y1="251.5" x2="386.0" y2="241.0" stroke="#000" stroke-width="0.9" /><line x1="364.0" y1="266.5" x2="364.0" y2="251.5" stroke="#000" stroke-width="0.7200000000000001" /><line x1="375.0" y1="261.2" x2="375.0" y2="246.2" stroke="#000" stroke-width="0.7200000000000001" /><line x1="386.0" y1="256.0" x2="386.0" y2="241.0" stroke="#000" stroke-width="0.7200000000000001" /><polyline points="397.0,258.6 411.0,260.3 415.0,268.8" fill="none" stroke="#000" stroke-width="0.9" /><polyline points="397.0,243.6 411.0,245.3 415.0,253.8" fill="none" stroke="#000" stroke-width="0.9" /><polyline points="397.0,248.1 411.0,249.8 415.0,258.3" fill="none" stroke="#000" stroke-width="0.9" /><polyline points="397.0,252.6 411.0,254.3 415.0,262.8" fill="none" stroke="#000" stroke-width="0.9" /><line x1="397.0" y1="258.6" x2="397.0" y2="243.6" stroke="#000" stroke-width="0.8" /><line x1="404.0" y1="259.5" x2="404.0" y2="244.5" stroke="#000" stroke-width="0.8" /><line x1="411.0" y1="260.3" x2="411.0" y2="245.3" stroke="#000" stroke-width="0.8" /><rect x="415" y="254" width="12" height="19" fill="none" stroke="#111" stroke-width="0.9"/><line x1="419.0" y1="254.0" x2="419.0" y2="273.0" stroke="#111" stroke-width="0.8" /><line x1="423.0" y1="254.0" x2="423.0" y2="273.0" stroke="#111" stroke-width="0.8" /><line x1="415.0" y1="259.0" x2="427.0" y2="259.0" stroke="#111" stroke-width="0.8" /><line x1="415.0" y1="264.0" x2="427.0" y2="264.0" stroke="#111" stroke-width="0.8" /><line x1="415.0" y1="269.0" x2="427.0" y2="269.0" stroke="#111" stroke-width="0.8" /><path d="M385.3 238 L396.7 238 L398 250 L399 262 L402 280 L404.5 297 Q404 304 391 305 Q378 304 377.5 297 L380 280 L383 262 L384 250 Z" fill="#1a5450" stroke="#0a2422" stroke-width="0.8"/><path d="M388 240 L386.5 262 L383.5 280 L381.5 297" fill="none" stroke="#2a6e68" stroke-width="1.8"/><path d="M384.8 238.5 A6.2 2 0 0 0 397.2 238.5" fill="none" stroke="#3a1a8a" stroke-width="2.2"/><path d="M384 249.5 A7 2 0 0 0 398 249.5" fill="none" stroke="#0f2a28" stroke-width="1.5"/><path d="M383 262.5 A8 2 0 0 0 399 262.5" fill="none" stroke="#3a1a8a" stroke-width="2.2"/><path d="M380 279.5 A11 2 0 0 0 402 279.5" fill="none" stroke="#3a1a8a" stroke-width="2.2"/><path d="M381 288 L385 286 L387 292 L383 294Z" fill="#8a78d8"/><line x1="363.5" y1="237.0" x2="363.5" y2="267.0" stroke="#111" stroke-width="0.8" /><line x1="363.5" y1="237.0" x2="383.0" y2="238.4" stroke="#111" stroke-width="0.9" stroke-dasharray="2 1.2"/><line x1="383.0" y1="214.0" x2="383.0" y2="238.0" stroke="#0a0a0a" stroke-width="1" /><line x1="347.5" y1="272.0" x2="347.5" y2="325.0" stroke="#000" stroke-width="1.0" /><line x1="347.5" y1="272.0" x2="362.0" y2="264.0" stroke="#000" stroke-width="0.9" /><line x1="327.5" y1="299.5" x2="327.5" y2="349.0" stroke="#000" stroke-width="1.0" /><line x1="327.5" y1="299.5" x2="341.0" y2="306.0" stroke="#000" stroke-width="0.9" /><line x1="329.5" y1="342.0" x2="329.5" y2="376.0" stroke="#000" stroke-width="0.9" /><path d="M387.6 103 Q388 100 391 100 Q394 100 394.6 103 L396.6 122 L397 240 L385 240 L385.6 122 Z" fill="#10561a" stroke="#0a240c" stroke-width="0.8"/><path d="M389.5 104 L388 122 L388 238" stroke="#1c6e22" stroke-width="2.2" fill="none"/><ellipse cx="391" cy="101.5" rx="2.6" ry="1.3" fill="#3a7a7a"/><circle cx="388.5" cy="102" r="0.9" fill="#c01a1a"/><path d="M385.8 121 L396.4 112" stroke="#0c200e" stroke-width="1.2"/><path d="M396.4 113 L397.2 119" stroke="#b07a6a" stroke-width="0.7"/><ellipse cx="386" cy="121" rx="1.1" ry="1.6" fill="#3a1a8a"/><ellipse cx="396.3" cy="113" rx="1" ry="1.4" fill="#4a2a7a"/><path d="M385.8 132 L396.4 123" stroke="#0c200e" stroke-width="1.2"/><path d="M396.4 124 L397.2 130" stroke="#b07a6a" stroke-width="0.7"/><ellipse cx="386" cy="132" rx="1.1" ry="1.6" fill="#3a1a8a"/><ellipse cx="396.3" cy="124" rx="1" ry="1.4" fill="#4a2a7a"/><path d="M385.8 143 L396.4 134" stroke="#0c200e" stroke-width="1.2"/><path d="M396.4 135 L397.2 141" stroke="#b07a6a" stroke-width="0.7"/><ellipse cx="386" cy="143" rx="1.1" ry="1.6" fill="#3a1a8a"/><ellipse cx="396.3" cy="135" rx="1" ry="1.4" fill="#4a2a7a"/><path d="M385.8 154 L396.4 145" stroke="#0c200e" stroke-width="1.2"/><path d="M396.4 146 L397.2 152" stroke="#b07a6a" stroke-width="0.7"/><ellipse cx="386" cy="154" rx="1.1" ry="1.6" fill="#3a1a8a"/><ellipse cx="396.3" cy="146" rx="1" ry="1.4" fill="#4a2a7a"/><path d="M385.8 165 L396.4 156" stroke="#0c200e" stroke-width="1.2"/><path d="M396.4 157 L397.2 163" stroke="#b07a6a" stroke-width="0.7"/><ellipse cx="386" cy="165" rx="1.1" ry="1.6" fill="#3a1a8a"/><ellipse cx="396.3" cy="157" rx="1" ry="1.4" fill="#4a2a7a"/><path d="M385.8 176 L396.4 167" stroke="#0c200e" stroke-width="1.2"/><path d="M396.4 168 L397.2 174" stroke="#b07a6a" stroke-width="0.7"/><ellipse cx="386" cy="176" rx="1.1" ry="1.6" fill="#3a1a8a"/><ellipse cx="396.3" cy="168" rx="1" ry="1.4" fill="#4a2a7a"/><path d="M385.8 187 L396.4 178" stroke="#0c200e" stroke-width="1.2"/><path d="M396.4 179 L397.2 185" stroke="#b07a6a" stroke-width="0.7"/><ellipse cx="386" cy="187" rx="1.1" ry="1.6" fill="#3a1a8a"/><ellipse cx="396.3" cy="179" rx="1" ry="1.4" fill="#4a2a7a"/><path d="M384.8 185.5 A6.2 2 0 0 0 397.2 185.5" fill="none" stroke="#3a1a8a" stroke-width="2"/><path d="M384.8 211.8 A6.2 2 0 0 0 397.2 211.8" fill="none" stroke="#3a1a8a" stroke-width="2"/><path d="M225.6 441 V418" stroke="#5aaa5a" stroke-width="2.4"/><path d="M222.6 421 L225.6 413 L228.6 421Z" fill="#6aba6a"/><path d="M224 444 L207 454" stroke="#4a7ad8" stroke-width="2.6"/><path d="M209.5 450.5 L202.5 457 L211.5 455.5Z" fill="#5a8ae8"/><path d="M227 444 L244 453.5" stroke="#e06a6a" stroke-width="2.6"/><path d="M241.5 450 L249.5 456.5 L240 455.5Z" fill="#e87070"/><path d="M221.8 440 L225.6 438 L229.4 440 V445 L225.6 447 L221.8 445Z" fill="#6a6ae0"/><path d="M221.8 440 L225.6 442 L229.4 440 L225.6 438Z" fill="#8a8af0"/><text x="222.7" y="412" font-family="Liberation Sans" font-size="7" fill="#7ab07a">Y</text><text x="194.5" y="462" font-family="Liberation Sans" font-size="7" fill="#7a9ae0">Z</text><text x="252" y="462" font-family="Liberation Sans" font-size="7" fill="#e07a7a">X</text></svg></div></div><div class="a" style="left:189px;top:482px;width:796px;height:2px;background:#cdd2d7"></div><div class="a" style="left:14px;top:484px;width:971px;height:33px;background:#e1e5e8"></div><div class="a" style="left:16px;top:487px;width:966px;height:16px;background:linear-gradient(#fafbfc,#ffffff);border:1px solid #9da4ab;border-radius:1px"></div><svg style="left:14.5px;top:486px;" width="2" height="30" viewBox="0 0 2 30"><rect x="0" y="0" width="1" height="1" fill="#b0b4b9"/><rect x="0" y="2" width="1" height="1" fill="#b0b4b9"/><rect x="0" y="4" width="1" height="1" fill="#b0b4b9"/><rect x="0" y="6" width="1" height="1" fill="#b0b4b9"/><rect x="0" y="8" width="1" height="1" fill="#b0b4b9"/><rect x="0" y="10" width="1" height="1" fill="#b0b4b9"/><rect x="0" y="12" width="1" height="1" fill="#b0b4b9"/><rect x="0" y="14" width="1" height="1" fill="#b0b4b9"/><rect x="0" y="16" width="1" height="1" fill="#b0b4b9"/><rect x="0" y="18" width="1" height="1" fill="#b0b4b9"/><rect x="0" y="20" width="1" height="1" fill="#b0b4b9"/><rect x="0" y="22" width="1" height="1" fill="#b0b4b9"/><rect x="0" y="24" width="1" height="1" fill="#b0b4b9"/><rect x="0" y="26" width="1" height="1" fill="#b0b4b9"/><rect x="0" y="28" width="1" height="1" fill="#b0b4b9"/></svg><div class="a" style="left:0px;top:516.5px;width:985px;height:1px;background:#c6cacf"></div><div class="a" style="left:0px;top:517.5px;width:985px;height:13px;background:linear-gradient(#e9ecef,#dcdfe3)"></div><div class="a" style="left:940px;top:518px;width:1px;height:12px;background:#c4c8cc"></div><div class="t" style="left:3.0px;top:520.43px;font-size:8.0px;font-weight:normal;color:#222;transform:scaleX(0.893);">Щелкните левой кнопкой мыши на объекте для его выделения (вместе с Ctrl - добавить к выделенным)</div><svg style="left:30px;top:57.5px" width="10" height="10" viewBox="0 0 10 10"><path d="M1.5 1.5 H7 L9 3.5 V9.5 H1.5Z" fill="#fff" stroke="#222" stroke-width="1.1"/><path d="M0.5 0.5 H6" stroke="#222" stroke-width="1"/><circle cx="5" cy="6" r="2" fill="none" stroke="#222" stroke-width="0.9"/><path d="M3 8.5 L5 6" stroke="#222" stroke-width="0.8"/></svg><svg style="left:3px;top:61px" width="8" height="8" viewBox="0 0 10 10"><rect x="0" y="0" width="10" height="10" fill="#f3d66a"/><path d="M1.5 8 L3 2 L8 1.5" fill="none" stroke="#e08020" stroke-width="1.2"/><circle cx="6" cy="6" r="3" fill="#2a6ad0"/></svg><svg style="left:3px;top:69.5px" width="8" height="8" viewBox="0 0 10 10"><path d="M5 1 L9.3 3 V7.3 L5 9.5 L0.7 7.3 V3Z" fill="#1a7ae8"/><path d="M0.7 3 L5 5 L9.3 3 L5 1Z" fill="#7ac8ff"/></svg><svg style="left:3px;top:78px" width="8" height="8" viewBox="0 0 10 10"><path d="M3 1 L6.5 3 L3 6 L6.5 9" fill="none" stroke="#222" stroke-width="1.1"/></svg><svg style="left:3px;top:88.5px" width="8" height="8" viewBox="0 0 10 10"><path d="M5 1 L9.5 5 L5 9 L0.5 5Z" fill="#2a7ae0" stroke="#0a3a90" stroke-width="0.6"/><path d="M3 4 L7 6" stroke="#aad8ff" stroke-width="0.8"/></svg><svg style="left:3px;top:97px" width="8" height="8" viewBox="0 0 10 10"><circle cx="2.5" cy="2.5" r="1.5" fill="#2a4ad0"/><circle cx="7.5" cy="2.5" r="1.5" fill="#2a4ad0"/><circle cx="2.5" cy="7.5" r="1.5" fill="#2a4ad0"/><circle cx="7.5" cy="7.5" r="1.5" fill="#2a4ad0"/></svg><svg style="left:3px;top:106px" width="8" height="8" viewBox="0 0 10 10"><path d="M1 2 L5 6 L9 2" stroke="#1a4ad0" stroke-width="1.5" fill="none"/><circle cx="5.5" cy="6.5" r="2.8" fill="#1aa0e0"/></svg><svg style="left:3px;top:115.5px" width="8" height="8" viewBox="0 0 10 10"><path d="M2 8.5 L7.5 2 Q9 1 9 3 L4 9 Q2 10 2 8.5Z" fill="none" stroke="#888" stroke-width="1.2"/></svg><svg style="left:3px;top:125.5px" width="8" height="8" viewBox="0 0 10 10"><path d="M1 9 L5 1.5 L9 9" fill="none" stroke="#222" stroke-width="1.3"/></svg><svg style="left:3px;top:133.7px" width="8" height="8" viewBox="0 0 10 10"><path d="M0.5 1 H9.5 L5 6Z" fill="#1a8ad8"/><rect x="4.3" y="5.5" width="1.4" height="2.5" fill="#1a5aa8"/><circle cx="5" cy="9" r="0.9" fill="#e02020"/></svg><svg style="left:3px;top:144px" width="8" height="8" viewBox="0 0 10 10"><path d="M1.5 0.5 H6.5 L8.5 2.5 V9.5 H1.5Z" fill="#fff" stroke="#222" stroke-width="1"/><rect x="3" y="4" width="4" height="4" fill="#333"/></svg><svg style="left:3px;top:153px" width="8" height="8" viewBox="0 0 10 10"><rect x="0.8" y="0.8" width="8.4" height="8.4" fill="#2a4ac0" stroke="#0a1a70" stroke-width="0.6"/><rect x="2.2" y="2.2" width="5.6" height="5.6" fill="#dfe8ff"/></svg><svg style="left:3px;top:162px" width="8" height="8" viewBox="0 0 10 10"><circle cx="4" cy="3" r="2" fill="none" stroke="#1a3ab0" stroke-width="1"/><path d="M1 9 H9 M4 5 V9 L8 6" fill="none" stroke="#1a3ab0" stroke-width="0.9"/></svg><svg style="left:3px;top:170.7px" width="8" height="8" viewBox="0 0 10 10"><path d="M0.5 9 A4.5 4.5 0 0 1 9.5 9Z" fill="#1a5ad0"/><path d="M2 3 L4 1" stroke="#1a5ad0" stroke-width="1.2"/></svg><svg style="left:3px;top:186px" width="8" height="8" viewBox="0 0 10 10"><rect x="0.5" y="1.5" width="8" height="8" fill="#1a5ad0" stroke="#0a2a80" stroke-width="0.6"/><circle cx="4.5" cy="5.5" r="2" fill="#bfe0ff"/><circle cx="8.5" cy="1.5" r="1.5" fill="#f0c020"/></svg><svg style="left:3px;top:197.5px" width="8" height="8" viewBox="0 0 10 10"><rect x="1.5" y="0.5" width="8" height="6" fill="#1a5ad0"/><ellipse cx="4" cy="7.5" rx="3.5" ry="2" fill="#f0d040" stroke="#555" stroke-width="0.5"/></svg><svg style="left:3px;top:213px" width="8" height="8" viewBox="0 0 10 10"><path d="M1 3 L5 1 L9 3 V8 L5 9.5 L1 8Z" fill="#1a5ad0"/><path d="M1 3 L5 5 L9 3" fill="none" stroke="#aad0ff" stroke-width="0.7"/><circle cx="3" cy="1.2" r="1" fill="#1a5ad0"/></svg><svg style="left:3px;top:225px" width="8" height="8" viewBox="0 0 10 10"><path d="M1 4 L5 2 L9 4 V8 L5 9.5 L1 8Z" fill="#1a5ad0"/><path d="M4 0.5 L8 3" stroke="#222" stroke-width="1"/></svg><svg style="left:3px;top:237px" width="8" height="8" viewBox="0 0 10 10"><path d="M2 9 L4 5 L9 1 L8 5 Z" fill="none" stroke="#b0b4b8" stroke-width="0.9"/></svg><svg style="left:3px;top:248px" width="8" height="8" viewBox="0 0 10 10"><circle cx="5" cy="5" r="4" fill="none" stroke="#b8bcc0" stroke-width="0.9"/><path d="M5 1 V9" stroke="#b8bcc0" stroke-width="0.8"/></svg><svg style="left:3px;top:264.5px" width="8" height="8" viewBox="0 0 10 10"><circle cx="5.5" cy="5" r="3.8" fill="none" stroke="#a8acb0" stroke-width="0.9"/><path d="M0.5 3 H3 M0.5 6 H3" stroke="#a8acb0" stroke-width="0.8"/></svg><svg style="left:3px;top:276px" width="8" height="8" viewBox="0 0 10 10"><path d="M1 6 L5 2 L9 5 V9 H1Z" fill="none" stroke="#b8bcc0" stroke-width="0.9"/><path d="M5 5 V9" stroke="#b8bcc0" stroke-width="0.8"/></svg><svg style="left:3px;top:292px" width="8" height="8" viewBox="0 0 10 10"><rect x="0.5" y="4" width="6" height="5.5" fill="#fff" stroke="#333" stroke-width="0.8"/><path d="M4 4 L7 0.5 L9.5 3 V6 L6.5 7Z" fill="#1a6ae0"/><rect x="2" y="5.5" width="2.5" height="2.5" fill="#8a40c0"/></svg><svg style="left:3px;top:304px" width="8" height="8" viewBox="0 0 10 10"><rect x="0.5" y="4.5" width="6" height="5" fill="#fff" stroke="#333" stroke-width="0.8"/><path d="M3 4 L5 0.5 L9.5 2 V6 L6 7Z" fill="#1a6ae0"/><path d="M2.5 4.5 L5 2" stroke="#d02020" stroke-width="0.8"/></svg><div class="a" style="left:2px;top:182px;width:9px;height:1px;background:#c4c8cd"></div><div class="a" style="left:2px;top:209px;width:9px;height:1px;background:#c4c8cd"></div><div class="a" style="left:2px;top:260.5px;width:9px;height:1px;background:#c4c8cd"></div><div class="a" style="left:2px;top:288px;width:9px;height:1px;background:#c4c8cd"></div><div class="a" style="left:16px;top:96px;width:167px;height:369px;overflow:hidden"><div class="a" style="left:9px;top:19.03px;width:1px;height:179.67999999999998px;background:repeating-linear-gradient(#a4aaaf 0 1px,transparent 1px 2px)"></div><div class="a" style="left:20px;top:124.10000000000002px;width:1px;height:63.379999999999995px;background:repeating-linear-gradient(#a4aaaf 0 1px,transparent 1px 2px)"></div><div class="a" style="left:32px;top:146.56px;width:1px;height:29.689999999999998px;background:repeating-linear-gradient(#a4aaaf 0 1px,transparent 1px 2px)"></div><div class="a" style="left:13px;top:19px;width:3px;height:1px;background:repeating-linear-gradient(90deg,#a4aaaf 0 1px,transparent 1px 2px)"></div><div class="a" style="left:6px;top:16px;width:7px;height:7px;background:#fff;border:1px solid #b4bac1"></div><div class="a" style="left:8px;top:19px;width:3px;height:1px;background:#5a5e64"></div><div class="a" style="left:9px;top:18px;width:1px;height:3px;background:#5a5e64"></div><div class="a" style="left:13px;top:30px;width:3px;height:1px;background:repeating-linear-gradient(90deg,#a4aaaf 0 1px,transparent 1px 2px)"></div><div class="a" style="left:6px;top:27px;width:7px;height:7px;background:#fff;border:1px solid #b4bac1"></div><div class="a" style="left:8px;top:30px;width:3px;height:1px;background:#5a5e64"></div><div class="a" style="left:9px;top:29px;width:1px;height:3px;background:#5a5e64"></div><div class="a" style="left:13px;top:41px;width:3px;height:1px;background:repeating-linear-gradient(90deg,#a4aaaf 0 1px,transparent 1px 2px)"></div><div class="a" style="left:6px;top:38px;width:7px;height:7px;background:#fff;border:1px solid #b4bac1"></div><div class="a" style="left:8px;top:41px;width:3px;height:1px;background:#5a5e64"></div><div class="a" style="left:9px;top:40px;width:1px;height:3px;background:#5a5e64"></div><div class="a" style="left:13px;top:53px;width:3px;height:1px;background:repeating-linear-gradient(90deg,#a4aaaf 0 1px,transparent 1px 2px)"></div><div class="a" style="left:6px;top:50px;width:7px;height:7px;background:#fff;border:1px solid #b4bac1"></div><div class="a" style="left:8px;top:53px;width:3px;height:1px;background:#5a5e64"></div><div class="a" style="left:9px;top:52px;width:1px;height:3px;background:#5a5e64"></div><div class="a" style="left:13px;top:64px;width:3px;height:1px;background:repeating-linear-gradient(90deg,#a4aaaf 0 1px,transparent 1px 2px)"></div><div class="a" style="left:6px;top:61px;width:7px;height:7px;background:#fff;border:1px solid #b4bac1"></div><div class="a" style="left:8px;top:64px;width:3px;height:1px;background:#5a5e64"></div><div class="a" style="left:9px;top:63px;width:1px;height:3px;background:#5a5e64"></div><div class="a" style="left:13px;top:75px;width:3px;height:1px;background:repeating-linear-gradient(90deg,#a4aaaf 0 1px,transparent 1px 2px)"></div><div class="a" style="left:6px;top:72px;width:7px;height:7px;background:#fff;border:1px solid #b4bac1"></div><div class="a" style="left:8px;top:75px;width:3px;height:1px;background:#5a5e64"></div><div class="a" style="left:9px;top:74px;width:1px;height:3px;background:#5a5e64"></div><div class="a" style="left:13px;top:86px;width:3px;height:1px;background:repeating-linear-gradient(90deg,#a4aaaf 0 1px,transparent 1px 2px)"></div><div class="a" style="left:6px;top:83px;width:7px;height:7px;background:#fff;border:1px solid #b4bac1"></div><div class="a" style="left:8px;top:86px;width:3px;height:1px;background:#5a5e64"></div><div class="a" style="left:9px;top:85px;width:1px;height:3px;background:#5a5e64"></div><div class="a" style="left:13px;top:98px;width:3px;height:1px;background:repeating-linear-gradient(90deg,#a4aaaf 0 1px,transparent 1px 2px)"></div><div class="a" style="left:6px;top:95px;width:7px;height:7px;background:#fff;border:1px solid #b4bac1"></div><div class="a" style="left:8px;top:98px;width:3px;height:1px;background:#5a5e64"></div><div class="a" style="left:9px;top:97px;width:1px;height:3px;background:#5a5e64"></div><div class="a" style="left:13px;top:109px;width:3px;height:1px;background:repeating-linear-gradient(90deg,#a4aaaf 0 1px,transparent 1px 2px)"></div><div class="a" style="left:6px;top:106px;width:7px;height:7px;background:#fff;border:1px solid #b4bac1"></div><div class="a" style="left:8px;top:109px;width:3px;height:1px;background:#5a5e64"></div><div class="a" style="left:9px;top:108px;width:1px;height:3px;background:#5a5e64"></div><div class="a" style="left:13px;top:120px;width:3px;height:1px;background:repeating-linear-gradient(90deg,#a4aaaf 0 1px,transparent 1px 2px)"></div><div class="a" style="left:6px;top:117px;width:7px;height:7px;background:#fff;border:1px solid #b4bac1"></div><div class="a" style="left:8px;top:120px;width:3px;height:1px;background:#5a5e64"></div><div class="a" style="left:24px;top:131px;width:3px;height:1px;background:repeating-linear-gradient(90deg,#a4aaaf 0 1px,transparent 1px 2px)"></div><div class="a" style="left:17px;top:128px;width:7px;height:7px;background:#fff;border:1px solid #b4bac1"></div><div class="a" style="left:19px;top:131px;width:3px;height:1px;background:#5a5e64"></div><div class="a" style="left:20px;top:130px;width:1px;height:3px;background:#5a5e64"></div><div class="a" style="left:24px;top:143px;width:3px;height:1px;background:repeating-linear-gradient(90deg,#a4aaaf 0 1px,transparent 1px 2px)"></div><div class="a" style="left:17px;top:140px;width:7px;height:7px;background:#fff;border:1px solid #b4bac1"></div><div class="a" style="left:19px;top:143px;width:3px;height:1px;background:#5a5e64"></div><div class="a" style="left:36px;top:154px;width:3px;height:1px;background:repeating-linear-gradient(90deg,#a4aaaf 0 1px,transparent 1px 2px)"></div><div class="a" style="left:29px;top:151px;width:7px;height:7px;background:#fff;border:1px solid #b4bac1"></div><div class="a" style="left:31px;top:154px;width:3px;height:1px;background:#5a5e64"></div><div class="a" style="left:32px;top:153px;width:1px;height:3px;background:#5a5e64"></div><div class="a" style="left:36px;top:165px;width:3px;height:1px;background:repeating-linear-gradient(90deg,#a4aaaf 0 1px,transparent 1px 2px)"></div><div class="a" style="left:36px;top:176px;width:3px;height:1px;background:repeating-linear-gradient(90deg,#a4aaaf 0 1px,transparent 1px 2px)"></div><div class="a" style="left:29px;top:173px;width:7px;height:7px;background:#fff;border:1px solid #b4bac1"></div><div class="a" style="left:31px;top:176px;width:3px;height:1px;background:#5a5e64"></div><div class="a" style="left:32px;top:175px;width:1px;height:3px;background:#5a5e64"></div><div class="a" style="left:24px;top:187px;width:3px;height:1px;background:repeating-linear-gradient(90deg,#a4aaaf 0 1px,transparent 1px 2px)"></div><div class="a" style="left:17px;top:184px;width:7px;height:7px;background:#fff;border:1px solid #b4bac1"></div><div class="a" style="left:19px;top:187px;width:3px;height:1px;background:#5a5e64"></div><div class="a" style="left:20px;top:186px;width:1px;height:3px;background:#5a5e64"></div><div class="a" style="left:13px;top:199px;width:3px;height:1px;background:repeating-linear-gradient(90deg,#a4aaaf 0 1px,transparent 1px 2px)"></div><div class="a" style="left:6px;top:196px;width:7px;height:7px;background:#fff;border:1px solid #b4bac1"></div><div class="a" style="left:8px;top:199px;width:3px;height:1px;background:#5a5e64"></div><div class="a" style="left:9px;top:198px;width:1px;height:3px;background:#5a5e64"></div></div><div class="a" style="left:16px;top:96px;width:167px;height:359px;overflow:hidden"><div class="a" style="left:-16px;top:-96px;width:985px;height:530px"><svg style="left:20.5px;top:99.3px" width="8.5" height="8.5" viewBox="0 0 10 10"><path d="M0.5 2 H4 L5 3 H9.5 V9.5 H0.5Z" fill="#9a7a30" stroke="#4a3a10" stroke-width="0.8"/><rect x="3" y="4.5" width="4" height="3.5" fill="#f0d080" stroke="#4a3a10" stroke-width="0.6"/><rect x="4.2" y="5.5" width="1.6" height="1.5" fill="#c02020"/></svg><div class="t" style="left:32.5px;top:99.80px;font-size:8.5px;font-weight:normal;color:#262626;transform:scaleX(0.92)">(+) Печь четырехсекционная (Тел-0, Сбор</div><svg style="left:32.5px;top:110.53px" width="8.5" height="8.5" viewBox="0 0 10 10"><path d="M4.5 0.5 V6 L0.5 9.5 M4.5 6 L9.5 6" fill="none" stroke="#a0a4a8" stroke-width="0.7"/></svg><div class="t" style="left:44.2px;top:111.03px;font-size:8.5px;font-weight:normal;color:#262626;transform:scaleX(0.92)">(т)Начало координат</div><svg style="left:32.5px;top:121.75999999999999px" width="8.5" height="8.5" viewBox="0 0 10 10"><path d="M0.5 9.5 V3.2 L2.8 0.8 L4.6 2.6 L6.4 3.4 L7.6 5.6 L9.6 7.6 V9.5Z" fill="#1a2cb4" stroke="#0a1470" stroke-width="0.5"/><path d="M2.5 4.5 V8 M4 5.5 L5.5 8.5 M6 6 L7.5 8.2" stroke="#3ac8f0" stroke-width="0.9" fill="none"/></svg><div class="t" style="left:44.2px;top:122.26px;font-size:8.5px;font-weight:normal;color:#262626;transform:scaleX(0.92)">(+) 02-14 Камера радиации с камерами</div><svg style="left:32.5px;top:132.99px" width="8.5" height="8.5" viewBox="0 0 10 10"><path d="M0.5 9.5 V3.2 L2.8 0.8 L4.6 2.6 L6.4 3.4 L7.6 5.6 L9.6 7.6 V9.5Z" fill="#1a2cb4" stroke="#0a1470" stroke-width="0.5"/><path d="M2.5 4.5 V8 M4 5.5 L5.5 8.5 M6 6 L7.5 8.2" stroke="#3ac8f0" stroke-width="0.9" fill="none"/></svg><div class="t" style="left:44.2px;top:133.49px;font-size:8.5px;font-weight:normal;color:#262626;transform:scaleX(0.92)">(+) 02-14 ДТ в МП</div><svg style="left:32.5px;top:144.22px" width="8.5" height="8.5" viewBox="0 0 10 10"><path d="M0.5 9.5 V3.2 L2.8 0.8 L4.6 2.6 L6.4 3.4 L7.6 5.6 L9.6 7.6 V9.5Z" fill="#1a2cb4" stroke="#0a1470" stroke-width="0.5"/><path d="M2.5 4.5 V8 M4 5.5 L5.5 8.5 M6 6 L7.5 8.2" stroke="#3ac8f0" stroke-width="0.9" fill="none"/></svg><div class="t" style="left:44.2px;top:144.72px;font-size:8.5px;font-weight:normal;color:#262626;transform:scaleX(0.92)">(+) 02-14 ВхДТ в МП</div><svg style="left:32.5px;top:155.45px" width="8.5" height="8.5" viewBox="0 0 10 10"><path d="M0.5 9.5 V3.2 L2.8 0.8 L4.6 2.6 L6.4 3.4 L7.6 5.6 L9.6 7.6 V9.5Z" fill="#1a2cb4" stroke="#0a1470" stroke-width="0.5"/><path d="M2.5 4.5 V8 M4 5.5 L5.5 8.5 M6 6 L7.5 8.2" stroke="#3ac8f0" stroke-width="0.9" fill="none"/></svg><div class="t" style="left:44.2px;top:155.95px;font-size:8.5px;font-weight:normal;color:#262626;transform:scaleX(0.92)">(+) 02-14 ВхДТ 03+04 в МП</div><svg style="left:32.5px;top:166.68px" width="8.5" height="8.5" viewBox="0 0 10 10"><path d="M0.5 9.5 V3.2 L2.8 0.8 L4.6 2.6 L6.4 3.4 L7.6 5.6 L9.6 7.6 V9.5Z" fill="#1a2cb4" stroke="#0a1470" stroke-width="0.5"/><path d="M2.5 4.5 V8 M4 5.5 L5.5 8.5 M6 6 L7.5 8.2" stroke="#3ac8f0" stroke-width="0.9" fill="none"/></svg><div class="t" style="left:44.2px;top:167.18px;font-size:8.5px;font-weight:normal;color:#262626;transform:scaleX(0.92)">(+) 02-14 Газосборники в МП</div><svg style="left:32.5px;top:177.91px" width="8.5" height="8.5" viewBox="0 0 10 10"><path d="M0.5 9.5 V3.2 L2.8 0.8 L4.6 2.6 L6.4 3.4 L7.6 5.6 L9.6 7.6 V9.5Z" fill="#1a2cb4" stroke="#0a1470" stroke-width="0.5"/><path d="M2.5 4.5 V8 M4 5.5 L5.5 8.5 M6 6 L7.5 8.2" stroke="#3ac8f0" stroke-width="0.9" fill="none"/></svg><div class="t" style="left:44.2px;top:178.41px;font-size:8.5px;font-weight:normal;color:#262626;transform:scaleX(0.92)">(+) 02-14 Переходы 05+06 в МП</div><svg style="left:32.5px;top:189.14px" width="8.5" height="8.5" viewBox="0 0 10 10"><path d="M0.5 9.5 V3.2 L2.8 0.8 L4.6 2.6 L6.4 3.4 L7.6 5.6 L9.6 7.6 V9.5Z" fill="#1a2cb4" stroke="#0a1470" stroke-width="0.5"/><path d="M2.5 4.5 V8 M4 5.5 L5.5 8.5 M6 6 L7.5 8.2" stroke="#3ac8f0" stroke-width="0.9" fill="none"/></svg><div class="t" style="left:44.2px;top:189.64px;font-size:8.5px;font-weight:normal;color:#262626;transform:scaleX(0.92)">(+) сборка площадок</div><svg style="left:32.5px;top:200.37px" width="8.5" height="8.5" viewBox="0 0 10 10"><path d="M0.5 9.5 V3.2 L2.8 0.8 L4.6 2.6 L6.4 3.4 L7.6 5.6 L9.6 7.6 V9.5Z" fill="#1a2cb4" stroke="#0a1470" stroke-width="0.5"/><path d="M2.5 4.5 V8 M4 5.5 L5.5 8.5 M6 6 L7.5 8.2" stroke="#3ac8f0" stroke-width="0.9" fill="none"/></svg><div class="t" style="left:44.2px;top:200.87px;font-size:8.5px;font-weight:normal;color:#262626;transform:scaleX(0.92)">(ф) 02-14 СП в МП</div><svg style="left:32.5px;top:211.60000000000002px" width="8.5" height="8.5" viewBox="0 0 10 10"><path d="M0.5 9.5 V3.2 L2.8 0.8 L4.6 2.6 L6.4 3.4 L7.6 5.6 L9.6 7.6 V9.5Z" fill="#1a2cb4" stroke="#0a1470" stroke-width="0.5"/><path d="M2.5 4.5 V8 M4 5.5 L5.5 8.5 M6 6 L7.5 8.2" stroke="#3ac8f0" stroke-width="0.9" fill="none"/></svg><div class="t" style="left:44.2px;top:212.10px;font-size:8.5px;font-weight:normal;color:#262626;transform:scaleX(0.92)">(ф) 02-14 Обвязка в МП</div><svg style="left:44.3px;top:222.82999999999998px" width="8.5" height="8.5" viewBox="0 0 10 10"><path d="M4.5 0.5 V6 L0.5 9.5 M4.5 6 L9.5 6" fill="none" stroke="#a0a4a8" stroke-width="0.7"/></svg><div class="t" style="left:56.0px;top:223.33px;font-size:8.5px;font-weight:normal;color:#262626;transform:scaleX(0.92)">(т)Начало координат</div><svg style="left:44.3px;top:234.06px" width="8.5" height="8.5" viewBox="0 0 10 10"><path d="M0.5 9.5 V3.2 L2.8 0.8 L4.6 2.6 L6.4 3.4 L7.6 5.6 L9.6 7.6 V9.5Z" fill="#1a2cb4" stroke="#0a1470" stroke-width="0.5"/><path d="M2.5 4.5 V8 M4 5.5 L5.5 8.5 M6 6 L7.5 8.2" stroke="#3ac8f0" stroke-width="0.9" fill="none"/></svg><div class="t" style="left:56.0px;top:234.56px;font-size:8.5px;font-weight:normal;color:#262626;transform:scaleX(0.92)">(+)</div><svg style="left:56.1px;top:245.29000000000002px" width="8.5" height="8.5" viewBox="0 0 10 10"><path d="M4.5 0.5 V6 L0.5 9.5 M4.5 6 L9.5 6" fill="none" stroke="#a0a4a8" stroke-width="0.7"/></svg><div class="t" style="left:67.8px;top:245.79px;font-size:8.5px;font-weight:normal;color:#262626;transform:scaleX(0.92)">(т)Начало координат</div><svg style="left:56.1px;top:256.52px" width="8.5" height="8.5" viewBox="0 0 10 10"><path d="M2.2 9.3 Q0 8.8 0.8 6.4 L5.6 1.2 Q7.6 -0.4 9.2 1.2 Q10 3 8.8 4.2 L4 9.2 Q3.2 9.8 2.2 9.3Z" fill="#5a5ad8" stroke="#2a2a8a" stroke-width="0.7"/><path d="M2 6.8 L6 2.6 M3 8.2 L7.6 3.4 M1.5 5 L4.8 1.8" stroke="#d8d8ff" stroke-width="0.6"/></svg><div class="t" style="left:67.8px;top:257.02px;font-size:8.5px;font-weight:normal;color:#262626;transform:scaleX(0.92)">Сопряжения</div><svg style="left:56.1px;top:267.75px" width="8.5" height="8.5" viewBox="0 0 10 10"><rect x="0.5" y="0.5" width="4" height="4" fill="#2a8ad8"/><rect x="5" y="1" width="4" height="3.5" fill="#1a4ac8"/><rect x="3" y="5" width="6" height="4.5" fill="#e8c840" stroke="#555" stroke-width="0.5"/><circle cx="2" cy="7" r="1.5" fill="#1a1a60"/></svg><div class="t" style="left:67.8px;top:268.25px;font-size:8.5px;font-weight:normal;color:#262626;transform:scaleX(0.92)">Макро:1</div><svg style="left:44.3px;top:278.98px" width="8.5" height="8.5" viewBox="0 0 10 10"><path d="M2.2 9.3 Q0 8.8 0.8 6.4 L5.6 1.2 Q7.6 -0.4 9.2 1.2 Q10 3 8.8 4.2 L4 9.2 Q3.2 9.8 2.2 9.3Z" fill="#5a5ad8" stroke="#2a2a8a" stroke-width="0.7"/><path d="M2 6.8 L6 2.6 M3 8.2 L7.6 3.4 M1.5 5 L4.8 1.8" stroke="#d8d8ff" stroke-width="0.6"/></svg><div class="t" style="left:56.0px;top:279.48px;font-size:8.5px;font-weight:normal;color:#262626;transform:scaleX(0.92)">Сопряжения</div><svg style="left:32.5px;top:290.21px" width="8.5" height="8.5" viewBox="0 0 10 10"><path d="M2.2 9.3 Q0 8.8 0.8 6.4 L5.6 1.2 Q7.6 -0.4 9.2 1.2 Q10 3 8.8 4.2 L4 9.2 Q3.2 9.8 2.2 9.3Z" fill="#5a5ad8" stroke="#2a2a8a" stroke-width="0.7"/><path d="M2 6.8 L6 2.6 M3 8.2 L7.6 3.4 M1.5 5 L4.8 1.8" stroke="#d8d8ff" stroke-width="0.6"/></svg><div class="t" style="left:44.2px;top:290.71px;font-size:8.5px;font-weight:normal;color:#262626;transform:scaleX(0.92)">Сопряжения</div></div></div><div class="a" style="left:22px;top:298.5px;width:156px;height:4px;background:linear-gradient(#f0f0f0,#b8bcc0);border:1px solid #a0a4a8;border-radius:2px"></div><div class="a" style="left:16px;top:455px;width:167px;height:11px;background:#f0f0f0"></div><div class="a" style="left:29px;top:456px;width:88px;height:9px;background:#cdcdcd"></div><svg style="left:20px;top:457px;" width="5" height="7" viewBox="0 0 5 7"><path d="M4 0.5 L1 3.5 L4 6.5" fill="none" stroke="#333" stroke-width="1.2"/></svg><svg style="left:175px;top:457px;" width="5" height="7" viewBox="0 0 5 7"><path d="M1 0.5 L4 3.5 L1 6.5" fill="none" stroke="#333" stroke-width="1.2"/></svg></body></html>
